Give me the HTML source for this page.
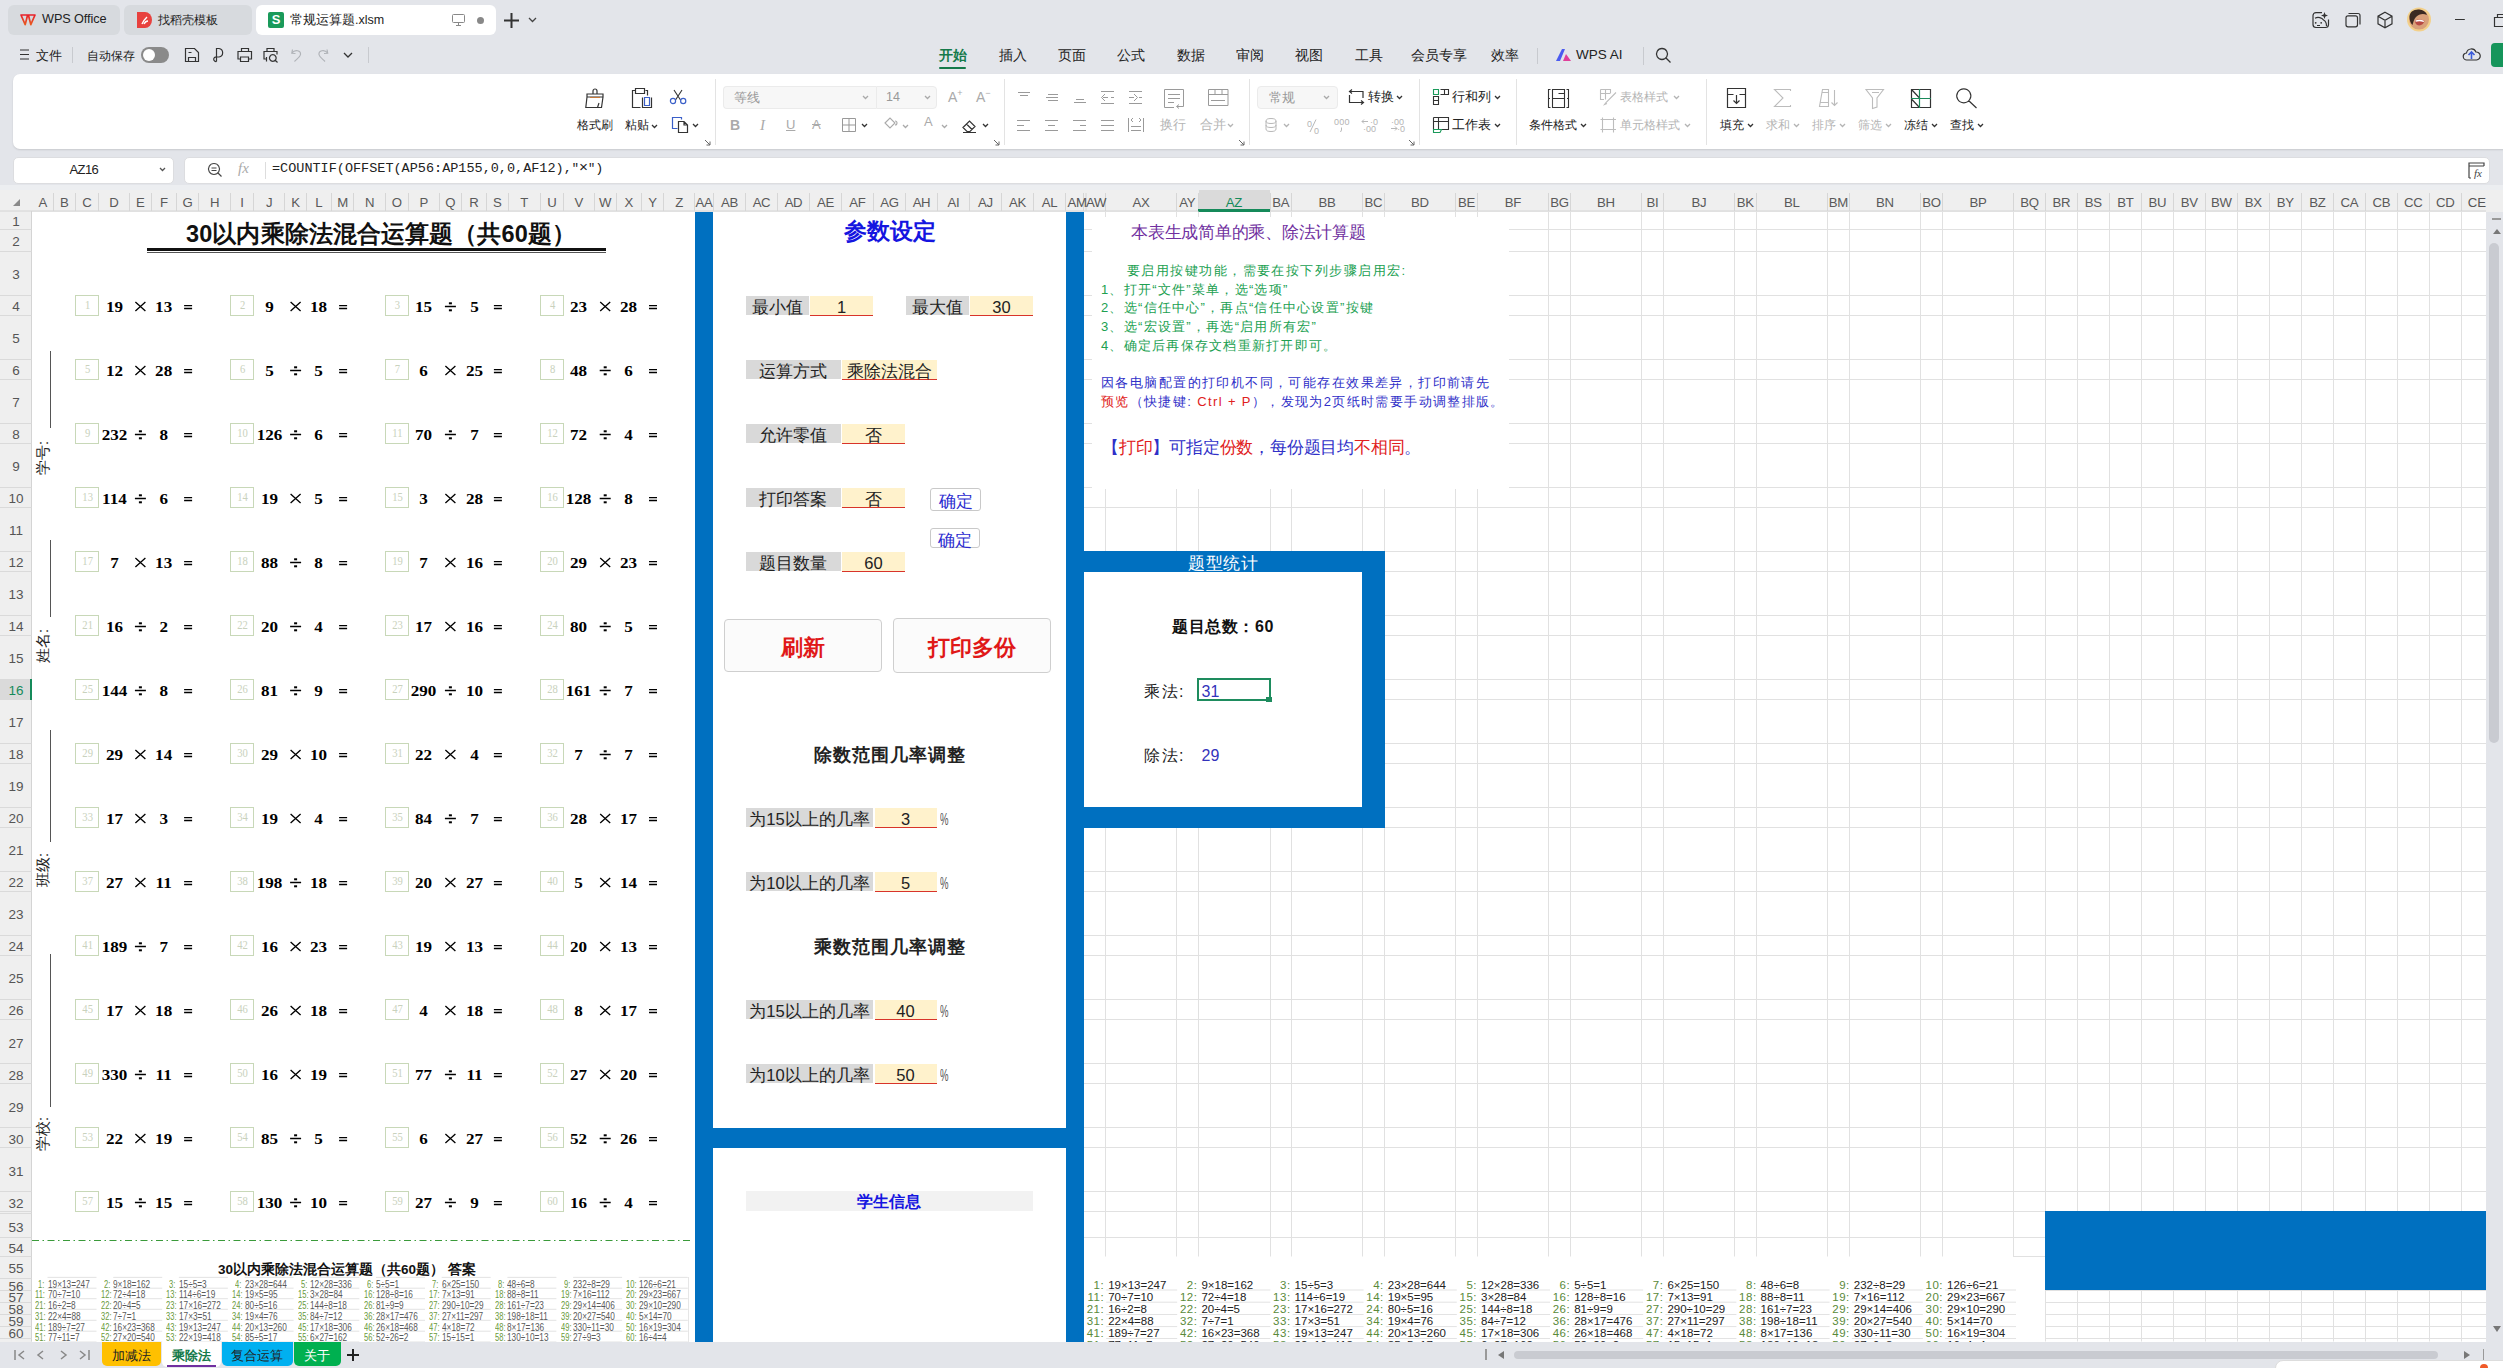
<!DOCTYPE html><html><head><meta charset="utf-8"><title>WPS</title><style>
*{box-sizing:border-box;margin:0;padding:0}
html,body{width:2503px;height:1368px;overflow:hidden;background:#e3e5ea;font-family:"Liberation Sans",sans-serif;color:#222}
.a{position:absolute;white-space:nowrap}
.c{position:absolute;white-space:nowrap;text-align:center}
svg{position:absolute;overflow:visible}
</style></head><body>

<div class="a" style="left:8px;top:5px;width:112px;height:30px;background:#d7dade;border-radius:6px"></div>
<div class="a" style="left:124px;top:5px;width:128px;height:30px;background:#d7dade;border-radius:6px"></div>
<div class="a" style="left:256px;top:5px;width:240px;height:30px;background:#fff;border-radius:6px"></div>
<svg style="left:20px;top:14px" width="16" height="12" viewBox="0 0 16 12"><defs><linearGradient id="wg" x1="0" y1="0" x2="0" y2="1"><stop offset="0" stop-color="#e8202a"/><stop offset="1" stop-color="#e85a20"/></linearGradient></defs><path d="M1 1 H7.6 L5.2 10.6 Z M8.4 1 H15 L10.8 10.6 Z" fill="none" stroke="url(#wg)" stroke-width="1.7" stroke-linejoin="round"/></svg>
<div class="a" style="left:42px;top:12px;font-size:12.7px;color:#222;letter-spacing:-0.1px">WPS Office</div>
<svg style="left:137px;top:12px" width="15" height="16" viewBox="0 0 15 16"><path d="M0 0 H8 A7 8 0 0 1 8 16 H0 Z" fill="#e8413e"/><path d="M5 12 C6 9 8 7 10 5 M7 12 C8 10 9 9 11 9" stroke="#fff" stroke-width="1.4" fill="none"/></svg>
<div class="a" style="left:158px;top:12px;font-size:12px;color:#222">找稻壳模板</div>
<div class="a" style="left:268px;top:12px;width:16px;height:16px;background:#1a9a5a;border-radius:2px;color:#fff;font-size:13px;font-weight:bold;text-align:center;line-height:16px">S</div>
<div class="a" style="left:290px;top:12px;font-size:12.5px;color:#222">常规运算题.xlsm</div>
<svg style="left:452px;top:14px" width="13" height="12" viewBox="0 0 13 12"><rect x="0.5" y="0.5" width="12" height="8" rx="1" fill="none" stroke="#888" stroke-width="1"/><path d="M4 11.5 H9 M6.5 9 V11.5" stroke="#888"/></svg>
<div class="a" style="left:477px;top:17px;width:7px;height:7px;border-radius:50%;background:#888"></div>
<svg style="left:504px;top:13px" width="15" height="15" viewBox="0 0 15 15"><path d="M7.5 0 V15 M0 7.5 H15" stroke="#333" stroke-width="2"/></svg>
<svg style="left:528px;top:17px" width="9" height="6" viewBox="0 0 9 6"><path d="M1 1 L4.5 4.5 L8 1" stroke="#444" stroke-width="1.3" fill="none"/></svg>
<svg style="left:2305px;top:5px" width="198" height="30" viewBox="0 0 198 30"><path d="M17 7.6 H11 A3 3 0 0 0 8 10.6 V19.5 A3 3 0 0 0 11 22.5 H20.5 A3 3 0 0 0 23.5 19.5 V14.5 M10 13.2 C13 11.5 17 12.8 18.5 15 C20.5 16 21.5 18 21.5 21 M12 20.5 H15 M43.5 8.5 H53 A2 2 0 0 1 55 10.5 V19.5 M43 10.8 H50.5 A2 2 0 0 1 52.5 12.8 V19.8 A2 2 0 0 1 50.5 21.8 H43 A2 2 0 0 1 41 19.8 V12.8 A2 2 0 0 1 43 10.8 Z M80 7.3 L87 11.2 V18.8 L80 22.7 L73 18.8 V11.2 Z M73 11.2 L80 15.2 L87 11.2 M80 15.2 V22.7 M150 14.5 H159.8 M192.5 12 V9.5 H203 M189.5 12.5 H201 V21.5 H189.5 Z" fill="none" stroke="#333" stroke-width="1.2"/><path d="M19.5 7 L20.4 9.6 L23 10.5 L20.4 11.4 L19.5 14 L18.6 11.4 L16 10.5 L18.6 9.6 Z" fill="#333"/><circle cx="10.7" cy="17.8" r="0.9" fill="#333"/><circle cx="16.2" cy="17.8" r="0.9" fill="#333"/><circle cx="114" cy="14.6" r="12" fill="#f3d08a"/><circle cx="114" cy="14.6" r="10" fill="#d9a07a"/><path d="M104.5 13 C104 7 109 4.2 114 4.6 C118 5 121 7 122 10 C118 8 114 9 111 12 C109 14 108 18 107.5 20 C105.5 18 104.7 15.5 104.5 13 Z" fill="#3b2a22"/><path d="M110 15.5 C113 14 117.5 14.5 119.5 16 C118.5 20 114.5 21.5 111.5 19.5 C110.5 18.5 110 17 110 15.5 Z" fill="#b84a44"/><path d="M110.3 15.5 C113 14.2 117 14.5 119.2 16 L118.5 17 C116 16 113 16 110.8 16.8 Z" fill="#fff"/></svg>
<svg style="left:20px;top:49px" width="9" height="11" viewBox="0 0 9 11"><path d="M0 1 H9 M0 5.5 H9 M0 10 H9" stroke="#333" stroke-width="1.2"/></svg>
<div class="a" style="left:36px;top:48px;font-size:12.5px;color:#222">文件</div>
<div class="a" style="left:72px;top:47px;width:1px;height:16px;background:#c8cacf"></div>
<div class="a" style="left:87px;top:48px;font-size:12px;color:#222">自动保存</div>
<div class="a" style="left:141px;top:47px;width:28px;height:16px;border-radius:8px;background:#8a8a8a"></div>
<div class="a" style="left:143px;top:49px;width:12px;height:12px;border-radius:50%;background:#fff"></div>
<svg style="left:175px;top:42px" width="200" height="26" viewBox="0 0 200 26"><path d="M10.5 6.5 H19.5 L23.5 10.5 V19.5 H10.5 Z M13.5 19.5 V15.5 H20.5 V19.5 M13.5 10.5 H16.5 M41.5 19.5 V6.5 H44 A4.3 4.3 0 0 1 44 15 H41.5 M41.5 15 A2.3 2.3 0 1 0 41.5 19.5 M66.5 9.5 V6.5 H73.5 V9.5 M66 17 H63 V9.5 H76.5 V17 H73.5 M65.5 15 H73.5 V19.5 H65.5 Z M92 9.5 V6.5 H99 V9.5 M91.5 17 H89 V9.5 H102 V12.5 M91.5 15 V19.5 M97.8 12.7 A3.3 3.3 0 1 0 97.81 12.7 M100.2 18.2 L102.5 20.5" fill="none" stroke="#333" stroke-width="1.2"/><path d="M117.5 7.5 L116.8 11.3 L120.5 11.5 M117 11 C120 7 126 8.5 125.5 12.5 C125 15 122 17 119.5 19.5 M152 7.5 L152.7 11.3 L149 11.5 M152.5 11 C149.5 7 143.5 8.5 144 12.5 C144.5 15 147.5 17 150 19.5" fill="none" stroke="#b0b3b8" stroke-width="1.2"/></svg>
<svg style="left:343px;top:52px" width="10" height="7" viewBox="0 0 10 7"><path d="M1 1 L5 5 L9 1" fill="none" stroke="#333" stroke-width="1.3" /></svg>
<div class="a" style="left:368px;top:47px;width:1px;height:16px;background:#c8cacf"></div>
<div class="a" style="left:939px;top:47px;font-size:13.5px;color:#157a4a;font-weight:bold">开始</div>
<div class="a" style="left:999px;top:47px;font-size:13.5px;color:#222;font-weight:normal">插入</div>
<div class="a" style="left:1058px;top:47px;font-size:13.5px;color:#222;font-weight:normal">页面</div>
<div class="a" style="left:1117px;top:47px;font-size:13.5px;color:#222;font-weight:normal">公式</div>
<div class="a" style="left:1177px;top:47px;font-size:13.5px;color:#222;font-weight:normal">数据</div>
<div class="a" style="left:1236px;top:47px;font-size:13.5px;color:#222;font-weight:normal">审阅</div>
<div class="a" style="left:1295px;top:47px;font-size:13.5px;color:#222;font-weight:normal">视图</div>
<div class="a" style="left:1355px;top:47px;font-size:13.5px;color:#222;font-weight:normal">工具</div>
<div class="a" style="left:1411px;top:47px;font-size:13.5px;color:#222;font-weight:normal">会员专享</div>
<div class="a" style="left:1491px;top:47px;font-size:13.5px;color:#222;font-weight:normal">效率</div>
<div class="a" style="left:939px;top:67px;width:27px;height:2px;background:#157a4a;border-radius:1px"></div>
<div class="a" style="left:1537px;top:48px;width:1px;height:16px;background:#c8cacf"></div>
<svg style="left:1556px;top:49px" width="16" height="12" viewBox="0 0 16 12"><path d="M0 12 L6 0 H9 L4 12Z" fill="#4b5bf0"/><path d="M7 12 L10 5 L15 12Z" fill="#e0409a"/></svg>
<div class="a" style="left:1576px;top:47px;font-size:13.5px;color:#222">WPS AI</div>
<div class="a" style="left:1643px;top:47px;width:1px;height:18px;background:#c8cacf"></div>
<svg style="left:1655px;top:47px" width="17" height="17" viewBox="0 0 17 17"><path d="M7 1.5 A5.5 5.5 0 1 1 6.99 1.5 M11 11 L15.5 15.5" fill="none" stroke="#333" stroke-width="1.3" /></svg>
<svg style="left:2463px;top:47px" width="17" height="14" viewBox="0 0 17 14"><path d="M4 13 A3.5 3.5 0 0 1 3.5 6 A5 5 0 0 1 13 5 A4 4 0 0 1 13.5 13 Z" fill="none" stroke="#333" stroke-width="1.2" /></svg>
<svg style="left:2467px;top:50px" width="9" height="10" viewBox="0 0 9 10"><path d="M4.5 9 V2 M1.5 5 L4.5 2 L7.5 5" stroke="#3a5bd9" stroke-width="1.6" fill="none"/></svg>
<div class="a" style="left:2491px;top:43px;width:20px;height:24px;border-radius:4px;background:#16955b"></div>
<div class="a" style="left:13px;top:74px;width:2500px;height:75px;background:#fff;border-radius:7px;box-shadow:0 1px 2px rgba(0,0,0,0.12)"></div>
<svg style="left:584px;top:86px" width="22" height="24" viewBox="0 0 22 24"><path d="M9 8 V5 A2 2 0 1 1 13 5 V8 M3 8 H19 V11 H3 Z M3 11 L1.8 21.5 H17.5 L19 11 M13.5 21.5 L15 17" fill="none" stroke="#333" stroke-width="1.2" /></svg>
<div class="a" style="left:590px;top:97px;width:10px;height:1.3px;background:#c87a3a"></div>
<div class="a" style="left:577px;top:117px;font-size:12px;color:#222">格式刷</div>
<svg style="left:630px;top:85px" width="24" height="24" viewBox="0 0 24 24"><path d="M5 5.5 H2.5 V22.5 H10.5 M15.5 5.5 H17.5 V10.5 M5.5 3.5 H14.5 V8.5 H5.5 Z M12.5 12.5 V22.5 H21.5 V12.5" fill="none" stroke="#333" stroke-width="1.2" /></svg>
<svg style="left:630px;top:85px" width="24" height="24" viewBox="0 0 24 24"><path d="M14.5 12.5 H19.5 V20.5 H14.5 Z" fill="none" stroke="#3a5fc8" stroke-width="1.2" /></svg>
<div class="a" style="left:625px;top:117px;font-size:12px;color:#222">粘贴</div>
<svg style="left:651px;top:124px" width="7" height="5" viewBox="0 0 7 5"><path d="M1 1 L3.5 3.5 L6 1" stroke="#333" stroke-width="1.3" fill="none"/></svg>
<svg style="left:668px;top:88px" width="20" height="18" viewBox="0 0 20 18"><path d="M6 2 L12.5 12 M14 2 L7.5 12" stroke="#333" stroke-width="1.1"/><circle cx="5" cy="13" r="2.6" fill="none" stroke="#3a5fc8" stroke-width="1.2"/><circle cx="15.2" cy="13" r="2.6" fill="none" stroke="#3a5fc8" stroke-width="1.2"/></svg>
<svg style="left:670px;top:115px" width="20" height="20" viewBox="0 0 20 20"><path d="M7.5 13.5 H2.5 V2.5 H11.5 V4.5" fill="none" stroke="#3a5fc8" stroke-width="1.2" /></svg>
<svg style="left:670px;top:115px" width="20" height="20" viewBox="0 0 20 20"><path d="M8.5 6.5 H14 L17.5 10 V17.5 H8.5 Z M14 6.5 V10 H17.5" fill="none" stroke="#333" stroke-width="1.2" /></svg>
<svg style="left:692px;top:123px" width="7" height="5" viewBox="0 0 7 5"><path d="M1 1 L3.5 3.5 L6 1" stroke="#333" stroke-width="1.3" fill="none"/></svg>
<svg style="left:704px;top:139px" width="7" height="7" viewBox="0 0 7 7"><path d="M1 1 L6 6 M2.5 6 H6 V2.5" fill="none" stroke="#666" stroke-width="1" /></svg>
<div class="a" style="left:715px;top:79px;width:1px;height:66px;background:#e3e3e3"></div>
<div class="a" style="left:723px;top:85.5px;width:153px;height:23px;background:#f7f7f7;border:1px solid #ebebeb;border-right:none;border-radius:4px 0 0 4px"></div>
<div class="a" style="left:876px;top:85.5px;width:61px;height:23px;background:#f7f7f7;border:1px solid #ebebeb;border-radius:0 4px 4px 0"></div>
<div class="a" style="left:734px;top:90px;font-size:12.5px;color:#999">等线</div>
<svg style="left:862px;top:95px" width="7" height="5" viewBox="0 0 7 5"><path d="M1 1 L3.5 3.5 L6 1" stroke="#aaa" stroke-width="1.3" fill="none"/></svg>
<div class="a" style="left:886px;top:90px;font-size:12.5px;color:#999">14</div>
<svg style="left:924px;top:95px" width="7" height="5" viewBox="0 0 7 5"><path d="M1 1 L3.5 3.5 L6 1" stroke="#aaa" stroke-width="1.3" fill="none"/></svg>
<div class="a" style="left:948px;top:88px;font-size:14px;color:#aaa">A<sup style="font-size:9px">+</sup></div>
<div class="a" style="left:976px;top:88px;font-size:14px;color:#aaa">A<sup style="font-size:9px">−</sup></div>
<div class="a" style="left:730px;top:117px;font-size:14px;color:#aaa"><b>B</b></div>
<div class="a" style="left:760px;top:116px;font-size:15px;color:#aaa"><i style="font-family:Liberation Serif">I</i></div>
<div class="a" style="left:786px;top:117px;font-size:13px;color:#aaa"><u>U</u></div>
<div class="a" style="left:812px;top:117px;font-size:13px;color:#aaa"><s>A</s></div>
<svg style="left:842px;top:118px" width="14" height="14" viewBox="0 0 14 14"><path d="M0.5 0.5 H13.5 V13.5 H0.5 Z M7 0.5 V13.5 M0.5 7 H13.5" fill="none" stroke="#999" stroke-width="1" /></svg>
<svg style="left:861px;top:123px" width="7" height="5" viewBox="0 0 7 5"><path d="M1 1 L3.5 3.5 L6 1" stroke="#333" stroke-width="1.3" fill="none"/></svg>
<svg style="left:883px;top:116px" width="14" height="14" viewBox="0 0 14 14"><path d="M2 7 L7 2 L12 7 L7 12 Z M12 5 A1.5 1.5 0 0 1 12 9" fill="none" stroke="#aaa" stroke-width="1.1" /></svg>
<svg style="left:902px;top:124px" width="7" height="5" viewBox="0 0 7 5"><path d="M1 1 L3.5 3.5 L6 1" stroke="#aaa" stroke-width="1.3" fill="none"/></svg>
<div class="a" style="left:924px;top:114px;font-size:13px;color:#aaa">A</div>
<svg style="left:941px;top:124px" width="7" height="5" viewBox="0 0 7 5"><path d="M1 1 L3.5 3.5 L6 1" stroke="#aaa" stroke-width="1.3" fill="none"/></svg>
<svg style="left:961px;top:117px" width="18" height="17" viewBox="0 0 18 17"><path d="M2 10.5 L8.5 4 L14 9.5 L9 14.5 H6 Z M5.5 7 L11 12.5" fill="none" stroke="#333" stroke-width="1.2" /></svg>
<div class="a" style="left:963px;top:131.8px;width:13px;height:1px;background:#333"></div>
<svg style="left:982px;top:123px" width="7" height="5" viewBox="0 0 7 5"><path d="M1 1 L3.5 3.5 L6 1" stroke="#333" stroke-width="1.3" fill="none"/></svg>
<svg style="left:993px;top:139px" width="7" height="7" viewBox="0 0 7 7"><path d="M1 1 L6 6 M2.5 6 H6 V2.5" fill="none" stroke="#666" stroke-width="1" /></svg>
<div class="a" style="left:1003.5px;top:79px;width:1px;height:66px;background:#e3e3e3"></div>
<svg style="left:1000px;top:80px" width="240" height="60" viewBox="0 0 240 60"><path d="M18 12.5 H30 M20 15.5 H28 M48 14.5 H58 M46 17.5 H58 M48 20.5 H58 M76 19.5 H84 M74 22.5 H86 M101 11.5 H114 M103 17.5 H108 M111 17.5 H114 M101 23.5 H114 M105 14 L101.5 17.5 L105 21 M129 11.5 H142 M129 17.5 H134 M139 17.5 H142 M129 23.5 H142 M134 14 L137.5 17.5 L134 21 M168 14.5 H180 M168 18.5 H180 M168 22.5 H174 M174 27.5 H164.5 V9.5 H183.5 V26.5 H177 M179 24.5 L176.5 26.5 L179 28.5 M208.5 9.5 H228 V25.5 H208.5 Z M208.5 14.5 H228 M215 9.5 V14.5 M222 9.5 V14.5 M211 20.5 H225 M17 40.5 H30 M17 45.5 H24 M17 50.5 H30 M45 40.5 H58 M48 45.5 H55 M45 50.5 H58 M73 40.5 H86 M80 45.5 H86 M73 50.5 H86 M101 40.5 H114 M101 45.5 H114 M101 50.5 H114 M128.5 38 V52 M143.5 38 V52 M131 46.5 H141 M131 50.5 H141 M133 38 L131 40 L133 42 M139 38 L141 40 L139 42" fill="none" stroke="#9a9a9a" stroke-width="1"/></svg>
<div class="a" style="left:1160px;top:117px;font-size:12.5px;color:#b4b4b4">换行</div>
<div class="a" style="left:1200px;top:117px;font-size:12.5px;color:#b4b4b4">合并</div>
<svg style="left:1227px;top:123px" width="7" height="5" viewBox="0 0 7 5"><path d="M1 1 L3.5 3.5 L6 1" stroke="#b4b4b4" stroke-width="1.3" fill="none"/></svg>
<svg style="left:1238px;top:139px" width="7" height="7" viewBox="0 0 7 7"><path d="M1 1 L6 6 M2.5 6 H6 V2.5" fill="none" stroke="#666" stroke-width="1" /></svg>
<div class="a" style="left:1248.5px;top:79px;width:1px;height:66px;background:#e3e3e3"></div>
<div class="a" style="left:1257px;top:85.5px;width:81px;height:23px;background:#f7f7f7;border:1px solid #ebebeb;border-radius:4px"></div>
<div class="a" style="left:1269px;top:90px;font-size:12.5px;color:#999">常规</div>
<svg style="left:1323px;top:95px" width="7" height="5" viewBox="0 0 7 5"><path d="M1 1 L3.5 3.5 L6 1" stroke="#aaa" stroke-width="1.3" fill="none"/></svg>
<div class="a" style="left:1368px;top:89px;font-size:12.5px;color:#222">转换</div>
<svg style="left:1396px;top:95px" width="7" height="5" viewBox="0 0 7 5"><path d="M1 1 L3.5 3.5 L6 1" stroke="#333" stroke-width="1.3" fill="none"/></svg>
<svg style="left:1250px;top:80px" width="270" height="60" viewBox="0 0 270 60"><path d="M99.5 15 V22.5 H113 M111 20.5 L113.5 22.5 L111 24.5 M113 18 V11.5 H100 M102 9.5 L99.5 11.5 L102 13.5" fill="none" stroke="#333" stroke-width="1.2"/><path d="M16 41 A5 2.5 0 0 1 26 41 A5 2.5 0 0 1 16 41 V49 A5 2.5 0 0 0 26 49 V41 M16 45 A5 2.5 0 0 0 26 45 M60 52 L66 39.5 M91.5 47.5 V50 L90.5 52 M112 41.5 H118 M114 39.5 L112 41.5 L114 43.5 M141 48.5 H147 M145 46.5 L147 48.5 L145 50.5" fill="none" stroke="#b8b8b8" stroke-width="1"/><path d="M183.5 9.5 H188.5 V14.5 H183.5 Z" fill="none" stroke="#1a9a5a" stroke-width="1.1"/><path d="M190.5 9.5 H198.5 V14.5 H190.5 M194.5 9.5 V14.5 M183.5 16.5 H188.5 V24.5 H183.5 Z M183.5 20.5 H188.5 M183.5 37.5 H198.5 V49.5 H191.5 M183.5 37.5 V49.5 M183.5 41.5 H198.5 M188.5 37.5 V49.5" fill="none" stroke="#333" stroke-width="1.1"/><path d="M183.5 49.5 V52.5 H190 L191.5 49.5 Z" fill="none" stroke="#1a9a5a" stroke-width="1.1"/></svg>
<svg style="left:1283px;top:123px" width="7" height="5" viewBox="0 0 7 5"><path d="M1 1 L3.5 3.5 L6 1" stroke="#b4b4b4" stroke-width="1.3" fill="none"/></svg>
<div class="a" style="left:1307px;top:116px;font-size:12.5px;color:#b4b4b4"><span style="font-size:9px">0</span></div>
<div class="a" style="left:1314px;top:123px;font-size:12.5px;color:#b4b4b4"><span style="font-size:9px">0</span></div>
<div class="a" style="left:1334px;top:114px;font-size:12.5px;color:#b4b4b4"><span style="font-size:9px;letter-spacing:0.3px">000</span></div>
<div class="a" style="left:1370px;top:114px;font-size:12.5px;color:#b4b4b4"><span style="font-size:9px">·0</span></div>
<div class="a" style="left:1363px;top:121px;font-size:12.5px;color:#b4b4b4"><span style="font-size:9px">·00</span></div>
<div class="a" style="left:1391px;top:114px;font-size:12.5px;color:#b4b4b4"><span style="font-size:9px">·00</span></div>
<div class="a" style="left:1397px;top:121px;font-size:12.5px;color:#b4b4b4"><span style="font-size:9px">·0</span></div>
<svg style="left:1408px;top:139px" width="7" height="7" viewBox="0 0 7 7"><path d="M1 1 L6 6 M2.5 6 H6 V2.5" fill="none" stroke="#666" stroke-width="1" /></svg>
<div class="a" style="left:1418.5px;top:79px;width:1px;height:66px;background:#e3e3e3"></div>
<div class="a" style="left:1452px;top:89px;font-size:12.5px;color:#222">行和列</div>
<svg style="left:1494px;top:95px" width="7" height="5" viewBox="0 0 7 5"><path d="M1 1 L3.5 3.5 L6 1" stroke="#333" stroke-width="1.3" fill="none"/></svg>
<div class="a" style="left:1452px;top:117px;font-size:12.5px;color:#222">工作表</div>
<svg style="left:1494px;top:123px" width="7" height="5" viewBox="0 0 7 5"><path d="M1 1 L3.5 3.5 L6 1" stroke="#333" stroke-width="1.3" fill="none"/></svg>
<div class="a" style="left:1515.5px;top:79px;width:1px;height:66px;background:#e3e3e3"></div>
<svg style="left:1520px;top:80px" width="240" height="60" viewBox="0 0 240 60"><path d="M30.5 9.5 H28.5 V27.5 H30.5 M28.5 18.5 H30 M46.5 9.5 H48.5 V27.5 H46.5 M47 18.5 H48.5 M32.5 9.5 H44.5 V27.5 H32.5 Z M32.5 18.5 H44.5 M38.5 13.5 H44.5 V18.5" fill="none" stroke="#333" stroke-width="1.1"/><path d="M80.5 9.5 H90.5 V13 M80.5 9.5 V19.5 H84 M80.5 13.5 H90.5 M85.5 9.5 V19.5 M96 12.5 L86 22.5 L84.5 24.5 L87 23.5 M82.5 37.5 V52.5 M93.5 37.5 V52.5 M80.5 39.5 H96 M80.5 49.5 H96" fill="none" stroke="#bdbdbd" stroke-width="1.1"/><path d="M207.5 8.5 H225.5 V27.5 H207.5 Z M207.5 14.5 H213.5 M219.5 14.5 H225.5 M216.5 15 V23.5 M213.5 20.5 L216.5 23.5 L219.5 20.5" fill="none" stroke="#333" stroke-width="1.2"/></svg>
<div class="a" style="left:1529px;top:117px;font-size:12px;color:#222">条件格式</div>
<svg style="left:1580px;top:123px" width="7" height="5" viewBox="0 0 7 5"><path d="M1 1 L3.5 3.5 L6 1" stroke="#333" stroke-width="1.3" fill="none"/></svg>
<div class="a" style="left:1620px;top:89px;font-size:12px;color:#b4b4b4">表格样式</div>
<svg style="left:1673px;top:95px" width="7" height="5" viewBox="0 0 7 5"><path d="M1 1 L3.5 3.5 L6 1" stroke="#b4b4b4" stroke-width="1.3" fill="none"/></svg>
<div class="a" style="left:1620px;top:117px;font-size:12px;color:#b4b4b4">单元格样式</div>
<svg style="left:1684px;top:123px" width="7" height="5" viewBox="0 0 7 5"><path d="M1 1 L3.5 3.5 L6 1" stroke="#b4b4b4" stroke-width="1.3" fill="none"/></svg>
<div class="a" style="left:1706px;top:79px;width:1px;height:66px;background:#e3e3e3"></div>
<div class="a" style="left:1720px;top:117px;font-size:12px;color:#222">填充</div>
<svg style="left:1747px;top:123px" width="7" height="5" viewBox="0 0 7 5"><path d="M1 1 L3.5 3.5 L6 1" stroke="#333" stroke-width="1.3" fill="none"/></svg>
<svg style="left:1750px;top:80px" width="240" height="40" viewBox="0 0 240 40"><path d="M40.5 11 V9.5 H24.5 L33 18 L24.5 26.5 H40.5 V25 M72.5 9.5 H78.5 V26.5 H69.5 Z M70.5 22.5 H78.5 M71.5 12.5 H78.5 M84.5 10 V25.5 M81.5 22.5 L84.5 25.5 L87.5 22.5 M116 9.5 H133.5 L127 18 V27 L122.5 28.5 V18 Z M122 12.5 H129" fill="none" stroke="#bcbcbc" stroke-width="1.1"/><path d="M161.5 9.5 H180.5 V27.5 H161.5 Z M162 10 L169 17.5 M162 19.5 L169 27 M213.8 8.8 A7 7 0 1 1 213.79 8.8 M218.8 20.8 L226.5 28" fill="none" stroke="#333" stroke-width="1.2"/><path d="M169.5 9 V28 M161 18.5 H181" fill="none" stroke="#1a8a5a" stroke-width="1.2"/></svg>
<div class="a" style="left:1766px;top:117px;font-size:12px;color:#b4b4b4">求和</div>
<svg style="left:1793px;top:123px" width="7" height="5" viewBox="0 0 7 5"><path d="M1 1 L3.5 3.5 L6 1" stroke="#b4b4b4" stroke-width="1.3" fill="none"/></svg>
<div class="a" style="left:1812px;top:117px;font-size:12px;color:#b4b4b4">排序</div>
<svg style="left:1839px;top:123px" width="7" height="5" viewBox="0 0 7 5"><path d="M1 1 L3.5 3.5 L6 1" stroke="#b4b4b4" stroke-width="1.3" fill="none"/></svg>
<div class="a" style="left:1858px;top:117px;font-size:12px;color:#b4b4b4">筛选</div>
<svg style="left:1885px;top:123px" width="7" height="5" viewBox="0 0 7 5"><path d="M1 1 L3.5 3.5 L6 1" stroke="#b4b4b4" stroke-width="1.3" fill="none"/></svg>
<div class="a" style="left:1904px;top:117px;font-size:12px;color:#222">冻结</div>
<svg style="left:1931px;top:123px" width="7" height="5" viewBox="0 0 7 5"><path d="M1 1 L3.5 3.5 L6 1" stroke="#333" stroke-width="1.3" fill="none"/></svg>
<div class="a" style="left:1950px;top:117px;font-size:12px;color:#222">查找</div>
<svg style="left:1977px;top:123px" width="7" height="5" viewBox="0 0 7 5"><path d="M1 1 L3.5 3.5 L6 1" stroke="#333" stroke-width="1.3" fill="none"/></svg>
<div class="a" style="left:13px;top:157px;width:161px;height:27px;background:#fff;border:1px solid #dcdde0;border-radius:5px"></div>
<div class="a" style="left:69.5px;top:162px;font-size:13px;color:#222;letter-spacing:-0.6px">AZ16</div>
<svg style="left:159px;top:167px" width="7" height="5" viewBox="0 0 7 5"><path d="M1 1 L3.5 3.5 L6 1" stroke="#555" stroke-width="1.3" fill="none"/></svg>
<div class="a" style="left:184px;top:157px;width:2306px;height:27px;background:#fff;border:1px solid #dcdde0;border-radius:5px"></div>
<svg style="left:207px;top:162px" width="16" height="16" viewBox="0 0 16 16"><path d="M7 1.5 A5.5 5.5 0 1 1 6.99 1.5 M4.5 6 H9.5 M4.5 8.5 H9.5 M11 11 L14.5 14.5" fill="none" stroke="#444" stroke-width="1.2" /></svg>
<div class="a" style="left:238px;top:160px;font-size:15px;color:#aaa;font-family:'Liberation Serif',serif;font-style:italic">fx</div>
<div class="a" style="left:265px;top:162px;width:1px;height:17px;background:#ddd"></div>
<div class="a" style="left:272px;top:161px;font-size:13.5px;color:#222;font-family:'Liberation Mono',monospace;letter-spacing:0px">=COUNTIF(OFFSET(AP56:AP155,0,0,AF12),<span style="font-size:12px">″</span><span style="font-size:15px;line-height:10px">×</span><span style="font-size:12px">″</span>)</div>
<svg style="left:2468px;top:162px" width="17" height="17" viewBox="0 0 17 17"><path d="M1 16 V1 H16 V4 M1 4 H16 M3 16 H1" fill="none" stroke="#444" stroke-width="1.2" /></svg>
<div class="a" style="left:2474px;top:167px;font-size:11px;color:#444;font-style:italic;font-family:'Liberation Serif',serif">fx</div>
<div class="a" style="left:0px;top:185px;width:2503px;height:5px;background:#eceef1"></div>
<div class="a" style="left:0px;top:190px;width:2503px;height:21.5px;background:#efefef"></div>
<div class="a" style="left:0px;top:211.5px;width:32px;height:1130px;background:#efefef"></div>
<svg style="left:0px;top:0px" width="2503" height="1368"><path d="M0 211 H2486" stroke="#d4d4d4" stroke-width="1"/><path d="M31.5 211 V1341.5" stroke="#d4d4d4" stroke-width="1"/><path d="M53.5 193 V211" stroke="#d6d6d6" stroke-width="1"/><path d="M75.5 193 V211" stroke="#d6d6d6" stroke-width="1"/><path d="M98.5 193 V211" stroke="#d6d6d6" stroke-width="1"/><path d="M129.5 193 V211" stroke="#d6d6d6" stroke-width="1"/><path d="M151.5 193 V211" stroke="#d6d6d6" stroke-width="1"/><path d="M176.5 193 V211" stroke="#d6d6d6" stroke-width="1"/><path d="M198.5 193 V211" stroke="#d6d6d6" stroke-width="1"/><path d="M230.5 193 V211" stroke="#d6d6d6" stroke-width="1"/><path d="M253.5 193 V211" stroke="#d6d6d6" stroke-width="1"/><path d="M284.5 193 V211" stroke="#d6d6d6" stroke-width="1"/><path d="M306.5 193 V211" stroke="#d6d6d6" stroke-width="1"/><path d="M331.5 193 V211" stroke="#d6d6d6" stroke-width="1"/><path d="M353.5 193 V211" stroke="#d6d6d6" stroke-width="1"/><path d="M385.5 193 V211" stroke="#d6d6d6" stroke-width="1"/><path d="M408.5 193 V211" stroke="#d6d6d6" stroke-width="1"/><path d="M439.5 193 V211" stroke="#d6d6d6" stroke-width="1"/><path d="M461.5 193 V211" stroke="#d6d6d6" stroke-width="1"/><path d="M486.5 193 V211" stroke="#d6d6d6" stroke-width="1"/><path d="M508.5 193 V211" stroke="#d6d6d6" stroke-width="1"/><path d="M540.5 193 V211" stroke="#d6d6d6" stroke-width="1"/><path d="M563.5 193 V211" stroke="#d6d6d6" stroke-width="1"/><path d="M594.5 193 V211" stroke="#d6d6d6" stroke-width="1"/><path d="M616.5 193 V211" stroke="#d6d6d6" stroke-width="1"/><path d="M641.5 193 V211" stroke="#d6d6d6" stroke-width="1"/><path d="M663.5 193 V211" stroke="#d6d6d6" stroke-width="1"/><path d="M694.5 193 V211" stroke="#d6d6d6" stroke-width="1"/><path d="M713.5 193 V211" stroke="#d6d6d6" stroke-width="1"/><path d="M745.5 193 V211" stroke="#d6d6d6" stroke-width="1"/><path d="M777.5 193 V211" stroke="#d6d6d6" stroke-width="1"/><path d="M809.5 193 V211" stroke="#d6d6d6" stroke-width="1"/><path d="M841.5 193 V211" stroke="#d6d6d6" stroke-width="1"/><path d="M873.5 193 V211" stroke="#d6d6d6" stroke-width="1"/><path d="M905.5 193 V211" stroke="#d6d6d6" stroke-width="1"/><path d="M937.5 193 V211" stroke="#d6d6d6" stroke-width="1"/><path d="M969.5 193 V211" stroke="#d6d6d6" stroke-width="1"/><path d="M1001.5 193 V211" stroke="#d6d6d6" stroke-width="1"/><path d="M1033.5 193 V211" stroke="#d6d6d6" stroke-width="1"/><path d="M1065.5 193 V211" stroke="#d6d6d6" stroke-width="1"/><path d="M1083.5 193 V211" stroke="#d6d6d6" stroke-width="1"/><path d="M1105.5 193 V211" stroke="#d6d6d6" stroke-width="1"/><path d="M1176.5 193 V211" stroke="#d6d6d6" stroke-width="1"/><path d="M1198.5 193 V211" stroke="#d6d6d6" stroke-width="1"/><path d="M1270.5 193 V211" stroke="#d6d6d6" stroke-width="1"/><path d="M1291.5 193 V211" stroke="#d6d6d6" stroke-width="1"/><path d="M1362.5 193 V211" stroke="#d6d6d6" stroke-width="1"/><path d="M1384.5 193 V211" stroke="#d6d6d6" stroke-width="1"/><path d="M1455.5 193 V211" stroke="#d6d6d6" stroke-width="1"/><path d="M1477.5 193 V211" stroke="#d6d6d6" stroke-width="1"/><path d="M1548.5 193 V211" stroke="#d6d6d6" stroke-width="1"/><path d="M1570.5 193 V211" stroke="#d6d6d6" stroke-width="1"/><path d="M1641.5 193 V211" stroke="#d6d6d6" stroke-width="1"/><path d="M1663.5 193 V211" stroke="#d6d6d6" stroke-width="1"/><path d="M1734.5 193 V211" stroke="#d6d6d6" stroke-width="1"/><path d="M1756.5 193 V211" stroke="#d6d6d6" stroke-width="1"/><path d="M1827.5 193 V211" stroke="#d6d6d6" stroke-width="1"/><path d="M1849.5 193 V211" stroke="#d6d6d6" stroke-width="1"/><path d="M1920.5 193 V211" stroke="#d6d6d6" stroke-width="1"/><path d="M1942.5 193 V211" stroke="#d6d6d6" stroke-width="1"/><path d="M2013.5 193 V211" stroke="#d6d6d6" stroke-width="1"/><path d="M2045.5 193 V211" stroke="#d6d6d6" stroke-width="1"/><path d="M2077.5 193 V211" stroke="#d6d6d6" stroke-width="1"/><path d="M2109.5 193 V211" stroke="#d6d6d6" stroke-width="1"/><path d="M2141.5 193 V211" stroke="#d6d6d6" stroke-width="1"/><path d="M2173.5 193 V211" stroke="#d6d6d6" stroke-width="1"/><path d="M2205.5 193 V211" stroke="#d6d6d6" stroke-width="1"/><path d="M2237.5 193 V211" stroke="#d6d6d6" stroke-width="1"/><path d="M2269.5 193 V211" stroke="#d6d6d6" stroke-width="1"/><path d="M2301.5 193 V211" stroke="#d6d6d6" stroke-width="1"/><path d="M2333.5 193 V211" stroke="#d6d6d6" stroke-width="1"/><path d="M2365.5 193 V211" stroke="#d6d6d6" stroke-width="1"/><path d="M2397.5 193 V211" stroke="#d6d6d6" stroke-width="1"/><path d="M2429.5 193 V211" stroke="#d6d6d6" stroke-width="1"/><path d="M2461.5 193 V211" stroke="#d6d6d6" stroke-width="1"/><path d="M1083.5 193 V211 M1086 193 V211" stroke="#d6d6d6" stroke-width="1"/><path d="M0 229.5 H31.5" stroke="#dadada" stroke-width="1"/><path d="M0 251.5 H31.5" stroke="#dadada" stroke-width="1"/><path d="M0 295.5 H31.5" stroke="#dadada" stroke-width="1"/><path d="M0 315.5 H31.5" stroke="#dadada" stroke-width="1"/><path d="M0 359.5 H31.5" stroke="#dadada" stroke-width="1"/><path d="M0 379.5 H31.5" stroke="#dadada" stroke-width="1"/><path d="M0 423.5 H31.5" stroke="#dadada" stroke-width="1"/><path d="M0 443.5 H31.5" stroke="#dadada" stroke-width="1"/><path d="M0 487.5 H31.5" stroke="#dadada" stroke-width="1"/><path d="M0 507.5 H31.5" stroke="#dadada" stroke-width="1"/><path d="M0 551.5 H31.5" stroke="#dadada" stroke-width="1"/><path d="M0 571.5 H31.5" stroke="#dadada" stroke-width="1"/><path d="M0 615.5 H31.5" stroke="#dadada" stroke-width="1"/><path d="M0 635.5 H31.5" stroke="#dadada" stroke-width="1"/><path d="M0 679.5 H31.5" stroke="#dadada" stroke-width="1"/><path d="M0 699.5 H31.5" stroke="#dadada" stroke-width="1"/><path d="M0 743.5 H31.5" stroke="#dadada" stroke-width="1"/><path d="M0 763.5 H31.5" stroke="#dadada" stroke-width="1"/><path d="M0 807.5 H31.5" stroke="#dadada" stroke-width="1"/><path d="M0 827.5 H31.5" stroke="#dadada" stroke-width="1"/><path d="M0 871.5 H31.5" stroke="#dadada" stroke-width="1"/><path d="M0 891.5 H31.5" stroke="#dadada" stroke-width="1"/><path d="M0 935.5 H31.5" stroke="#dadada" stroke-width="1"/><path d="M0 955.5 H31.5" stroke="#dadada" stroke-width="1"/><path d="M0 999.5 H31.5" stroke="#dadada" stroke-width="1"/><path d="M0 1019.5 H31.5" stroke="#dadada" stroke-width="1"/><path d="M0 1063.5 H31.5" stroke="#dadada" stroke-width="1"/><path d="M0 1083.5 H31.5" stroke="#dadada" stroke-width="1"/><path d="M0 1127.5 H31.5" stroke="#dadada" stroke-width="1"/><path d="M0 1147.5 H31.5" stroke="#dadada" stroke-width="1"/><path d="M0 1191.5 H31.5" stroke="#dadada" stroke-width="1"/><path d="M0 1211.5 H31.5" stroke="#dadada" stroke-width="1"/><path d="M0 1237.5 H31.5" stroke="#dadada" stroke-width="1"/><path d="M0 1256.5 H31.5" stroke="#dadada" stroke-width="1"/><path d="M0 1278.5 H31.5" stroke="#dadada" stroke-width="1"/><path d="M0 1290.5 H31.5" stroke="#dadada" stroke-width="1"/><path d="M0 1302.5 H31.5" stroke="#dadada" stroke-width="1"/><path d="M0 1314.5 H31.5" stroke="#dadada" stroke-width="1"/><path d="M0 1326.5 H31.5" stroke="#dadada" stroke-width="1"/><path d="M0 1338.5 H31.5" stroke="#dadada" stroke-width="1"/><path d="M0 1213.5 H31.5" stroke="#dadada" stroke-width="1"/></svg>
<div class="a" style="left:1198.5px;top:190px;width:71.5px;height:21px;background:#dadada"></div>
<div class="a" style="left:1198.0px;top:209px;width:72.0px;height:2.5px;background:#158a5a"></div>
<div class="a" style="left:0px;top:679.2px;width:31px;height:20.4px;background:#dadada"></div>
<div class="a" style="left:29.8px;top:679.2px;width:2.2px;height:20.4px;background:#158a5a"></div>
<svg style="left:13px;top:198.5px" width="7" height="7" viewBox="0 0 7 7"><path d="M7 0 V7 H0 Z" fill="#8a8a8a"/></svg>
<div class="c" style="left:28.0px;top:194.5px;width:29.5px;font-size:13.2px;color:#5a5a5a;letter-spacing:-0.3px">A</div>
<div class="c" style="left:49.5px;top:194.5px;width:29.7px;font-size:13.2px;color:#5a5a5a;letter-spacing:-0.3px">B</div>
<div class="c" style="left:71.2px;top:194.5px;width:31.3px;font-size:13.2px;color:#5a5a5a;letter-spacing:-0.3px">C</div>
<div class="c" style="left:94.5px;top:194.5px;width:38.9px;font-size:13.2px;color:#5a5a5a;letter-spacing:-0.3px">D</div>
<div class="c" style="left:125.4px;top:194.5px;width:29.9px;font-size:13.2px;color:#5a5a5a;letter-spacing:-0.3px">E</div>
<div class="c" style="left:147.3px;top:194.5px;width:33.3px;font-size:13.2px;color:#5a5a5a;letter-spacing:-0.3px">F</div>
<div class="c" style="left:172.6px;top:194.5px;width:29.9px;font-size:13.2px;color:#5a5a5a;letter-spacing:-0.3px">G</div>
<div class="c" style="left:194.5px;top:194.5px;width:40.0px;font-size:13.2px;color:#5a5a5a;letter-spacing:-0.3px">H</div>
<div class="c" style="left:226.5px;top:194.5px;width:31.1px;font-size:13.2px;color:#5a5a5a;letter-spacing:-0.3px">I</div>
<div class="c" style="left:249.6px;top:194.5px;width:39.2px;font-size:13.2px;color:#5a5a5a;letter-spacing:-0.3px">J</div>
<div class="c" style="left:280.8px;top:194.5px;width:29.5px;font-size:13.2px;color:#5a5a5a;letter-spacing:-0.3px">K</div>
<div class="c" style="left:302.3px;top:194.5px;width:33.2px;font-size:13.2px;color:#5a5a5a;letter-spacing:-0.3px">L</div>
<div class="c" style="left:327.5px;top:194.5px;width:30.3px;font-size:13.2px;color:#5a5a5a;letter-spacing:-0.3px">M</div>
<div class="c" style="left:349.8px;top:194.5px;width:39.5px;font-size:13.2px;color:#5a5a5a;letter-spacing:-0.3px">N</div>
<div class="c" style="left:381.3px;top:194.5px;width:31.0px;font-size:13.2px;color:#5a5a5a;letter-spacing:-0.3px">O</div>
<div class="c" style="left:404.3px;top:194.5px;width:38.9px;font-size:13.2px;color:#5a5a5a;letter-spacing:-0.3px">P</div>
<div class="c" style="left:435.2px;top:194.5px;width:30.3px;font-size:13.2px;color:#5a5a5a;letter-spacing:-0.3px">Q</div>
<div class="c" style="left:457.5px;top:194.5px;width:32.9px;font-size:13.2px;color:#5a5a5a;letter-spacing:-0.3px">R</div>
<div class="c" style="left:482.4px;top:194.5px;width:29.9px;font-size:13.2px;color:#5a5a5a;letter-spacing:-0.3px">S</div>
<div class="c" style="left:504.3px;top:194.5px;width:39.9px;font-size:13.2px;color:#5a5a5a;letter-spacing:-0.3px">T</div>
<div class="c" style="left:536.2px;top:194.5px;width:31.2px;font-size:13.2px;color:#5a5a5a;letter-spacing:-0.3px">U</div>
<div class="c" style="left:559.4px;top:194.5px;width:38.9px;font-size:13.2px;color:#5a5a5a;letter-spacing:-0.3px">V</div>
<div class="c" style="left:590.3px;top:194.5px;width:29.8px;font-size:13.2px;color:#5a5a5a;letter-spacing:-0.3px">W</div>
<div class="c" style="left:612.1px;top:194.5px;width:33.2px;font-size:13.2px;color:#5a5a5a;letter-spacing:-0.3px">X</div>
<div class="c" style="left:637.3px;top:194.5px;width:30.3px;font-size:13.2px;color:#5a5a5a;letter-spacing:-0.3px">Y</div>
<div class="c" style="left:659.6px;top:194.5px;width:38.9px;font-size:13.2px;color:#5a5a5a;letter-spacing:-0.3px">Z</div>
<div class="c" style="left:690.5px;top:194.5px;width:27.0px;font-size:13.2px;color:#5a5a5a;letter-spacing:-0.3px">AA</div>
<div class="c" style="left:709.5px;top:194.5px;width:40.0px;font-size:13.2px;color:#5a5a5a;letter-spacing:-0.3px">AB</div>
<div class="c" style="left:741.5px;top:194.5px;width:40.0px;font-size:13.2px;color:#5a5a5a;letter-spacing:-0.3px">AC</div>
<div class="c" style="left:773.5px;top:194.5px;width:40.0px;font-size:13.2px;color:#5a5a5a;letter-spacing:-0.3px">AD</div>
<div class="c" style="left:805.5px;top:194.5px;width:40.0px;font-size:13.2px;color:#5a5a5a;letter-spacing:-0.3px">AE</div>
<div class="c" style="left:837.5px;top:194.5px;width:40.0px;font-size:13.2px;color:#5a5a5a;letter-spacing:-0.3px">AF</div>
<div class="c" style="left:869.5px;top:194.5px;width:40.0px;font-size:13.2px;color:#5a5a5a;letter-spacing:-0.3px">AG</div>
<div class="c" style="left:901.5px;top:194.5px;width:40.0px;font-size:13.2px;color:#5a5a5a;letter-spacing:-0.3px">AH</div>
<div class="c" style="left:933.5px;top:194.5px;width:40.0px;font-size:13.2px;color:#5a5a5a;letter-spacing:-0.3px">AI</div>
<div class="c" style="left:965.5px;top:194.5px;width:40.0px;font-size:13.2px;color:#5a5a5a;letter-spacing:-0.3px">AJ</div>
<div class="c" style="left:997.5px;top:194.5px;width:40.0px;font-size:13.2px;color:#5a5a5a;letter-spacing:-0.3px">AK</div>
<div class="c" style="left:1029.5px;top:194.5px;width:40.0px;font-size:13.2px;color:#5a5a5a;letter-spacing:-0.3px">AL</div>
<div class="c" style="left:1064px;top:194.5px;width:26px;font-size:13.2px;color:#555;letter-spacing:-0.5px">AM</div>
<div class="c" style="left:1084px;top:194.5px;width:24px;font-size:13.2px;color:#555;letter-spacing:-0.5px">AW</div>
<div class="c" style="left:1101.6px;top:194.5px;width:78.9px;font-size:13.2px;color:#5a5a5a;letter-spacing:-0.3px">AX</div>
<div class="c" style="left:1172.5px;top:194.5px;width:29.5px;font-size:13.2px;color:#5a5a5a;letter-spacing:-0.3px">AY</div>
<div class="c" style="left:1194.0px;top:194.5px;width:80.0px;font-size:13.2px;color:#158a5a;letter-spacing:-0.3px">AZ</div>
<div class="c" style="left:1266.0px;top:194.5px;width:29.5px;font-size:13.2px;color:#5a5a5a;letter-spacing:-0.3px">BA</div>
<div class="c" style="left:1287.5px;top:194.5px;width:78.8px;font-size:13.2px;color:#5a5a5a;letter-spacing:-0.3px">BB</div>
<div class="c" style="left:1358.3px;top:194.5px;width:30.2px;font-size:13.2px;color:#5a5a5a;letter-spacing:-0.3px">BC</div>
<div class="c" style="left:1380.5px;top:194.5px;width:78.9px;font-size:13.2px;color:#5a5a5a;letter-spacing:-0.3px">BD</div>
<div class="c" style="left:1451.4px;top:194.5px;width:30.1px;font-size:13.2px;color:#5a5a5a;letter-spacing:-0.3px">BE</div>
<div class="c" style="left:1473.5px;top:194.5px;width:78.9px;font-size:13.2px;color:#5a5a5a;letter-spacing:-0.3px">BF</div>
<div class="c" style="left:1544.4px;top:194.5px;width:30.0px;font-size:13.2px;color:#5a5a5a;letter-spacing:-0.3px">BG</div>
<div class="c" style="left:1566.4px;top:194.5px;width:79.1px;font-size:13.2px;color:#5a5a5a;letter-spacing:-0.3px">BH</div>
<div class="c" style="left:1637.5px;top:194.5px;width:30.0px;font-size:13.2px;color:#5a5a5a;letter-spacing:-0.3px">BI</div>
<div class="c" style="left:1659.5px;top:194.5px;width:78.7px;font-size:13.2px;color:#5a5a5a;letter-spacing:-0.3px">BJ</div>
<div class="c" style="left:1730.2px;top:194.5px;width:30.2px;font-size:13.2px;color:#5a5a5a;letter-spacing:-0.3px">BK</div>
<div class="c" style="left:1752.4px;top:194.5px;width:78.9px;font-size:13.2px;color:#5a5a5a;letter-spacing:-0.3px">BL</div>
<div class="c" style="left:1823.3px;top:194.5px;width:30.3px;font-size:13.2px;color:#5a5a5a;letter-spacing:-0.3px">BM</div>
<div class="c" style="left:1845.6px;top:194.5px;width:78.7px;font-size:13.2px;color:#5a5a5a;letter-spacing:-0.3px">BN</div>
<div class="c" style="left:1916.3px;top:194.5px;width:30.3px;font-size:13.2px;color:#5a5a5a;letter-spacing:-0.3px">BO</div>
<div class="c" style="left:1938.6px;top:194.5px;width:78.9px;font-size:13.2px;color:#5a5a5a;letter-spacing:-0.3px">BP</div>
<div class="c" style="left:2009.5px;top:194.5px;width:39.8px;font-size:13.2px;color:#5a5a5a;letter-spacing:-0.3px">BQ</div>
<div class="c" style="left:2041.3px;top:194.5px;width:40.0px;font-size:13.2px;color:#5a5a5a;letter-spacing:-0.3px">BR</div>
<div class="c" style="left:2073.3px;top:194.5px;width:40.0px;font-size:13.2px;color:#5a5a5a;letter-spacing:-0.3px">BS</div>
<div class="c" style="left:2105.3px;top:194.5px;width:40.0px;font-size:13.2px;color:#5a5a5a;letter-spacing:-0.3px">BT</div>
<div class="c" style="left:2137.3px;top:194.5px;width:40.0px;font-size:13.2px;color:#5a5a5a;letter-spacing:-0.3px">BU</div>
<div class="c" style="left:2169.3px;top:194.5px;width:40.0px;font-size:13.2px;color:#5a5a5a;letter-spacing:-0.3px">BV</div>
<div class="c" style="left:2201.3px;top:194.5px;width:40.0px;font-size:13.2px;color:#5a5a5a;letter-spacing:-0.3px">BW</div>
<div class="c" style="left:2233.3px;top:194.5px;width:40.0px;font-size:13.2px;color:#5a5a5a;letter-spacing:-0.3px">BX</div>
<div class="c" style="left:2265.3px;top:194.5px;width:40.0px;font-size:13.2px;color:#5a5a5a;letter-spacing:-0.3px">BY</div>
<div class="c" style="left:2297.3px;top:194.5px;width:40.0px;font-size:13.2px;color:#5a5a5a;letter-spacing:-0.3px">BZ</div>
<div class="c" style="left:2329.3px;top:194.5px;width:40.0px;font-size:13.2px;color:#5a5a5a;letter-spacing:-0.3px">CA</div>
<div class="c" style="left:2361.3px;top:194.5px;width:40.0px;font-size:13.2px;color:#5a5a5a;letter-spacing:-0.3px">CB</div>
<div class="c" style="left:2393.3px;top:194.5px;width:40.0px;font-size:13.2px;color:#5a5a5a;letter-spacing:-0.3px">CC</div>
<div class="c" style="left:2425.3px;top:194.5px;width:40.0px;font-size:13.2px;color:#5a5a5a;letter-spacing:-0.3px">CD</div>
<div class="c" style="left:2457px;top:194.5px;width:40px;font-size:13.2px;color:#555">CE</div>
<div class="c" style="left:0px;top:215.3px;width:32px;font-size:13.5px;line-height:14px;color:#555">1</div>
<div class="c" style="left:0px;top:235.2px;width:32px;font-size:13.5px;line-height:14px;color:#555">2</div>
<div class="c" style="left:0px;top:267.9px;width:32px;font-size:13.5px;line-height:14px;color:#555">3</div>
<div class="c" style="left:0px;top:300.0px;width:32px;font-size:13.5px;line-height:14px;color:#555">4</div>
<div class="c" style="left:0px;top:332.0px;width:32px;font-size:13.5px;line-height:14px;color:#555">5</div>
<div class="c" style="left:0px;top:364.0px;width:32px;font-size:13.5px;line-height:14px;color:#555">6</div>
<div class="c" style="left:0px;top:396.1px;width:32px;font-size:13.5px;line-height:14px;color:#555">7</div>
<div class="c" style="left:0px;top:428.1px;width:32px;font-size:13.5px;line-height:14px;color:#555">8</div>
<div class="c" style="left:0px;top:460.1px;width:32px;font-size:13.5px;line-height:14px;color:#555">9</div>
<div class="c" style="left:0px;top:492.1px;width:32px;font-size:13.5px;line-height:14px;color:#555">10</div>
<div class="c" style="left:0px;top:524.1px;width:32px;font-size:13.5px;line-height:14px;color:#555">11</div>
<div class="c" style="left:0px;top:556.2px;width:32px;font-size:13.5px;line-height:14px;color:#555">12</div>
<div class="c" style="left:0px;top:588.2px;width:32px;font-size:13.5px;line-height:14px;color:#555">13</div>
<div class="c" style="left:0px;top:620.2px;width:32px;font-size:13.5px;line-height:14px;color:#555">14</div>
<div class="c" style="left:0px;top:652.2px;width:32px;font-size:13.5px;line-height:14px;color:#555">15</div>
<div class="c" style="left:0px;top:684.2px;width:32px;font-size:13.5px;line-height:14px;color:#158a5a">16</div>
<div class="c" style="left:0px;top:716.3px;width:32px;font-size:13.5px;line-height:14px;color:#555">17</div>
<div class="c" style="left:0px;top:748.3px;width:32px;font-size:13.5px;line-height:14px;color:#555">18</div>
<div class="c" style="left:0px;top:780.3px;width:32px;font-size:13.5px;line-height:14px;color:#555">19</div>
<div class="c" style="left:0px;top:812.3px;width:32px;font-size:13.5px;line-height:14px;color:#555">20</div>
<div class="c" style="left:0px;top:844.3px;width:32px;font-size:13.5px;line-height:14px;color:#555">21</div>
<div class="c" style="left:0px;top:876.4px;width:32px;font-size:13.5px;line-height:14px;color:#555">22</div>
<div class="c" style="left:0px;top:908.4px;width:32px;font-size:13.5px;line-height:14px;color:#555">23</div>
<div class="c" style="left:0px;top:940.4px;width:32px;font-size:13.5px;line-height:14px;color:#555">24</div>
<div class="c" style="left:0px;top:972.4px;width:32px;font-size:13.5px;line-height:14px;color:#555">25</div>
<div class="c" style="left:0px;top:1004.4px;width:32px;font-size:13.5px;line-height:14px;color:#555">26</div>
<div class="c" style="left:0px;top:1036.5px;width:32px;font-size:13.5px;line-height:14px;color:#555">27</div>
<div class="c" style="left:0px;top:1068.5px;width:32px;font-size:13.5px;line-height:14px;color:#555">28</div>
<div class="c" style="left:0px;top:1100.5px;width:32px;font-size:13.5px;line-height:14px;color:#555">29</div>
<div class="c" style="left:0px;top:1132.5px;width:32px;font-size:13.5px;line-height:14px;color:#555">30</div>
<div class="c" style="left:0px;top:1164.5px;width:32px;font-size:13.5px;line-height:14px;color:#555">31</div>
<div class="c" style="left:0px;top:1196.6px;width:32px;font-size:13.5px;line-height:14px;color:#555">32</div>
<div class="c" style="left:0px;top:1220.7px;width:32px;font-size:13.5px;line-height:14px;color:#555">53</div>
<div class="c" style="left:0px;top:1241.8px;width:32px;font-size:13.5px;line-height:14px;color:#555">54</div>
<div class="c" style="left:0px;top:1262.2px;width:32px;font-size:13.5px;line-height:14px;color:#555">55</div>
<div class="c" style="left:0px;top:1279.5px;width:32px;font-size:13.5px;line-height:13px;color:#555">56</div>
<div class="c" style="left:0px;top:1291.4px;width:32px;font-size:13.5px;line-height:13px;color:#555">57</div>
<div class="c" style="left:0px;top:1303.2px;width:32px;font-size:13.5px;line-height:13px;color:#555">58</div>
<div class="c" style="left:0px;top:1315.3px;width:32px;font-size:13.5px;line-height:13px;color:#555">59</div>
<div class="c" style="left:0px;top:1327.3px;width:32px;font-size:13.5px;line-height:13px;color:#555">60</div>
<div class="a" style="left:32px;top:211.5px;width:2454px;height:1130px;background:#fff"></div>
<svg style="left:0px;top:0px" width="2503" height="1368"><path d="M1176.5 211.5 V1256.5" stroke="#e1e1e1" stroke-width="1"/><path d="M1198.5 211.5 V1256.5" stroke="#e1e1e1" stroke-width="1"/><path d="M1270.5 211.5 V1256.5" stroke="#e1e1e1" stroke-width="1"/><path d="M1291.5 211.5 V1256.5" stroke="#e1e1e1" stroke-width="1"/><path d="M1362.5 211.5 V1256.5" stroke="#e1e1e1" stroke-width="1"/><path d="M1384.5 211.5 V1256.5" stroke="#e1e1e1" stroke-width="1"/><path d="M1455.5 211.5 V1256.5" stroke="#e1e1e1" stroke-width="1"/><path d="M1477.5 211.5 V1256.5" stroke="#e1e1e1" stroke-width="1"/><path d="M1548.5 211.5 V1256.5" stroke="#e1e1e1" stroke-width="1"/><path d="M1570.5 211.5 V1256.5" stroke="#e1e1e1" stroke-width="1"/><path d="M1641.5 211.5 V1256.5" stroke="#e1e1e1" stroke-width="1"/><path d="M1663.5 211.5 V1256.5" stroke="#e1e1e1" stroke-width="1"/><path d="M1734.5 211.5 V1256.5" stroke="#e1e1e1" stroke-width="1"/><path d="M1756.5 211.5 V1256.5" stroke="#e1e1e1" stroke-width="1"/><path d="M1827.5 211.5 V1256.5" stroke="#e1e1e1" stroke-width="1"/><path d="M1849.5 211.5 V1256.5" stroke="#e1e1e1" stroke-width="1"/><path d="M1920.5 211.5 V1256.5" stroke="#e1e1e1" stroke-width="1"/><path d="M1942.5 211.5 V1256.5" stroke="#e1e1e1" stroke-width="1"/><path d="M2013.5 211.5 V1256.5" stroke="#e1e1e1" stroke-width="1"/><path d="M2045.5 211.5 V1256.5" stroke="#e1e1e1" stroke-width="1"/><path d="M2077.5 211.5 V1256.5" stroke="#e1e1e1" stroke-width="1"/><path d="M2109.5 211.5 V1256.5" stroke="#e1e1e1" stroke-width="1"/><path d="M2141.5 211.5 V1256.5" stroke="#e1e1e1" stroke-width="1"/><path d="M2173.5 211.5 V1256.5" stroke="#e1e1e1" stroke-width="1"/><path d="M2205.5 211.5 V1256.5" stroke="#e1e1e1" stroke-width="1"/><path d="M2237.5 211.5 V1256.5" stroke="#e1e1e1" stroke-width="1"/><path d="M2269.5 211.5 V1256.5" stroke="#e1e1e1" stroke-width="1"/><path d="M2301.5 211.5 V1256.5" stroke="#e1e1e1" stroke-width="1"/><path d="M2333.5 211.5 V1256.5" stroke="#e1e1e1" stroke-width="1"/><path d="M2365.5 211.5 V1256.5" stroke="#e1e1e1" stroke-width="1"/><path d="M2397.5 211.5 V1256.5" stroke="#e1e1e1" stroke-width="1"/><path d="M2429.5 211.5 V1256.5" stroke="#e1e1e1" stroke-width="1"/><path d="M2461.5 211.5 V1256.5" stroke="#e1e1e1" stroke-width="1"/><path d="M1105.5 211.5 V1256.5" stroke="#e1e1e1" stroke-width="1"/><path d="M1084 229.5 H2486" stroke="#e1e1e1" stroke-width="1"/><path d="M1084 251.5 H2486" stroke="#e1e1e1" stroke-width="1"/><path d="M1084 295.5 H2486" stroke="#e1e1e1" stroke-width="1"/><path d="M1084 315.5 H2486" stroke="#e1e1e1" stroke-width="1"/><path d="M1084 359.5 H2486" stroke="#e1e1e1" stroke-width="1"/><path d="M1084 379.5 H2486" stroke="#e1e1e1" stroke-width="1"/><path d="M1084 423.5 H2486" stroke="#e1e1e1" stroke-width="1"/><path d="M1084 443.5 H2486" stroke="#e1e1e1" stroke-width="1"/><path d="M1084 487.5 H2486" stroke="#e1e1e1" stroke-width="1"/><path d="M1084 507.5 H2486" stroke="#e1e1e1" stroke-width="1"/><path d="M1084 551.5 H2486" stroke="#e1e1e1" stroke-width="1"/><path d="M1084 571.5 H2486" stroke="#e1e1e1" stroke-width="1"/><path d="M1084 615.5 H2486" stroke="#e1e1e1" stroke-width="1"/><path d="M1084 635.5 H2486" stroke="#e1e1e1" stroke-width="1"/><path d="M1084 679.5 H2486" stroke="#e1e1e1" stroke-width="1"/><path d="M1084 699.5 H2486" stroke="#e1e1e1" stroke-width="1"/><path d="M1084 743.5 H2486" stroke="#e1e1e1" stroke-width="1"/><path d="M1084 763.5 H2486" stroke="#e1e1e1" stroke-width="1"/><path d="M1084 807.5 H2486" stroke="#e1e1e1" stroke-width="1"/><path d="M1084 827.5 H2486" stroke="#e1e1e1" stroke-width="1"/><path d="M1084 871.5 H2486" stroke="#e1e1e1" stroke-width="1"/><path d="M1084 891.5 H2486" stroke="#e1e1e1" stroke-width="1"/><path d="M1084 935.5 H2486" stroke="#e1e1e1" stroke-width="1"/><path d="M1084 955.5 H2486" stroke="#e1e1e1" stroke-width="1"/><path d="M1084 999.5 H2486" stroke="#e1e1e1" stroke-width="1"/><path d="M1084 1019.5 H2486" stroke="#e1e1e1" stroke-width="1"/><path d="M1084 1063.5 H2486" stroke="#e1e1e1" stroke-width="1"/><path d="M1084 1083.5 H2486" stroke="#e1e1e1" stroke-width="1"/><path d="M1084 1127.5 H2486" stroke="#e1e1e1" stroke-width="1"/><path d="M1084 1147.5 H2486" stroke="#e1e1e1" stroke-width="1"/><path d="M1084 1191.5 H2486" stroke="#e1e1e1" stroke-width="1"/><path d="M1084 1211.5 H2486" stroke="#e1e1e1" stroke-width="1"/><path d="M1084 1237.5 H2486" stroke="#e1e1e1" stroke-width="1"/><path d="M2013 1256.5 H2486" stroke="#e1e1e1" stroke-width="1"/><path d="M2077.5 1256.5 V1341.5" stroke="#e1e1e1" stroke-width="1"/><path d="M2109.5 1256.5 V1341.5" stroke="#e1e1e1" stroke-width="1"/><path d="M2141.5 1256.5 V1341.5" stroke="#e1e1e1" stroke-width="1"/><path d="M2173.5 1256.5 V1341.5" stroke="#e1e1e1" stroke-width="1"/><path d="M2205.5 1256.5 V1341.5" stroke="#e1e1e1" stroke-width="1"/><path d="M2237.5 1256.5 V1341.5" stroke="#e1e1e1" stroke-width="1"/><path d="M2269.5 1256.5 V1341.5" stroke="#e1e1e1" stroke-width="1"/><path d="M2301.5 1256.5 V1341.5" stroke="#e1e1e1" stroke-width="1"/><path d="M2333.5 1256.5 V1341.5" stroke="#e1e1e1" stroke-width="1"/><path d="M2365.5 1256.5 V1341.5" stroke="#e1e1e1" stroke-width="1"/><path d="M2397.5 1256.5 V1341.5" stroke="#e1e1e1" stroke-width="1"/><path d="M2429.5 1256.5 V1341.5" stroke="#e1e1e1" stroke-width="1"/><path d="M2461.5 1256.5 V1341.5" stroke="#e1e1e1" stroke-width="1"/><path d="M2045.5 1290 V1341.5" stroke="#e1e1e1" stroke-width="1"/><path d="M2045 1278.5 H2486" stroke="#e1e1e1" stroke-width="1"/><path d="M2045 1290.5 H2486" stroke="#e1e1e1" stroke-width="1"/><path d="M2045 1302.5 H2486" stroke="#e1e1e1" stroke-width="1"/><path d="M2045 1314.5 H2486" stroke="#e1e1e1" stroke-width="1"/><path d="M2045 1326.5 H2486" stroke="#e1e1e1" stroke-width="1"/><path d="M2045 1338.5 H2486" stroke="#e1e1e1" stroke-width="1"/></svg>
<div class="a" style="left:1092px;top:217px;width:417px;height:272px;background:#fff"></div>
<div class="a" style="left:1084px;top:1256.5px;width:961px;height:85px;background:#fff"></div>
<div class="a" style="left:695.0px;top:211.5px;width:18.0px;height:1130.0px;background:#0070c0"></div>
<div class="a" style="left:1066.0px;top:211.5px;width:18.0px;height:1130.0px;background:#0070c0"></div>
<div class="a" style="left:695.0px;top:1128.0px;width:389.0px;height:20.0px;background:#0070c0"></div>
<div class="a" style="left:1084.0px;top:551.2px;width:301.0px;height:20.6px;background:#0070c0"></div>
<div class="a" style="left:1362.3px;top:551.2px;width:22.7px;height:276.8px;background:#0070c0"></div>
<div class="a" style="left:1084.0px;top:807.0px;width:301.0px;height:21.0px;background:#0070c0"></div>
<div class="a" style="left:2045.2px;top:1211.1px;width:440.8px;height:79.4px;background:#0070c0"></div>
<div class="a" style="left:2486px;top:211.5px;width:17px;height:1130px;background:#e3e5ea"></div>
<div class="a" style="left:2492px;top:218px;width:9px;height:1.5px;background:#999"></div>
<svg style="left:2492px;top:228px" width="10" height="7"><path d="M5 1 L9 6 H1Z" fill="#777"/></svg>
<div class="a" style="left:2489px;top:243px;width:10px;height:500px;background:#c9cbd1;border-radius:5px"></div>
<svg style="left:2492px;top:1325px" width="10" height="8"><path d="M5 7 L9 1 H1Z" fill="#777"/></svg>
<div class="a" style="left:0px;top:1341.5px;width:2503px;height:26.5px;background:#e3e5ea"></div>
<div class="a" style="left:1084px;top:571.8px;width:278.3px;height:235.2px;background:#fff"></div>
<div class="a" style="left:186px;top:218px;font-size:23.5px;font-weight:bold;color:#111;letter-spacing:0.1px">30以内乘除法混合运算题（共60题）</div>
<div class="a" style="left:147.3px;top:247.8px;width:458.7px;height:3.0px;background:#111"></div>
<div class="a" style="left:147.3px;top:251.6px;width:458.7px;height:1.0px;background:#555"></div>
<div class="c" style="left:75.7px;top:298.4px;width:23.3px;font-size:12.5px;line-height:14px;color:#c9d2bd;font-family:'Liberation Serif',serif;transform:scaleX(0.85)">1</div>
<div class="c" style="left:92.5px;top:299.4px;width:42.9px;font-size:15.5px;line-height:16px;font-weight:bold;color:#000;font-family:'Liberation Serif',serif;transform:scaleX(1.1)">19</div>
<div class="c" style="left:145.3px;top:299.4px;width:37.3px;font-size:15.5px;line-height:16px;font-weight:bold;color:#000;font-family:'Liberation Serif',serif;transform:scaleX(1.1)">13</div>
<div class="c" style="left:231.0px;top:298.4px;width:23.1px;font-size:12.5px;line-height:14px;color:#c9d2bd;font-family:'Liberation Serif',serif;transform:scaleX(0.85)">2</div>
<div class="c" style="left:247.6px;top:299.4px;width:43.2px;font-size:15.5px;line-height:16px;font-weight:bold;color:#000;font-family:'Liberation Serif',serif;transform:scaleX(1.1)">9</div>
<div class="c" style="left:300.3px;top:299.4px;width:37.2px;font-size:15.5px;line-height:16px;font-weight:bold;color:#000;font-family:'Liberation Serif',serif;transform:scaleX(1.1)">18</div>
<div class="c" style="left:385.8px;top:298.4px;width:23.0px;font-size:12.5px;line-height:14px;color:#c9d2bd;font-family:'Liberation Serif',serif;transform:scaleX(0.85)">3</div>
<div class="c" style="left:402.3px;top:299.4px;width:42.9px;font-size:15.5px;line-height:16px;font-weight:bold;color:#000;font-family:'Liberation Serif',serif;transform:scaleX(1.1)">15</div>
<div class="c" style="left:455.5px;top:299.4px;width:36.9px;font-size:15.5px;line-height:16px;font-weight:bold;color:#000;font-family:'Liberation Serif',serif;transform:scaleX(1.1)">5</div>
<div class="c" style="left:540.7px;top:298.4px;width:23.2px;font-size:12.5px;line-height:14px;color:#c9d2bd;font-family:'Liberation Serif',serif;transform:scaleX(0.85)">4</div>
<div class="c" style="left:557.4px;top:299.4px;width:42.9px;font-size:15.5px;line-height:16px;font-weight:bold;color:#000;font-family:'Liberation Serif',serif;transform:scaleX(1.1)">23</div>
<div class="c" style="left:610.1px;top:299.4px;width:37.2px;font-size:15.5px;line-height:16px;font-weight:bold;color:#000;font-family:'Liberation Serif',serif;transform:scaleX(1.1)">28</div>
<div class="c" style="left:75.7px;top:362.4px;width:23.3px;font-size:12.5px;line-height:14px;color:#c9d2bd;font-family:'Liberation Serif',serif;transform:scaleX(0.85)">5</div>
<div class="c" style="left:92.5px;top:363.4px;width:42.9px;font-size:15.5px;line-height:16px;font-weight:bold;color:#000;font-family:'Liberation Serif',serif;transform:scaleX(1.1)">12</div>
<div class="c" style="left:145.3px;top:363.4px;width:37.3px;font-size:15.5px;line-height:16px;font-weight:bold;color:#000;font-family:'Liberation Serif',serif;transform:scaleX(1.1)">28</div>
<div class="c" style="left:231.0px;top:362.4px;width:23.1px;font-size:12.5px;line-height:14px;color:#c9d2bd;font-family:'Liberation Serif',serif;transform:scaleX(0.85)">6</div>
<div class="c" style="left:247.6px;top:363.4px;width:43.2px;font-size:15.5px;line-height:16px;font-weight:bold;color:#000;font-family:'Liberation Serif',serif;transform:scaleX(1.1)">5</div>
<div class="c" style="left:300.3px;top:363.4px;width:37.2px;font-size:15.5px;line-height:16px;font-weight:bold;color:#000;font-family:'Liberation Serif',serif;transform:scaleX(1.1)">5</div>
<div class="c" style="left:385.8px;top:362.4px;width:23.0px;font-size:12.5px;line-height:14px;color:#c9d2bd;font-family:'Liberation Serif',serif;transform:scaleX(0.85)">7</div>
<div class="c" style="left:402.3px;top:363.4px;width:42.9px;font-size:15.5px;line-height:16px;font-weight:bold;color:#000;font-family:'Liberation Serif',serif;transform:scaleX(1.1)">6</div>
<div class="c" style="left:455.5px;top:363.4px;width:36.9px;font-size:15.5px;line-height:16px;font-weight:bold;color:#000;font-family:'Liberation Serif',serif;transform:scaleX(1.1)">25</div>
<div class="c" style="left:540.7px;top:362.4px;width:23.2px;font-size:12.5px;line-height:14px;color:#c9d2bd;font-family:'Liberation Serif',serif;transform:scaleX(0.85)">8</div>
<div class="c" style="left:557.4px;top:363.4px;width:42.9px;font-size:15.5px;line-height:16px;font-weight:bold;color:#000;font-family:'Liberation Serif',serif;transform:scaleX(1.1)">48</div>
<div class="c" style="left:610.1px;top:363.4px;width:37.2px;font-size:15.5px;line-height:16px;font-weight:bold;color:#000;font-family:'Liberation Serif',serif;transform:scaleX(1.1)">6</div>
<div class="c" style="left:75.7px;top:426.4px;width:23.3px;font-size:12.5px;line-height:14px;color:#c9d2bd;font-family:'Liberation Serif',serif;transform:scaleX(0.85)">9</div>
<div class="c" style="left:92.5px;top:427.4px;width:42.9px;font-size:15.5px;line-height:16px;font-weight:bold;color:#000;font-family:'Liberation Serif',serif;transform:scaleX(1.1)">232</div>
<div class="c" style="left:145.3px;top:427.4px;width:37.3px;font-size:15.5px;line-height:16px;font-weight:bold;color:#000;font-family:'Liberation Serif',serif;transform:scaleX(1.1)">8</div>
<div class="c" style="left:231.0px;top:426.4px;width:23.1px;font-size:12.5px;line-height:14px;color:#c9d2bd;font-family:'Liberation Serif',serif;transform:scaleX(0.85)">10</div>
<div class="c" style="left:247.6px;top:427.4px;width:43.2px;font-size:15.5px;line-height:16px;font-weight:bold;color:#000;font-family:'Liberation Serif',serif;transform:scaleX(1.1)">126</div>
<div class="c" style="left:300.3px;top:427.4px;width:37.2px;font-size:15.5px;line-height:16px;font-weight:bold;color:#000;font-family:'Liberation Serif',serif;transform:scaleX(1.1)">6</div>
<div class="c" style="left:385.8px;top:426.4px;width:23.0px;font-size:12.5px;line-height:14px;color:#c9d2bd;font-family:'Liberation Serif',serif;transform:scaleX(0.85)">11</div>
<div class="c" style="left:402.3px;top:427.4px;width:42.9px;font-size:15.5px;line-height:16px;font-weight:bold;color:#000;font-family:'Liberation Serif',serif;transform:scaleX(1.1)">70</div>
<div class="c" style="left:455.5px;top:427.4px;width:36.9px;font-size:15.5px;line-height:16px;font-weight:bold;color:#000;font-family:'Liberation Serif',serif;transform:scaleX(1.1)">7</div>
<div class="c" style="left:540.7px;top:426.4px;width:23.2px;font-size:12.5px;line-height:14px;color:#c9d2bd;font-family:'Liberation Serif',serif;transform:scaleX(0.85)">12</div>
<div class="c" style="left:557.4px;top:427.4px;width:42.9px;font-size:15.5px;line-height:16px;font-weight:bold;color:#000;font-family:'Liberation Serif',serif;transform:scaleX(1.1)">72</div>
<div class="c" style="left:610.1px;top:427.4px;width:37.2px;font-size:15.5px;line-height:16px;font-weight:bold;color:#000;font-family:'Liberation Serif',serif;transform:scaleX(1.1)">4</div>
<div class="c" style="left:75.7px;top:490.4px;width:23.3px;font-size:12.5px;line-height:14px;color:#c9d2bd;font-family:'Liberation Serif',serif;transform:scaleX(0.85)">13</div>
<div class="c" style="left:92.5px;top:491.4px;width:42.9px;font-size:15.5px;line-height:16px;font-weight:bold;color:#000;font-family:'Liberation Serif',serif;transform:scaleX(1.1)">114</div>
<div class="c" style="left:145.3px;top:491.4px;width:37.3px;font-size:15.5px;line-height:16px;font-weight:bold;color:#000;font-family:'Liberation Serif',serif;transform:scaleX(1.1)">6</div>
<div class="c" style="left:231.0px;top:490.4px;width:23.1px;font-size:12.5px;line-height:14px;color:#c9d2bd;font-family:'Liberation Serif',serif;transform:scaleX(0.85)">14</div>
<div class="c" style="left:247.6px;top:491.4px;width:43.2px;font-size:15.5px;line-height:16px;font-weight:bold;color:#000;font-family:'Liberation Serif',serif;transform:scaleX(1.1)">19</div>
<div class="c" style="left:300.3px;top:491.4px;width:37.2px;font-size:15.5px;line-height:16px;font-weight:bold;color:#000;font-family:'Liberation Serif',serif;transform:scaleX(1.1)">5</div>
<div class="c" style="left:385.8px;top:490.4px;width:23.0px;font-size:12.5px;line-height:14px;color:#c9d2bd;font-family:'Liberation Serif',serif;transform:scaleX(0.85)">15</div>
<div class="c" style="left:402.3px;top:491.4px;width:42.9px;font-size:15.5px;line-height:16px;font-weight:bold;color:#000;font-family:'Liberation Serif',serif;transform:scaleX(1.1)">3</div>
<div class="c" style="left:455.5px;top:491.4px;width:36.9px;font-size:15.5px;line-height:16px;font-weight:bold;color:#000;font-family:'Liberation Serif',serif;transform:scaleX(1.1)">28</div>
<div class="c" style="left:540.7px;top:490.4px;width:23.2px;font-size:12.5px;line-height:14px;color:#c9d2bd;font-family:'Liberation Serif',serif;transform:scaleX(0.85)">16</div>
<div class="c" style="left:557.4px;top:491.4px;width:42.9px;font-size:15.5px;line-height:16px;font-weight:bold;color:#000;font-family:'Liberation Serif',serif;transform:scaleX(1.1)">128</div>
<div class="c" style="left:610.1px;top:491.4px;width:37.2px;font-size:15.5px;line-height:16px;font-weight:bold;color:#000;font-family:'Liberation Serif',serif;transform:scaleX(1.1)">8</div>
<div class="c" style="left:75.7px;top:554.4px;width:23.3px;font-size:12.5px;line-height:14px;color:#c9d2bd;font-family:'Liberation Serif',serif;transform:scaleX(0.85)">17</div>
<div class="c" style="left:92.5px;top:555.4px;width:42.9px;font-size:15.5px;line-height:16px;font-weight:bold;color:#000;font-family:'Liberation Serif',serif;transform:scaleX(1.1)">7</div>
<div class="c" style="left:145.3px;top:555.4px;width:37.3px;font-size:15.5px;line-height:16px;font-weight:bold;color:#000;font-family:'Liberation Serif',serif;transform:scaleX(1.1)">13</div>
<div class="c" style="left:231.0px;top:554.4px;width:23.1px;font-size:12.5px;line-height:14px;color:#c9d2bd;font-family:'Liberation Serif',serif;transform:scaleX(0.85)">18</div>
<div class="c" style="left:247.6px;top:555.4px;width:43.2px;font-size:15.5px;line-height:16px;font-weight:bold;color:#000;font-family:'Liberation Serif',serif;transform:scaleX(1.1)">88</div>
<div class="c" style="left:300.3px;top:555.4px;width:37.2px;font-size:15.5px;line-height:16px;font-weight:bold;color:#000;font-family:'Liberation Serif',serif;transform:scaleX(1.1)">8</div>
<div class="c" style="left:385.8px;top:554.4px;width:23.0px;font-size:12.5px;line-height:14px;color:#c9d2bd;font-family:'Liberation Serif',serif;transform:scaleX(0.85)">19</div>
<div class="c" style="left:402.3px;top:555.4px;width:42.9px;font-size:15.5px;line-height:16px;font-weight:bold;color:#000;font-family:'Liberation Serif',serif;transform:scaleX(1.1)">7</div>
<div class="c" style="left:455.5px;top:555.4px;width:36.9px;font-size:15.5px;line-height:16px;font-weight:bold;color:#000;font-family:'Liberation Serif',serif;transform:scaleX(1.1)">16</div>
<div class="c" style="left:540.7px;top:554.4px;width:23.2px;font-size:12.5px;line-height:14px;color:#c9d2bd;font-family:'Liberation Serif',serif;transform:scaleX(0.85)">20</div>
<div class="c" style="left:557.4px;top:555.4px;width:42.9px;font-size:15.5px;line-height:16px;font-weight:bold;color:#000;font-family:'Liberation Serif',serif;transform:scaleX(1.1)">29</div>
<div class="c" style="left:610.1px;top:555.4px;width:37.2px;font-size:15.5px;line-height:16px;font-weight:bold;color:#000;font-family:'Liberation Serif',serif;transform:scaleX(1.1)">23</div>
<div class="c" style="left:75.7px;top:618.4px;width:23.3px;font-size:12.5px;line-height:14px;color:#c9d2bd;font-family:'Liberation Serif',serif;transform:scaleX(0.85)">21</div>
<div class="c" style="left:92.5px;top:619.4px;width:42.9px;font-size:15.5px;line-height:16px;font-weight:bold;color:#000;font-family:'Liberation Serif',serif;transform:scaleX(1.1)">16</div>
<div class="c" style="left:145.3px;top:619.4px;width:37.3px;font-size:15.5px;line-height:16px;font-weight:bold;color:#000;font-family:'Liberation Serif',serif;transform:scaleX(1.1)">2</div>
<div class="c" style="left:231.0px;top:618.4px;width:23.1px;font-size:12.5px;line-height:14px;color:#c9d2bd;font-family:'Liberation Serif',serif;transform:scaleX(0.85)">22</div>
<div class="c" style="left:247.6px;top:619.4px;width:43.2px;font-size:15.5px;line-height:16px;font-weight:bold;color:#000;font-family:'Liberation Serif',serif;transform:scaleX(1.1)">20</div>
<div class="c" style="left:300.3px;top:619.4px;width:37.2px;font-size:15.5px;line-height:16px;font-weight:bold;color:#000;font-family:'Liberation Serif',serif;transform:scaleX(1.1)">4</div>
<div class="c" style="left:385.8px;top:618.4px;width:23.0px;font-size:12.5px;line-height:14px;color:#c9d2bd;font-family:'Liberation Serif',serif;transform:scaleX(0.85)">23</div>
<div class="c" style="left:402.3px;top:619.4px;width:42.9px;font-size:15.5px;line-height:16px;font-weight:bold;color:#000;font-family:'Liberation Serif',serif;transform:scaleX(1.1)">17</div>
<div class="c" style="left:455.5px;top:619.4px;width:36.9px;font-size:15.5px;line-height:16px;font-weight:bold;color:#000;font-family:'Liberation Serif',serif;transform:scaleX(1.1)">16</div>
<div class="c" style="left:540.7px;top:618.4px;width:23.2px;font-size:12.5px;line-height:14px;color:#c9d2bd;font-family:'Liberation Serif',serif;transform:scaleX(0.85)">24</div>
<div class="c" style="left:557.4px;top:619.4px;width:42.9px;font-size:15.5px;line-height:16px;font-weight:bold;color:#000;font-family:'Liberation Serif',serif;transform:scaleX(1.1)">80</div>
<div class="c" style="left:610.1px;top:619.4px;width:37.2px;font-size:15.5px;line-height:16px;font-weight:bold;color:#000;font-family:'Liberation Serif',serif;transform:scaleX(1.1)">5</div>
<div class="c" style="left:75.7px;top:682.4px;width:23.3px;font-size:12.5px;line-height:14px;color:#c9d2bd;font-family:'Liberation Serif',serif;transform:scaleX(0.85)">25</div>
<div class="c" style="left:92.5px;top:683.4px;width:42.9px;font-size:15.5px;line-height:16px;font-weight:bold;color:#000;font-family:'Liberation Serif',serif;transform:scaleX(1.1)">144</div>
<div class="c" style="left:145.3px;top:683.4px;width:37.3px;font-size:15.5px;line-height:16px;font-weight:bold;color:#000;font-family:'Liberation Serif',serif;transform:scaleX(1.1)">8</div>
<div class="c" style="left:231.0px;top:682.4px;width:23.1px;font-size:12.5px;line-height:14px;color:#c9d2bd;font-family:'Liberation Serif',serif;transform:scaleX(0.85)">26</div>
<div class="c" style="left:247.6px;top:683.4px;width:43.2px;font-size:15.5px;line-height:16px;font-weight:bold;color:#000;font-family:'Liberation Serif',serif;transform:scaleX(1.1)">81</div>
<div class="c" style="left:300.3px;top:683.4px;width:37.2px;font-size:15.5px;line-height:16px;font-weight:bold;color:#000;font-family:'Liberation Serif',serif;transform:scaleX(1.1)">9</div>
<div class="c" style="left:385.8px;top:682.4px;width:23.0px;font-size:12.5px;line-height:14px;color:#c9d2bd;font-family:'Liberation Serif',serif;transform:scaleX(0.85)">27</div>
<div class="c" style="left:402.3px;top:683.4px;width:42.9px;font-size:15.5px;line-height:16px;font-weight:bold;color:#000;font-family:'Liberation Serif',serif;transform:scaleX(1.1)">290</div>
<div class="c" style="left:455.5px;top:683.4px;width:36.9px;font-size:15.5px;line-height:16px;font-weight:bold;color:#000;font-family:'Liberation Serif',serif;transform:scaleX(1.1)">10</div>
<div class="c" style="left:540.7px;top:682.4px;width:23.2px;font-size:12.5px;line-height:14px;color:#c9d2bd;font-family:'Liberation Serif',serif;transform:scaleX(0.85)">28</div>
<div class="c" style="left:557.4px;top:683.4px;width:42.9px;font-size:15.5px;line-height:16px;font-weight:bold;color:#000;font-family:'Liberation Serif',serif;transform:scaleX(1.1)">161</div>
<div class="c" style="left:610.1px;top:683.4px;width:37.2px;font-size:15.5px;line-height:16px;font-weight:bold;color:#000;font-family:'Liberation Serif',serif;transform:scaleX(1.1)">7</div>
<div class="c" style="left:75.7px;top:746.4px;width:23.3px;font-size:12.5px;line-height:14px;color:#c9d2bd;font-family:'Liberation Serif',serif;transform:scaleX(0.85)">29</div>
<div class="c" style="left:92.5px;top:747.4px;width:42.9px;font-size:15.5px;line-height:16px;font-weight:bold;color:#000;font-family:'Liberation Serif',serif;transform:scaleX(1.1)">29</div>
<div class="c" style="left:145.3px;top:747.4px;width:37.3px;font-size:15.5px;line-height:16px;font-weight:bold;color:#000;font-family:'Liberation Serif',serif;transform:scaleX(1.1)">14</div>
<div class="c" style="left:231.0px;top:746.4px;width:23.1px;font-size:12.5px;line-height:14px;color:#c9d2bd;font-family:'Liberation Serif',serif;transform:scaleX(0.85)">30</div>
<div class="c" style="left:247.6px;top:747.4px;width:43.2px;font-size:15.5px;line-height:16px;font-weight:bold;color:#000;font-family:'Liberation Serif',serif;transform:scaleX(1.1)">29</div>
<div class="c" style="left:300.3px;top:747.4px;width:37.2px;font-size:15.5px;line-height:16px;font-weight:bold;color:#000;font-family:'Liberation Serif',serif;transform:scaleX(1.1)">10</div>
<div class="c" style="left:385.8px;top:746.4px;width:23.0px;font-size:12.5px;line-height:14px;color:#c9d2bd;font-family:'Liberation Serif',serif;transform:scaleX(0.85)">31</div>
<div class="c" style="left:402.3px;top:747.4px;width:42.9px;font-size:15.5px;line-height:16px;font-weight:bold;color:#000;font-family:'Liberation Serif',serif;transform:scaleX(1.1)">22</div>
<div class="c" style="left:455.5px;top:747.4px;width:36.9px;font-size:15.5px;line-height:16px;font-weight:bold;color:#000;font-family:'Liberation Serif',serif;transform:scaleX(1.1)">4</div>
<div class="c" style="left:540.7px;top:746.4px;width:23.2px;font-size:12.5px;line-height:14px;color:#c9d2bd;font-family:'Liberation Serif',serif;transform:scaleX(0.85)">32</div>
<div class="c" style="left:557.4px;top:747.4px;width:42.9px;font-size:15.5px;line-height:16px;font-weight:bold;color:#000;font-family:'Liberation Serif',serif;transform:scaleX(1.1)">7</div>
<div class="c" style="left:610.1px;top:747.4px;width:37.2px;font-size:15.5px;line-height:16px;font-weight:bold;color:#000;font-family:'Liberation Serif',serif;transform:scaleX(1.1)">7</div>
<div class="c" style="left:75.7px;top:810.4px;width:23.3px;font-size:12.5px;line-height:14px;color:#c9d2bd;font-family:'Liberation Serif',serif;transform:scaleX(0.85)">33</div>
<div class="c" style="left:92.5px;top:811.4px;width:42.9px;font-size:15.5px;line-height:16px;font-weight:bold;color:#000;font-family:'Liberation Serif',serif;transform:scaleX(1.1)">17</div>
<div class="c" style="left:145.3px;top:811.4px;width:37.3px;font-size:15.5px;line-height:16px;font-weight:bold;color:#000;font-family:'Liberation Serif',serif;transform:scaleX(1.1)">3</div>
<div class="c" style="left:231.0px;top:810.4px;width:23.1px;font-size:12.5px;line-height:14px;color:#c9d2bd;font-family:'Liberation Serif',serif;transform:scaleX(0.85)">34</div>
<div class="c" style="left:247.6px;top:811.4px;width:43.2px;font-size:15.5px;line-height:16px;font-weight:bold;color:#000;font-family:'Liberation Serif',serif;transform:scaleX(1.1)">19</div>
<div class="c" style="left:300.3px;top:811.4px;width:37.2px;font-size:15.5px;line-height:16px;font-weight:bold;color:#000;font-family:'Liberation Serif',serif;transform:scaleX(1.1)">4</div>
<div class="c" style="left:385.8px;top:810.4px;width:23.0px;font-size:12.5px;line-height:14px;color:#c9d2bd;font-family:'Liberation Serif',serif;transform:scaleX(0.85)">35</div>
<div class="c" style="left:402.3px;top:811.4px;width:42.9px;font-size:15.5px;line-height:16px;font-weight:bold;color:#000;font-family:'Liberation Serif',serif;transform:scaleX(1.1)">84</div>
<div class="c" style="left:455.5px;top:811.4px;width:36.9px;font-size:15.5px;line-height:16px;font-weight:bold;color:#000;font-family:'Liberation Serif',serif;transform:scaleX(1.1)">7</div>
<div class="c" style="left:540.7px;top:810.4px;width:23.2px;font-size:12.5px;line-height:14px;color:#c9d2bd;font-family:'Liberation Serif',serif;transform:scaleX(0.85)">36</div>
<div class="c" style="left:557.4px;top:811.4px;width:42.9px;font-size:15.5px;line-height:16px;font-weight:bold;color:#000;font-family:'Liberation Serif',serif;transform:scaleX(1.1)">28</div>
<div class="c" style="left:610.1px;top:811.4px;width:37.2px;font-size:15.5px;line-height:16px;font-weight:bold;color:#000;font-family:'Liberation Serif',serif;transform:scaleX(1.1)">17</div>
<div class="c" style="left:75.7px;top:874.4px;width:23.3px;font-size:12.5px;line-height:14px;color:#c9d2bd;font-family:'Liberation Serif',serif;transform:scaleX(0.85)">37</div>
<div class="c" style="left:92.5px;top:875.4px;width:42.9px;font-size:15.5px;line-height:16px;font-weight:bold;color:#000;font-family:'Liberation Serif',serif;transform:scaleX(1.1)">27</div>
<div class="c" style="left:145.3px;top:875.4px;width:37.3px;font-size:15.5px;line-height:16px;font-weight:bold;color:#000;font-family:'Liberation Serif',serif;transform:scaleX(1.1)">11</div>
<div class="c" style="left:231.0px;top:874.4px;width:23.1px;font-size:12.5px;line-height:14px;color:#c9d2bd;font-family:'Liberation Serif',serif;transform:scaleX(0.85)">38</div>
<div class="c" style="left:247.6px;top:875.4px;width:43.2px;font-size:15.5px;line-height:16px;font-weight:bold;color:#000;font-family:'Liberation Serif',serif;transform:scaleX(1.1)">198</div>
<div class="c" style="left:300.3px;top:875.4px;width:37.2px;font-size:15.5px;line-height:16px;font-weight:bold;color:#000;font-family:'Liberation Serif',serif;transform:scaleX(1.1)">18</div>
<div class="c" style="left:385.8px;top:874.4px;width:23.0px;font-size:12.5px;line-height:14px;color:#c9d2bd;font-family:'Liberation Serif',serif;transform:scaleX(0.85)">39</div>
<div class="c" style="left:402.3px;top:875.4px;width:42.9px;font-size:15.5px;line-height:16px;font-weight:bold;color:#000;font-family:'Liberation Serif',serif;transform:scaleX(1.1)">20</div>
<div class="c" style="left:455.5px;top:875.4px;width:36.9px;font-size:15.5px;line-height:16px;font-weight:bold;color:#000;font-family:'Liberation Serif',serif;transform:scaleX(1.1)">27</div>
<div class="c" style="left:540.7px;top:874.4px;width:23.2px;font-size:12.5px;line-height:14px;color:#c9d2bd;font-family:'Liberation Serif',serif;transform:scaleX(0.85)">40</div>
<div class="c" style="left:557.4px;top:875.4px;width:42.9px;font-size:15.5px;line-height:16px;font-weight:bold;color:#000;font-family:'Liberation Serif',serif;transform:scaleX(1.1)">5</div>
<div class="c" style="left:610.1px;top:875.4px;width:37.2px;font-size:15.5px;line-height:16px;font-weight:bold;color:#000;font-family:'Liberation Serif',serif;transform:scaleX(1.1)">14</div>
<div class="c" style="left:75.7px;top:938.4px;width:23.3px;font-size:12.5px;line-height:14px;color:#c9d2bd;font-family:'Liberation Serif',serif;transform:scaleX(0.85)">41</div>
<div class="c" style="left:92.5px;top:939.4px;width:42.9px;font-size:15.5px;line-height:16px;font-weight:bold;color:#000;font-family:'Liberation Serif',serif;transform:scaleX(1.1)">189</div>
<div class="c" style="left:145.3px;top:939.4px;width:37.3px;font-size:15.5px;line-height:16px;font-weight:bold;color:#000;font-family:'Liberation Serif',serif;transform:scaleX(1.1)">7</div>
<div class="c" style="left:231.0px;top:938.4px;width:23.1px;font-size:12.5px;line-height:14px;color:#c9d2bd;font-family:'Liberation Serif',serif;transform:scaleX(0.85)">42</div>
<div class="c" style="left:247.6px;top:939.4px;width:43.2px;font-size:15.5px;line-height:16px;font-weight:bold;color:#000;font-family:'Liberation Serif',serif;transform:scaleX(1.1)">16</div>
<div class="c" style="left:300.3px;top:939.4px;width:37.2px;font-size:15.5px;line-height:16px;font-weight:bold;color:#000;font-family:'Liberation Serif',serif;transform:scaleX(1.1)">23</div>
<div class="c" style="left:385.8px;top:938.4px;width:23.0px;font-size:12.5px;line-height:14px;color:#c9d2bd;font-family:'Liberation Serif',serif;transform:scaleX(0.85)">43</div>
<div class="c" style="left:402.3px;top:939.4px;width:42.9px;font-size:15.5px;line-height:16px;font-weight:bold;color:#000;font-family:'Liberation Serif',serif;transform:scaleX(1.1)">19</div>
<div class="c" style="left:455.5px;top:939.4px;width:36.9px;font-size:15.5px;line-height:16px;font-weight:bold;color:#000;font-family:'Liberation Serif',serif;transform:scaleX(1.1)">13</div>
<div class="c" style="left:540.7px;top:938.4px;width:23.2px;font-size:12.5px;line-height:14px;color:#c9d2bd;font-family:'Liberation Serif',serif;transform:scaleX(0.85)">44</div>
<div class="c" style="left:557.4px;top:939.4px;width:42.9px;font-size:15.5px;line-height:16px;font-weight:bold;color:#000;font-family:'Liberation Serif',serif;transform:scaleX(1.1)">20</div>
<div class="c" style="left:610.1px;top:939.4px;width:37.2px;font-size:15.5px;line-height:16px;font-weight:bold;color:#000;font-family:'Liberation Serif',serif;transform:scaleX(1.1)">13</div>
<div class="c" style="left:75.7px;top:1002.4px;width:23.3px;font-size:12.5px;line-height:14px;color:#c9d2bd;font-family:'Liberation Serif',serif;transform:scaleX(0.85)">45</div>
<div class="c" style="left:92.5px;top:1003.4px;width:42.9px;font-size:15.5px;line-height:16px;font-weight:bold;color:#000;font-family:'Liberation Serif',serif;transform:scaleX(1.1)">17</div>
<div class="c" style="left:145.3px;top:1003.4px;width:37.3px;font-size:15.5px;line-height:16px;font-weight:bold;color:#000;font-family:'Liberation Serif',serif;transform:scaleX(1.1)">18</div>
<div class="c" style="left:231.0px;top:1002.4px;width:23.1px;font-size:12.5px;line-height:14px;color:#c9d2bd;font-family:'Liberation Serif',serif;transform:scaleX(0.85)">46</div>
<div class="c" style="left:247.6px;top:1003.4px;width:43.2px;font-size:15.5px;line-height:16px;font-weight:bold;color:#000;font-family:'Liberation Serif',serif;transform:scaleX(1.1)">26</div>
<div class="c" style="left:300.3px;top:1003.4px;width:37.2px;font-size:15.5px;line-height:16px;font-weight:bold;color:#000;font-family:'Liberation Serif',serif;transform:scaleX(1.1)">18</div>
<div class="c" style="left:385.8px;top:1002.4px;width:23.0px;font-size:12.5px;line-height:14px;color:#c9d2bd;font-family:'Liberation Serif',serif;transform:scaleX(0.85)">47</div>
<div class="c" style="left:402.3px;top:1003.4px;width:42.9px;font-size:15.5px;line-height:16px;font-weight:bold;color:#000;font-family:'Liberation Serif',serif;transform:scaleX(1.1)">4</div>
<div class="c" style="left:455.5px;top:1003.4px;width:36.9px;font-size:15.5px;line-height:16px;font-weight:bold;color:#000;font-family:'Liberation Serif',serif;transform:scaleX(1.1)">18</div>
<div class="c" style="left:540.7px;top:1002.4px;width:23.2px;font-size:12.5px;line-height:14px;color:#c9d2bd;font-family:'Liberation Serif',serif;transform:scaleX(0.85)">48</div>
<div class="c" style="left:557.4px;top:1003.4px;width:42.9px;font-size:15.5px;line-height:16px;font-weight:bold;color:#000;font-family:'Liberation Serif',serif;transform:scaleX(1.1)">8</div>
<div class="c" style="left:610.1px;top:1003.4px;width:37.2px;font-size:15.5px;line-height:16px;font-weight:bold;color:#000;font-family:'Liberation Serif',serif;transform:scaleX(1.1)">17</div>
<div class="c" style="left:75.7px;top:1066.4px;width:23.3px;font-size:12.5px;line-height:14px;color:#c9d2bd;font-family:'Liberation Serif',serif;transform:scaleX(0.85)">49</div>
<div class="c" style="left:92.5px;top:1067.4px;width:42.9px;font-size:15.5px;line-height:16px;font-weight:bold;color:#000;font-family:'Liberation Serif',serif;transform:scaleX(1.1)">330</div>
<div class="c" style="left:145.3px;top:1067.4px;width:37.3px;font-size:15.5px;line-height:16px;font-weight:bold;color:#000;font-family:'Liberation Serif',serif;transform:scaleX(1.1)">11</div>
<div class="c" style="left:231.0px;top:1066.4px;width:23.1px;font-size:12.5px;line-height:14px;color:#c9d2bd;font-family:'Liberation Serif',serif;transform:scaleX(0.85)">50</div>
<div class="c" style="left:247.6px;top:1067.4px;width:43.2px;font-size:15.5px;line-height:16px;font-weight:bold;color:#000;font-family:'Liberation Serif',serif;transform:scaleX(1.1)">16</div>
<div class="c" style="left:300.3px;top:1067.4px;width:37.2px;font-size:15.5px;line-height:16px;font-weight:bold;color:#000;font-family:'Liberation Serif',serif;transform:scaleX(1.1)">19</div>
<div class="c" style="left:385.8px;top:1066.4px;width:23.0px;font-size:12.5px;line-height:14px;color:#c9d2bd;font-family:'Liberation Serif',serif;transform:scaleX(0.85)">51</div>
<div class="c" style="left:402.3px;top:1067.4px;width:42.9px;font-size:15.5px;line-height:16px;font-weight:bold;color:#000;font-family:'Liberation Serif',serif;transform:scaleX(1.1)">77</div>
<div class="c" style="left:455.5px;top:1067.4px;width:36.9px;font-size:15.5px;line-height:16px;font-weight:bold;color:#000;font-family:'Liberation Serif',serif;transform:scaleX(1.1)">11</div>
<div class="c" style="left:540.7px;top:1066.4px;width:23.2px;font-size:12.5px;line-height:14px;color:#c9d2bd;font-family:'Liberation Serif',serif;transform:scaleX(0.85)">52</div>
<div class="c" style="left:557.4px;top:1067.4px;width:42.9px;font-size:15.5px;line-height:16px;font-weight:bold;color:#000;font-family:'Liberation Serif',serif;transform:scaleX(1.1)">27</div>
<div class="c" style="left:610.1px;top:1067.4px;width:37.2px;font-size:15.5px;line-height:16px;font-weight:bold;color:#000;font-family:'Liberation Serif',serif;transform:scaleX(1.1)">20</div>
<div class="c" style="left:75.7px;top:1130.4px;width:23.3px;font-size:12.5px;line-height:14px;color:#c9d2bd;font-family:'Liberation Serif',serif;transform:scaleX(0.85)">53</div>
<div class="c" style="left:92.5px;top:1131.4px;width:42.9px;font-size:15.5px;line-height:16px;font-weight:bold;color:#000;font-family:'Liberation Serif',serif;transform:scaleX(1.1)">22</div>
<div class="c" style="left:145.3px;top:1131.4px;width:37.3px;font-size:15.5px;line-height:16px;font-weight:bold;color:#000;font-family:'Liberation Serif',serif;transform:scaleX(1.1)">19</div>
<div class="c" style="left:231.0px;top:1130.4px;width:23.1px;font-size:12.5px;line-height:14px;color:#c9d2bd;font-family:'Liberation Serif',serif;transform:scaleX(0.85)">54</div>
<div class="c" style="left:247.6px;top:1131.4px;width:43.2px;font-size:15.5px;line-height:16px;font-weight:bold;color:#000;font-family:'Liberation Serif',serif;transform:scaleX(1.1)">85</div>
<div class="c" style="left:300.3px;top:1131.4px;width:37.2px;font-size:15.5px;line-height:16px;font-weight:bold;color:#000;font-family:'Liberation Serif',serif;transform:scaleX(1.1)">5</div>
<div class="c" style="left:385.8px;top:1130.4px;width:23.0px;font-size:12.5px;line-height:14px;color:#c9d2bd;font-family:'Liberation Serif',serif;transform:scaleX(0.85)">55</div>
<div class="c" style="left:402.3px;top:1131.4px;width:42.9px;font-size:15.5px;line-height:16px;font-weight:bold;color:#000;font-family:'Liberation Serif',serif;transform:scaleX(1.1)">6</div>
<div class="c" style="left:455.5px;top:1131.4px;width:36.9px;font-size:15.5px;line-height:16px;font-weight:bold;color:#000;font-family:'Liberation Serif',serif;transform:scaleX(1.1)">27</div>
<div class="c" style="left:540.7px;top:1130.4px;width:23.2px;font-size:12.5px;line-height:14px;color:#c9d2bd;font-family:'Liberation Serif',serif;transform:scaleX(0.85)">56</div>
<div class="c" style="left:557.4px;top:1131.4px;width:42.9px;font-size:15.5px;line-height:16px;font-weight:bold;color:#000;font-family:'Liberation Serif',serif;transform:scaleX(1.1)">52</div>
<div class="c" style="left:610.1px;top:1131.4px;width:37.2px;font-size:15.5px;line-height:16px;font-weight:bold;color:#000;font-family:'Liberation Serif',serif;transform:scaleX(1.1)">26</div>
<div class="c" style="left:75.7px;top:1194.4px;width:23.3px;font-size:12.5px;line-height:14px;color:#c9d2bd;font-family:'Liberation Serif',serif;transform:scaleX(0.85)">57</div>
<div class="c" style="left:92.5px;top:1195.4px;width:42.9px;font-size:15.5px;line-height:16px;font-weight:bold;color:#000;font-family:'Liberation Serif',serif;transform:scaleX(1.1)">15</div>
<div class="c" style="left:145.3px;top:1195.4px;width:37.3px;font-size:15.5px;line-height:16px;font-weight:bold;color:#000;font-family:'Liberation Serif',serif;transform:scaleX(1.1)">15</div>
<div class="c" style="left:231.0px;top:1194.4px;width:23.1px;font-size:12.5px;line-height:14px;color:#c9d2bd;font-family:'Liberation Serif',serif;transform:scaleX(0.85)">58</div>
<div class="c" style="left:247.6px;top:1195.4px;width:43.2px;font-size:15.5px;line-height:16px;font-weight:bold;color:#000;font-family:'Liberation Serif',serif;transform:scaleX(1.1)">130</div>
<div class="c" style="left:300.3px;top:1195.4px;width:37.2px;font-size:15.5px;line-height:16px;font-weight:bold;color:#000;font-family:'Liberation Serif',serif;transform:scaleX(1.1)">10</div>
<div class="c" style="left:385.8px;top:1194.4px;width:23.0px;font-size:12.5px;line-height:14px;color:#c9d2bd;font-family:'Liberation Serif',serif;transform:scaleX(0.85)">59</div>
<div class="c" style="left:402.3px;top:1195.4px;width:42.9px;font-size:15.5px;line-height:16px;font-weight:bold;color:#000;font-family:'Liberation Serif',serif;transform:scaleX(1.1)">27</div>
<div class="c" style="left:455.5px;top:1195.4px;width:36.9px;font-size:15.5px;line-height:16px;font-weight:bold;color:#000;font-family:'Liberation Serif',serif;transform:scaleX(1.1)">9</div>
<div class="c" style="left:540.7px;top:1194.4px;width:23.2px;font-size:12.5px;line-height:14px;color:#c9d2bd;font-family:'Liberation Serif',serif;transform:scaleX(0.85)">60</div>
<div class="c" style="left:557.4px;top:1195.4px;width:42.9px;font-size:15.5px;line-height:16px;font-weight:bold;color:#000;font-family:'Liberation Serif',serif;transform:scaleX(1.1)">16</div>
<div class="c" style="left:610.1px;top:1195.4px;width:37.2px;font-size:15.5px;line-height:16px;font-weight:bold;color:#000;font-family:'Liberation Serif',serif;transform:scaleX(1.1)">4</div>
<svg style="left:0px;top:0px" width="2503" height="1368"><rect x="75.5" y="295.5" width="23.0" height="20.0" fill="none" stroke="#c8d8b8" stroke-width="1"/><path d="M135.4 301.9 L145.4 311.1 M145.4 301.9 L135.4 311.1" stroke="#000" stroke-width="1.3"/><path d="M184.1 305.6 H192.1 M184.1 308.5 H192.1" stroke="#000" stroke-width="1.3"/><rect x="230.5" y="295.5" width="23.0" height="20.0" fill="none" stroke="#c8d8b8" stroke-width="1"/><path d="M290.6 301.9 L300.6 311.1 M300.6 301.9 L290.6 311.1" stroke="#000" stroke-width="1.3"/><path d="M339.1 305.6 H347.1 M339.1 308.5 H347.1" stroke="#000" stroke-width="1.3"/><rect x="385.5" y="295.5" width="23.0" height="20.0" fill="none" stroke="#c8d8b8" stroke-width="1"/><path d="M444.9 306.5 H455.9" stroke="#000" stroke-width="1.5"/><rect x="448.9" y="302.3" width="3" height="2" fill="#000"/><rect x="448.9" y="309.3" width="3" height="2" fill="#000"/><path d="M493.9 305.6 H501.9 M493.9 308.5 H501.9" stroke="#000" stroke-width="1.3"/><rect x="540.5" y="295.5" width="23.0" height="20.0" fill="none" stroke="#c8d8b8" stroke-width="1"/><path d="M600.2 301.9 L610.2 311.1 M610.2 301.9 L600.2 311.1" stroke="#000" stroke-width="1.3"/><path d="M649.0 305.6 H657.0 M649.0 308.5 H657.0" stroke="#000" stroke-width="1.3"/><rect x="75.5" y="359.5" width="23.0" height="20.0" fill="none" stroke="#c8d8b8" stroke-width="1"/><path d="M135.4 365.9 L145.4 375.1 M145.4 365.9 L135.4 375.1" stroke="#000" stroke-width="1.3"/><path d="M184.1 369.6 H192.1 M184.1 372.5 H192.1" stroke="#000" stroke-width="1.3"/><rect x="230.5" y="359.5" width="23.0" height="20.0" fill="none" stroke="#c8d8b8" stroke-width="1"/><path d="M290.1 370.5 H301.1" stroke="#000" stroke-width="1.5"/><rect x="294.1" y="366.3" width="3" height="2" fill="#000"/><rect x="294.1" y="373.3" width="3" height="2" fill="#000"/><path d="M339.1 369.6 H347.1 M339.1 372.5 H347.1" stroke="#000" stroke-width="1.3"/><rect x="385.5" y="359.5" width="23.0" height="20.0" fill="none" stroke="#c8d8b8" stroke-width="1"/><path d="M445.4 365.9 L455.4 375.1 M455.4 365.9 L445.4 375.1" stroke="#000" stroke-width="1.3"/><path d="M493.9 369.6 H501.9 M493.9 372.5 H501.9" stroke="#000" stroke-width="1.3"/><rect x="540.5" y="359.5" width="23.0" height="20.0" fill="none" stroke="#c8d8b8" stroke-width="1"/><path d="M599.7 370.5 H610.7" stroke="#000" stroke-width="1.5"/><rect x="603.7" y="366.3" width="3" height="2" fill="#000"/><rect x="603.7" y="373.3" width="3" height="2" fill="#000"/><path d="M649.0 369.6 H657.0 M649.0 372.5 H657.0" stroke="#000" stroke-width="1.3"/><rect x="75.5" y="423.5" width="23.0" height="20.0" fill="none" stroke="#c8d8b8" stroke-width="1"/><path d="M134.9 434.5 H145.9" stroke="#000" stroke-width="1.5"/><rect x="138.9" y="430.3" width="3" height="2" fill="#000"/><rect x="138.9" y="437.3" width="3" height="2" fill="#000"/><path d="M184.1 433.6 H192.1 M184.1 436.5 H192.1" stroke="#000" stroke-width="1.3"/><rect x="230.5" y="423.5" width="23.0" height="20.0" fill="none" stroke="#c8d8b8" stroke-width="1"/><path d="M290.1 434.5 H301.1" stroke="#000" stroke-width="1.5"/><rect x="294.1" y="430.3" width="3" height="2" fill="#000"/><rect x="294.1" y="437.3" width="3" height="2" fill="#000"/><path d="M339.1 433.6 H347.1 M339.1 436.5 H347.1" stroke="#000" stroke-width="1.3"/><rect x="385.5" y="423.5" width="23.0" height="20.0" fill="none" stroke="#c8d8b8" stroke-width="1"/><path d="M444.9 434.5 H455.9" stroke="#000" stroke-width="1.5"/><rect x="448.9" y="430.3" width="3" height="2" fill="#000"/><rect x="448.9" y="437.3" width="3" height="2" fill="#000"/><path d="M493.9 433.6 H501.9 M493.9 436.5 H501.9" stroke="#000" stroke-width="1.3"/><rect x="540.5" y="423.5" width="23.0" height="20.0" fill="none" stroke="#c8d8b8" stroke-width="1"/><path d="M599.7 434.5 H610.7" stroke="#000" stroke-width="1.5"/><rect x="603.7" y="430.3" width="3" height="2" fill="#000"/><rect x="603.7" y="437.3" width="3" height="2" fill="#000"/><path d="M649.0 433.6 H657.0 M649.0 436.5 H657.0" stroke="#000" stroke-width="1.3"/><rect x="75.5" y="487.5" width="23.0" height="20.0" fill="none" stroke="#c8d8b8" stroke-width="1"/><path d="M134.9 498.5 H145.9" stroke="#000" stroke-width="1.5"/><rect x="138.9" y="494.3" width="3" height="2" fill="#000"/><rect x="138.9" y="501.3" width="3" height="2" fill="#000"/><path d="M184.1 497.6 H192.1 M184.1 500.5 H192.1" stroke="#000" stroke-width="1.3"/><rect x="230.5" y="487.5" width="23.0" height="20.0" fill="none" stroke="#c8d8b8" stroke-width="1"/><path d="M290.6 493.9 L300.6 503.1 M300.6 493.9 L290.6 503.1" stroke="#000" stroke-width="1.3"/><path d="M339.1 497.6 H347.1 M339.1 500.5 H347.1" stroke="#000" stroke-width="1.3"/><rect x="385.5" y="487.5" width="23.0" height="20.0" fill="none" stroke="#c8d8b8" stroke-width="1"/><path d="M445.4 493.9 L455.4 503.1 M455.4 493.9 L445.4 503.1" stroke="#000" stroke-width="1.3"/><path d="M493.9 497.6 H501.9 M493.9 500.5 H501.9" stroke="#000" stroke-width="1.3"/><rect x="540.5" y="487.5" width="23.0" height="20.0" fill="none" stroke="#c8d8b8" stroke-width="1"/><path d="M599.7 498.5 H610.7" stroke="#000" stroke-width="1.5"/><rect x="603.7" y="494.3" width="3" height="2" fill="#000"/><rect x="603.7" y="501.3" width="3" height="2" fill="#000"/><path d="M649.0 497.6 H657.0 M649.0 500.5 H657.0" stroke="#000" stroke-width="1.3"/><rect x="75.5" y="551.5" width="23.0" height="20.0" fill="none" stroke="#c8d8b8" stroke-width="1"/><path d="M135.4 557.9 L145.4 567.1 M145.4 557.9 L135.4 567.1" stroke="#000" stroke-width="1.3"/><path d="M184.1 561.6 H192.1 M184.1 564.5 H192.1" stroke="#000" stroke-width="1.3"/><rect x="230.5" y="551.5" width="23.0" height="20.0" fill="none" stroke="#c8d8b8" stroke-width="1"/><path d="M290.1 562.5 H301.1" stroke="#000" stroke-width="1.5"/><rect x="294.1" y="558.3" width="3" height="2" fill="#000"/><rect x="294.1" y="565.3" width="3" height="2" fill="#000"/><path d="M339.1 561.6 H347.1 M339.1 564.5 H347.1" stroke="#000" stroke-width="1.3"/><rect x="385.5" y="551.5" width="23.0" height="20.0" fill="none" stroke="#c8d8b8" stroke-width="1"/><path d="M445.4 557.9 L455.4 567.1 M455.4 557.9 L445.4 567.1" stroke="#000" stroke-width="1.3"/><path d="M493.9 561.6 H501.9 M493.9 564.5 H501.9" stroke="#000" stroke-width="1.3"/><rect x="540.5" y="551.5" width="23.0" height="20.0" fill="none" stroke="#c8d8b8" stroke-width="1"/><path d="M600.2 557.9 L610.2 567.1 M610.2 557.9 L600.2 567.1" stroke="#000" stroke-width="1.3"/><path d="M649.0 561.6 H657.0 M649.0 564.5 H657.0" stroke="#000" stroke-width="1.3"/><rect x="75.5" y="615.5" width="23.0" height="20.0" fill="none" stroke="#c8d8b8" stroke-width="1"/><path d="M134.9 626.5 H145.9" stroke="#000" stroke-width="1.5"/><rect x="138.9" y="622.3" width="3" height="2" fill="#000"/><rect x="138.9" y="629.3" width="3" height="2" fill="#000"/><path d="M184.1 625.6 H192.1 M184.1 628.5 H192.1" stroke="#000" stroke-width="1.3"/><rect x="230.5" y="615.5" width="23.0" height="20.0" fill="none" stroke="#c8d8b8" stroke-width="1"/><path d="M290.1 626.5 H301.1" stroke="#000" stroke-width="1.5"/><rect x="294.1" y="622.3" width="3" height="2" fill="#000"/><rect x="294.1" y="629.3" width="3" height="2" fill="#000"/><path d="M339.1 625.6 H347.1 M339.1 628.5 H347.1" stroke="#000" stroke-width="1.3"/><rect x="385.5" y="615.5" width="23.0" height="20.0" fill="none" stroke="#c8d8b8" stroke-width="1"/><path d="M445.4 621.9 L455.4 631.1 M455.4 621.9 L445.4 631.1" stroke="#000" stroke-width="1.3"/><path d="M493.9 625.6 H501.9 M493.9 628.5 H501.9" stroke="#000" stroke-width="1.3"/><rect x="540.5" y="615.5" width="23.0" height="20.0" fill="none" stroke="#c8d8b8" stroke-width="1"/><path d="M599.7 626.5 H610.7" stroke="#000" stroke-width="1.5"/><rect x="603.7" y="622.3" width="3" height="2" fill="#000"/><rect x="603.7" y="629.3" width="3" height="2" fill="#000"/><path d="M649.0 625.6 H657.0 M649.0 628.5 H657.0" stroke="#000" stroke-width="1.3"/><rect x="75.5" y="679.5" width="23.0" height="20.0" fill="none" stroke="#c8d8b8" stroke-width="1"/><path d="M134.9 690.5 H145.9" stroke="#000" stroke-width="1.5"/><rect x="138.9" y="686.3" width="3" height="2" fill="#000"/><rect x="138.9" y="693.3" width="3" height="2" fill="#000"/><path d="M184.1 689.6 H192.1 M184.1 692.5 H192.1" stroke="#000" stroke-width="1.3"/><rect x="230.5" y="679.5" width="23.0" height="20.0" fill="none" stroke="#c8d8b8" stroke-width="1"/><path d="M290.1 690.5 H301.1" stroke="#000" stroke-width="1.5"/><rect x="294.1" y="686.3" width="3" height="2" fill="#000"/><rect x="294.1" y="693.3" width="3" height="2" fill="#000"/><path d="M339.1 689.6 H347.1 M339.1 692.5 H347.1" stroke="#000" stroke-width="1.3"/><rect x="385.5" y="679.5" width="23.0" height="20.0" fill="none" stroke="#c8d8b8" stroke-width="1"/><path d="M444.9 690.5 H455.9" stroke="#000" stroke-width="1.5"/><rect x="448.9" y="686.3" width="3" height="2" fill="#000"/><rect x="448.9" y="693.3" width="3" height="2" fill="#000"/><path d="M493.9 689.6 H501.9 M493.9 692.5 H501.9" stroke="#000" stroke-width="1.3"/><rect x="540.5" y="679.5" width="23.0" height="20.0" fill="none" stroke="#c8d8b8" stroke-width="1"/><path d="M599.7 690.5 H610.7" stroke="#000" stroke-width="1.5"/><rect x="603.7" y="686.3" width="3" height="2" fill="#000"/><rect x="603.7" y="693.3" width="3" height="2" fill="#000"/><path d="M649.0 689.6 H657.0 M649.0 692.5 H657.0" stroke="#000" stroke-width="1.3"/><rect x="75.5" y="743.5" width="23.0" height="20.0" fill="none" stroke="#c8d8b8" stroke-width="1"/><path d="M135.4 749.9 L145.4 759.1 M145.4 749.9 L135.4 759.1" stroke="#000" stroke-width="1.3"/><path d="M184.1 753.6 H192.1 M184.1 756.5 H192.1" stroke="#000" stroke-width="1.3"/><rect x="230.5" y="743.5" width="23.0" height="20.0" fill="none" stroke="#c8d8b8" stroke-width="1"/><path d="M290.6 749.9 L300.6 759.1 M300.6 749.9 L290.6 759.1" stroke="#000" stroke-width="1.3"/><path d="M339.1 753.6 H347.1 M339.1 756.5 H347.1" stroke="#000" stroke-width="1.3"/><rect x="385.5" y="743.5" width="23.0" height="20.0" fill="none" stroke="#c8d8b8" stroke-width="1"/><path d="M445.4 749.9 L455.4 759.1 M455.4 749.9 L445.4 759.1" stroke="#000" stroke-width="1.3"/><path d="M493.9 753.6 H501.9 M493.9 756.5 H501.9" stroke="#000" stroke-width="1.3"/><rect x="540.5" y="743.5" width="23.0" height="20.0" fill="none" stroke="#c8d8b8" stroke-width="1"/><path d="M599.7 754.5 H610.7" stroke="#000" stroke-width="1.5"/><rect x="603.7" y="750.3" width="3" height="2" fill="#000"/><rect x="603.7" y="757.3" width="3" height="2" fill="#000"/><path d="M649.0 753.6 H657.0 M649.0 756.5 H657.0" stroke="#000" stroke-width="1.3"/><rect x="75.5" y="807.5" width="23.0" height="20.0" fill="none" stroke="#c8d8b8" stroke-width="1"/><path d="M135.4 813.9 L145.4 823.1 M145.4 813.9 L135.4 823.1" stroke="#000" stroke-width="1.3"/><path d="M184.1 817.6 H192.1 M184.1 820.5 H192.1" stroke="#000" stroke-width="1.3"/><rect x="230.5" y="807.5" width="23.0" height="20.0" fill="none" stroke="#c8d8b8" stroke-width="1"/><path d="M290.6 813.9 L300.6 823.1 M300.6 813.9 L290.6 823.1" stroke="#000" stroke-width="1.3"/><path d="M339.1 817.6 H347.1 M339.1 820.5 H347.1" stroke="#000" stroke-width="1.3"/><rect x="385.5" y="807.5" width="23.0" height="20.0" fill="none" stroke="#c8d8b8" stroke-width="1"/><path d="M444.9 818.5 H455.9" stroke="#000" stroke-width="1.5"/><rect x="448.9" y="814.3" width="3" height="2" fill="#000"/><rect x="448.9" y="821.3" width="3" height="2" fill="#000"/><path d="M493.9 817.6 H501.9 M493.9 820.5 H501.9" stroke="#000" stroke-width="1.3"/><rect x="540.5" y="807.5" width="23.0" height="20.0" fill="none" stroke="#c8d8b8" stroke-width="1"/><path d="M600.2 813.9 L610.2 823.1 M610.2 813.9 L600.2 823.1" stroke="#000" stroke-width="1.3"/><path d="M649.0 817.6 H657.0 M649.0 820.5 H657.0" stroke="#000" stroke-width="1.3"/><rect x="75.5" y="871.5" width="23.0" height="20.0" fill="none" stroke="#c8d8b8" stroke-width="1"/><path d="M135.4 877.9 L145.4 887.1 M145.4 877.9 L135.4 887.1" stroke="#000" stroke-width="1.3"/><path d="M184.1 881.6 H192.1 M184.1 884.5 H192.1" stroke="#000" stroke-width="1.3"/><rect x="230.5" y="871.5" width="23.0" height="20.0" fill="none" stroke="#c8d8b8" stroke-width="1"/><path d="M290.1 882.5 H301.1" stroke="#000" stroke-width="1.5"/><rect x="294.1" y="878.3" width="3" height="2" fill="#000"/><rect x="294.1" y="885.3" width="3" height="2" fill="#000"/><path d="M339.1 881.6 H347.1 M339.1 884.5 H347.1" stroke="#000" stroke-width="1.3"/><rect x="385.5" y="871.5" width="23.0" height="20.0" fill="none" stroke="#c8d8b8" stroke-width="1"/><path d="M445.4 877.9 L455.4 887.1 M455.4 877.9 L445.4 887.1" stroke="#000" stroke-width="1.3"/><path d="M493.9 881.6 H501.9 M493.9 884.5 H501.9" stroke="#000" stroke-width="1.3"/><rect x="540.5" y="871.5" width="23.0" height="20.0" fill="none" stroke="#c8d8b8" stroke-width="1"/><path d="M600.2 877.9 L610.2 887.1 M610.2 877.9 L600.2 887.1" stroke="#000" stroke-width="1.3"/><path d="M649.0 881.6 H657.0 M649.0 884.5 H657.0" stroke="#000" stroke-width="1.3"/><rect x="75.5" y="935.5" width="23.0" height="20.0" fill="none" stroke="#c8d8b8" stroke-width="1"/><path d="M134.9 946.5 H145.9" stroke="#000" stroke-width="1.5"/><rect x="138.9" y="942.3" width="3" height="2" fill="#000"/><rect x="138.9" y="949.3" width="3" height="2" fill="#000"/><path d="M184.1 945.6 H192.1 M184.1 948.5 H192.1" stroke="#000" stroke-width="1.3"/><rect x="230.5" y="935.5" width="23.0" height="20.0" fill="none" stroke="#c8d8b8" stroke-width="1"/><path d="M290.6 941.9 L300.6 951.1 M300.6 941.9 L290.6 951.1" stroke="#000" stroke-width="1.3"/><path d="M339.1 945.6 H347.1 M339.1 948.5 H347.1" stroke="#000" stroke-width="1.3"/><rect x="385.5" y="935.5" width="23.0" height="20.0" fill="none" stroke="#c8d8b8" stroke-width="1"/><path d="M445.4 941.9 L455.4 951.1 M455.4 941.9 L445.4 951.1" stroke="#000" stroke-width="1.3"/><path d="M493.9 945.6 H501.9 M493.9 948.5 H501.9" stroke="#000" stroke-width="1.3"/><rect x="540.5" y="935.5" width="23.0" height="20.0" fill="none" stroke="#c8d8b8" stroke-width="1"/><path d="M600.2 941.9 L610.2 951.1 M610.2 941.9 L600.2 951.1" stroke="#000" stroke-width="1.3"/><path d="M649.0 945.6 H657.0 M649.0 948.5 H657.0" stroke="#000" stroke-width="1.3"/><rect x="75.5" y="999.5" width="23.0" height="20.0" fill="none" stroke="#c8d8b8" stroke-width="1"/><path d="M135.4 1005.9 L145.4 1015.1 M145.4 1005.9 L135.4 1015.1" stroke="#000" stroke-width="1.3"/><path d="M184.1 1009.6 H192.1 M184.1 1012.5 H192.1" stroke="#000" stroke-width="1.3"/><rect x="230.5" y="999.5" width="23.0" height="20.0" fill="none" stroke="#c8d8b8" stroke-width="1"/><path d="M290.6 1005.9 L300.6 1015.1 M300.6 1005.9 L290.6 1015.1" stroke="#000" stroke-width="1.3"/><path d="M339.1 1009.6 H347.1 M339.1 1012.5 H347.1" stroke="#000" stroke-width="1.3"/><rect x="385.5" y="999.5" width="23.0" height="20.0" fill="none" stroke="#c8d8b8" stroke-width="1"/><path d="M445.4 1005.9 L455.4 1015.1 M455.4 1005.9 L445.4 1015.1" stroke="#000" stroke-width="1.3"/><path d="M493.9 1009.6 H501.9 M493.9 1012.5 H501.9" stroke="#000" stroke-width="1.3"/><rect x="540.5" y="999.5" width="23.0" height="20.0" fill="none" stroke="#c8d8b8" stroke-width="1"/><path d="M600.2 1005.9 L610.2 1015.1 M610.2 1005.9 L600.2 1015.1" stroke="#000" stroke-width="1.3"/><path d="M649.0 1009.6 H657.0 M649.0 1012.5 H657.0" stroke="#000" stroke-width="1.3"/><rect x="75.5" y="1063.5" width="23.0" height="20.0" fill="none" stroke="#c8d8b8" stroke-width="1"/><path d="M134.9 1074.5 H145.9" stroke="#000" stroke-width="1.5"/><rect x="138.9" y="1070.3" width="3" height="2" fill="#000"/><rect x="138.9" y="1077.3" width="3" height="2" fill="#000"/><path d="M184.1 1073.6 H192.1 M184.1 1076.5 H192.1" stroke="#000" stroke-width="1.3"/><rect x="230.5" y="1063.5" width="23.0" height="20.0" fill="none" stroke="#c8d8b8" stroke-width="1"/><path d="M290.6 1069.9 L300.6 1079.1 M300.6 1069.9 L290.6 1079.1" stroke="#000" stroke-width="1.3"/><path d="M339.1 1073.6 H347.1 M339.1 1076.5 H347.1" stroke="#000" stroke-width="1.3"/><rect x="385.5" y="1063.5" width="23.0" height="20.0" fill="none" stroke="#c8d8b8" stroke-width="1"/><path d="M444.9 1074.5 H455.9" stroke="#000" stroke-width="1.5"/><rect x="448.9" y="1070.3" width="3" height="2" fill="#000"/><rect x="448.9" y="1077.3" width="3" height="2" fill="#000"/><path d="M493.9 1073.6 H501.9 M493.9 1076.5 H501.9" stroke="#000" stroke-width="1.3"/><rect x="540.5" y="1063.5" width="23.0" height="20.0" fill="none" stroke="#c8d8b8" stroke-width="1"/><path d="M600.2 1069.9 L610.2 1079.1 M610.2 1069.9 L600.2 1079.1" stroke="#000" stroke-width="1.3"/><path d="M649.0 1073.6 H657.0 M649.0 1076.5 H657.0" stroke="#000" stroke-width="1.3"/><rect x="75.5" y="1127.5" width="23.0" height="20.0" fill="none" stroke="#c8d8b8" stroke-width="1"/><path d="M135.4 1133.9 L145.4 1143.1 M145.4 1133.9 L135.4 1143.1" stroke="#000" stroke-width="1.3"/><path d="M184.1 1137.6 H192.1 M184.1 1140.5 H192.1" stroke="#000" stroke-width="1.3"/><rect x="230.5" y="1127.5" width="23.0" height="20.0" fill="none" stroke="#c8d8b8" stroke-width="1"/><path d="M290.1 1138.5 H301.1" stroke="#000" stroke-width="1.5"/><rect x="294.1" y="1134.3" width="3" height="2" fill="#000"/><rect x="294.1" y="1141.3" width="3" height="2" fill="#000"/><path d="M339.1 1137.6 H347.1 M339.1 1140.5 H347.1" stroke="#000" stroke-width="1.3"/><rect x="385.5" y="1127.5" width="23.0" height="20.0" fill="none" stroke="#c8d8b8" stroke-width="1"/><path d="M445.4 1133.9 L455.4 1143.1 M455.4 1133.9 L445.4 1143.1" stroke="#000" stroke-width="1.3"/><path d="M493.9 1137.6 H501.9 M493.9 1140.5 H501.9" stroke="#000" stroke-width="1.3"/><rect x="540.5" y="1127.5" width="23.0" height="20.0" fill="none" stroke="#c8d8b8" stroke-width="1"/><path d="M599.7 1138.5 H610.7" stroke="#000" stroke-width="1.5"/><rect x="603.7" y="1134.3" width="3" height="2" fill="#000"/><rect x="603.7" y="1141.3" width="3" height="2" fill="#000"/><path d="M649.0 1137.6 H657.0 M649.0 1140.5 H657.0" stroke="#000" stroke-width="1.3"/><rect x="75.5" y="1191.5" width="23.0" height="20.0" fill="none" stroke="#c8d8b8" stroke-width="1"/><path d="M134.9 1202.5 H145.9" stroke="#000" stroke-width="1.5"/><rect x="138.9" y="1198.3" width="3" height="2" fill="#000"/><rect x="138.9" y="1205.3" width="3" height="2" fill="#000"/><path d="M184.1 1201.6 H192.1 M184.1 1204.5 H192.1" stroke="#000" stroke-width="1.3"/><rect x="230.5" y="1191.5" width="23.0" height="20.0" fill="none" stroke="#c8d8b8" stroke-width="1"/><path d="M290.1 1202.5 H301.1" stroke="#000" stroke-width="1.5"/><rect x="294.1" y="1198.3" width="3" height="2" fill="#000"/><rect x="294.1" y="1205.3" width="3" height="2" fill="#000"/><path d="M339.1 1201.6 H347.1 M339.1 1204.5 H347.1" stroke="#000" stroke-width="1.3"/><rect x="385.5" y="1191.5" width="23.0" height="20.0" fill="none" stroke="#c8d8b8" stroke-width="1"/><path d="M444.9 1202.5 H455.9" stroke="#000" stroke-width="1.5"/><rect x="448.9" y="1198.3" width="3" height="2" fill="#000"/><rect x="448.9" y="1205.3" width="3" height="2" fill="#000"/><path d="M493.9 1201.6 H501.9 M493.9 1204.5 H501.9" stroke="#000" stroke-width="1.3"/><rect x="540.5" y="1191.5" width="23.0" height="20.0" fill="none" stroke="#c8d8b8" stroke-width="1"/><path d="M599.7 1202.5 H610.7" stroke="#000" stroke-width="1.5"/><rect x="603.7" y="1198.3" width="3" height="2" fill="#000"/><rect x="603.7" y="1205.3" width="3" height="2" fill="#000"/><path d="M649.0 1201.6 H657.0 M649.0 1204.5 H657.0" stroke="#000" stroke-width="1.3"/><path d="M50.5 351 V428" stroke="#555" stroke-width="1"/><path d="M50.5 540 V617" stroke="#555" stroke-width="1"/><path d="M50.5 730 V842" stroke="#555" stroke-width="1"/><path d="M50.5 954 V1107" stroke="#555" stroke-width="1"/></svg>
<div class="a" style="left:18.0px;top:449.5px;width:50px;height:16px;font-size:14.5px;line-height:16px;color:#222;transform:rotate(-90deg);text-align:center">学号:</div>
<div class="a" style="left:18.0px;top:638.0px;width:50px;height:16px;font-size:14.5px;line-height:16px;color:#222;transform:rotate(-90deg);text-align:center">姓名:</div>
<div class="a" style="left:18.0px;top:862.0px;width:50px;height:16px;font-size:14.5px;line-height:16px;color:#222;transform:rotate(-90deg);text-align:center">班级:</div>
<div class="a" style="left:18.0px;top:1125.5px;width:50px;height:16px;font-size:14.5px;line-height:16px;color:#222;transform:rotate(-90deg);text-align:center">学校:</div>
<div class="c" style="left:790px;top:220px;width:200px;font-size:22.5px;line-height:24px;font-weight:bold;color:#1515e0">参数设定</div>
<div class="a" style="left:746.0px;top:296.0px;width:63.0px;height:19.2px;background:#d9d9d9"></div>
<div class="c" style="left:746.0px;top:297.5px;width:63.0px;font-size:16.5px;line-height:19.2px;color:#222">最小值</div>
<div class="a" style="left:810.3px;top:296.0px;width:62.4px;height:19.2px;background:#fff2cc"></div>
<div class="a" style="left:810.3px;top:314.8px;width:62.4px;height:1.4px;background:#d8342a"></div>
<div class="c" style="left:810.3px;top:298.0px;width:62.4px;font-size:16.5px;line-height:19.2px;color:#222">1</div>
<div class="a" style="left:905.8px;top:296.0px;width:63.0px;height:19.2px;background:#d9d9d9"></div>
<div class="c" style="left:905.8px;top:297.5px;width:63.0px;font-size:16.5px;line-height:19.2px;color:#222">最大值</div>
<div class="a" style="left:970.0px;top:296.0px;width:63.0px;height:19.2px;background:#fff2cc"></div>
<div class="a" style="left:970.0px;top:314.8px;width:63.0px;height:1.4px;background:#d8342a"></div>
<div class="c" style="left:970.0px;top:298.0px;width:63.0px;font-size:16.5px;line-height:19.2px;color:#222">30</div>
<div class="a" style="left:746.0px;top:360.0px;width:94.8px;height:19.3px;background:#d9d9d9"></div>
<div class="c" style="left:746.0px;top:361.5px;width:94.8px;font-size:16.5px;line-height:19.3px;color:#222">运算方式</div>
<div class="a" style="left:842.0px;top:360.0px;width:94.6px;height:19.3px;background:#fff2cc"></div>
<div class="a" style="left:842.0px;top:378.9px;width:94.6px;height:1.4px;background:#d8342a"></div>
<div class="c" style="left:842.0px;top:362.0px;width:94.6px;font-size:16.5px;line-height:19.3px;color:#222">乘除法混合</div>
<div class="a" style="left:746.0px;top:424.2px;width:94.8px;height:19.2px;background:#d9d9d9"></div>
<div class="c" style="left:746.0px;top:425.7px;width:94.8px;font-size:16.5px;line-height:19.2px;color:#222">允许零值</div>
<div class="a" style="left:842.0px;top:424.2px;width:63.0px;height:19.2px;background:#fff2cc"></div>
<div class="a" style="left:842.0px;top:443.0px;width:63.0px;height:1.4px;background:#d8342a"></div>
<div class="c" style="left:842.0px;top:426.2px;width:63.0px;font-size:16.5px;line-height:19.2px;color:#222">否</div>
<div class="a" style="left:746.0px;top:488.2px;width:94.8px;height:19.2px;background:#d9d9d9"></div>
<div class="c" style="left:746.0px;top:489.7px;width:94.8px;font-size:16.5px;line-height:19.2px;color:#222">打印答案</div>
<div class="a" style="left:842.0px;top:488.2px;width:63.0px;height:19.2px;background:#fff2cc"></div>
<div class="a" style="left:842.0px;top:507.0px;width:63.0px;height:1.4px;background:#d8342a"></div>
<div class="c" style="left:842.0px;top:490.2px;width:63.0px;font-size:16.5px;line-height:19.2px;color:#222">否</div>
<div class="a" style="left:746.0px;top:552.2px;width:94.8px;height:19.2px;background:#d9d9d9"></div>
<div class="c" style="left:746.0px;top:553.7px;width:94.8px;font-size:16.5px;line-height:19.2px;color:#222">题目数量</div>
<div class="a" style="left:842.0px;top:552.2px;width:63.0px;height:19.2px;background:#fff2cc"></div>
<div class="a" style="left:842.0px;top:571.0px;width:63.0px;height:1.4px;background:#d8342a"></div>
<div class="c" style="left:842.0px;top:554.2px;width:63.0px;font-size:16.5px;line-height:19.2px;color:#222">60</div>
<div class="c" style="left:930.4px;top:488.3px;width:50.4px;height:22.3px;border:1px solid #c9c9c9;border-radius:3px;background:#fff;font-size:16.5px;line-height:25.3px;color:#2a2ad0;font-weight:normal">确定</div>
<div class="c" style="left:930.4px;top:528.3px;width:49.3px;height:19.4px;border:1px solid #c9c9c9;border-radius:3px;background:#fff;font-size:16.5px;line-height:22.4px;color:#2a2ad0;font-weight:normal">确定</div>
<div class="c" style="left:724.2px;top:619.0px;width:157.4px;height:52.8px;border:1px solid #cfcfcf;border-radius:4px;background:#fbfbfb;font-size:21.5px;line-height:57.8px;color:#e01818;font-weight:bold">刷新</div>
<div class="c" style="left:893.3px;top:618.0px;width:157.3px;height:54.7px;border:1px solid #cfcfcf;border-radius:4px;background:#fbfbfb;font-size:21.5px;line-height:59.7px;color:#e01818;font-weight:bold">打印多份</div>
<div class="c" style="left:790px;top:744px;width:200px;font-size:18px;line-height:22px;font-weight:bold;color:#222;letter-spacing:1.0px">除数范围几率调整</div>
<div class="c" style="left:790px;top:936px;width:200px;font-size:18px;line-height:22px;font-weight:bold;color:#222;letter-spacing:1.0px">乘数范围几率调整</div>
<div class="a" style="left:746.0px;top:807.8px;width:127.0px;height:19.2px;background:#d9d9d9"></div>
<div class="c" style="left:746px;top:809.8px;width:127px;font-size:16.6px;line-height:19.2px;color:#222">为15以上的几率</div>
<div class="a" style="left:874.5px;top:807.8px;width:62.1px;height:19.2px;background:#fff2cc"></div>
<div class="a" style="left:874.5px;top:826.7px;width:62.1px;height:1.5px;background:#d8342a"></div>
<div class="c" style="left:874.5px;top:809.8px;width:62px;font-size:16.5px;line-height:19.2px;color:#222">3</div>
<div class="a" style="left:940px;top:811.0px;font-size:16.5px;line-height:16px;color:#555;transform:scaleX(0.58);transform-origin:left">%</div>
<div class="a" style="left:746.0px;top:871.8px;width:127.0px;height:19.2px;background:#d9d9d9"></div>
<div class="c" style="left:746px;top:873.8px;width:127px;font-size:16.6px;line-height:19.2px;color:#222">为10以上的几率</div>
<div class="a" style="left:874.5px;top:871.8px;width:62.1px;height:19.2px;background:#fff2cc"></div>
<div class="a" style="left:874.5px;top:890.7px;width:62.1px;height:1.5px;background:#d8342a"></div>
<div class="c" style="left:874.5px;top:873.8px;width:62px;font-size:16.5px;line-height:19.2px;color:#222">5</div>
<div class="a" style="left:940px;top:875.0px;font-size:16.5px;line-height:16px;color:#555;transform:scaleX(0.58);transform-origin:left">%</div>
<div class="a" style="left:746.0px;top:999.8px;width:127.0px;height:19.2px;background:#d9d9d9"></div>
<div class="c" style="left:746px;top:1001.8px;width:127px;font-size:16.6px;line-height:19.2px;color:#222">为15以上的几率</div>
<div class="a" style="left:874.5px;top:999.8px;width:62.1px;height:19.2px;background:#fff2cc"></div>
<div class="a" style="left:874.5px;top:1018.7px;width:62.1px;height:1.5px;background:#d8342a"></div>
<div class="c" style="left:874.5px;top:1001.8px;width:62px;font-size:16.5px;line-height:19.2px;color:#222">40</div>
<div class="a" style="left:940px;top:1003.0px;font-size:16.5px;line-height:16px;color:#555;transform:scaleX(0.58);transform-origin:left">%</div>
<div class="a" style="left:746.0px;top:1063.8px;width:127.0px;height:19.2px;background:#d9d9d9"></div>
<div class="c" style="left:746px;top:1065.8px;width:127px;font-size:16.6px;line-height:19.2px;color:#222">为10以上的几率</div>
<div class="a" style="left:874.5px;top:1063.8px;width:62.1px;height:19.2px;background:#fff2cc"></div>
<div class="a" style="left:874.5px;top:1082.7px;width:62.1px;height:1.5px;background:#d8342a"></div>
<div class="c" style="left:874.5px;top:1065.8px;width:62px;font-size:16.5px;line-height:19.2px;color:#222">50</div>
<div class="a" style="left:940px;top:1067.0px;font-size:16.5px;line-height:16px;color:#555;transform:scaleX(0.58);transform-origin:left">%</div>
<div class="a" style="left:746.0px;top:1191.0px;width:286.6px;height:19.5px;background:#f2f2f2"></div>
<div class="c" style="left:746px;top:1192px;width:286.6px;font-size:16px;line-height:20px;font-weight:bold;color:#1515e0">学生信息</div>
<div class="a" style="left:1131px;top:223px;font-size:17px;line-height:20px;color:#7030a0;letter-spacing:-0.25px;font-weight:500">本表生成简单的乘、除法计算题</div>
<div class="a" style="left:1127px;top:263px;font-size:13px;line-height:16px;color:#20a050;letter-spacing:1.45px">要启用按键功能，需要在按下列步骤启用宏:</div>
<div class="a" style="left:1101px;top:281.5px;font-size:13px;line-height:16px;color:#20a050;letter-spacing:1.25px">1、打开“文件”菜单，选“选项”</div>
<div class="a" style="left:1101px;top:300.4px;font-size:13px;line-height:16px;color:#20a050;letter-spacing:1.25px">2、选“信任中心”，再点“信任中心设置”按键</div>
<div class="a" style="left:1101px;top:319.3px;font-size:13px;line-height:16px;color:#20a050;letter-spacing:1.25px">3、选“宏设置”，再选“启用所有宏”</div>
<div class="a" style="left:1101px;top:338.2px;font-size:13px;line-height:16px;color:#20a050;letter-spacing:1.25px">4、确定后再保存文档重新打开即可。</div>
<div class="a" style="left:1101px;top:374.5px;font-size:13px;line-height:16px;color:#3030c8;letter-spacing:1.42px">因各电脑配置的打印机不同，可能存在效果差异，打印前请先</div>
<div class="a" style="left:1101px;top:394px;font-size:13px;line-height:16px;color:#3030c8;letter-spacing:1.37px"><span style="color:#e02020">预览</span>（快捷键: <span style="color:#e02020">Ctrl + P</span>），发现为2页纸时需要手动调整排版。</div>
<div class="a" style="left:1102px;top:437.5px;font-size:17px;line-height:20px;color:#3030c8;letter-spacing:-0.2px">【<span style="color:#e02020">打印</span>】可指定<span style="color:#e02020">份数</span>，每份题目均<span style="color:#e02020">不相同</span>。</div>
<div class="c" style="left:1084px;top:553px;width:278px;font-size:16.5px;line-height:20px;color:#fff;letter-spacing:0.5px">题型统计</div>
<div class="a" style="left:1172px;top:617px;font-size:16px;line-height:20px;font-weight:bold;color:#111;letter-spacing:0.6px">题目总数：60</div>
<div class="a" style="left:1144px;top:681.5px;font-size:16px;line-height:20px;color:#222;letter-spacing:1.5px">乘法:</div>
<div class="a" style="left:1144px;top:745.5px;font-size:16px;line-height:20px;color:#222;letter-spacing:1.5px">除法:</div>
<div class="a" style="left:1201.5px;top:682px;font-size:16px;line-height:20px;color:#3333bb">31</div>
<div class="a" style="left:1201.5px;top:746px;font-size:16px;line-height:20px;color:#3333bb">29</div>
<div class="a" style="left:1197px;top:678.3px;width:73.8px;height:22.4px;border:2.2px solid #1e8c5e"></div>
<div class="a" style="left:1266.0px;top:696.5px;width:5.5px;height:5.5px;background:#1e8c5e"></div>
<svg style="left:32px;top:1238px" width="660" height="5"><path d="M0 2.5 H658" stroke="#3a9a3a" stroke-width="1.1" stroke-dasharray="7 3.5 1.5 3.5"/></svg>
<div class="a" style="left:218px;top:1262px;font-size:13.5px;line-height:16px;font-weight:bold;color:#111">30以内乘除法混合运算题（共60题） 答案</div>
<svg style="left:0px;top:0px" width="2503" height="1368"><path d="M47.5 1277.4 H96.5" stroke="#e0e0e0" stroke-width="0.9"/><path d="M113.2 1277.4 H162.2" stroke="#e0e0e0" stroke-width="0.9"/><path d="M178.9 1277.4 H227.9" stroke="#e0e0e0" stroke-width="0.9"/><path d="M244.6 1277.4 H293.6" stroke="#e0e0e0" stroke-width="0.9"/><path d="M310.3 1277.4 H359.3" stroke="#e0e0e0" stroke-width="0.9"/><path d="M376.0 1277.4 H425.0" stroke="#e0e0e0" stroke-width="0.9"/><path d="M441.7 1277.4 H490.7" stroke="#e0e0e0" stroke-width="0.9"/><path d="M507.4 1277.4 H556.4" stroke="#e0e0e0" stroke-width="0.9"/><path d="M573.1 1277.4 H622.1" stroke="#e0e0e0" stroke-width="0.9"/><path d="M638.8 1277.4 H687.8" stroke="#e0e0e0" stroke-width="0.9"/><path d="M47.5 1288.2 H96.5" stroke="#e0e0e0" stroke-width="0.9"/><path d="M113.2 1288.2 H162.2" stroke="#e0e0e0" stroke-width="0.9"/><path d="M178.9 1288.2 H227.9" stroke="#e0e0e0" stroke-width="0.9"/><path d="M244.6 1288.2 H293.6" stroke="#e0e0e0" stroke-width="0.9"/><path d="M310.3 1288.2 H359.3" stroke="#e0e0e0" stroke-width="0.9"/><path d="M376.0 1288.2 H425.0" stroke="#e0e0e0" stroke-width="0.9"/><path d="M441.7 1288.2 H490.7" stroke="#e0e0e0" stroke-width="0.9"/><path d="M507.4 1288.2 H556.4" stroke="#e0e0e0" stroke-width="0.9"/><path d="M573.1 1288.2 H622.1" stroke="#e0e0e0" stroke-width="0.9"/><path d="M638.8 1288.2 H687.8" stroke="#e0e0e0" stroke-width="0.9"/><path d="M47.5 1298.7 H96.5" stroke="#e0e0e0" stroke-width="0.9"/><path d="M113.2 1298.7 H162.2" stroke="#e0e0e0" stroke-width="0.9"/><path d="M178.9 1298.7 H227.9" stroke="#e0e0e0" stroke-width="0.9"/><path d="M244.6 1298.7 H293.6" stroke="#e0e0e0" stroke-width="0.9"/><path d="M310.3 1298.7 H359.3" stroke="#e0e0e0" stroke-width="0.9"/><path d="M376.0 1298.7 H425.0" stroke="#e0e0e0" stroke-width="0.9"/><path d="M441.7 1298.7 H490.7" stroke="#e0e0e0" stroke-width="0.9"/><path d="M507.4 1298.7 H556.4" stroke="#e0e0e0" stroke-width="0.9"/><path d="M573.1 1298.7 H622.1" stroke="#e0e0e0" stroke-width="0.9"/><path d="M638.8 1298.7 H687.8" stroke="#e0e0e0" stroke-width="0.9"/><path d="M47.5 1309.3 H96.5" stroke="#e0e0e0" stroke-width="0.9"/><path d="M113.2 1309.3 H162.2" stroke="#e0e0e0" stroke-width="0.9"/><path d="M178.9 1309.3 H227.9" stroke="#e0e0e0" stroke-width="0.9"/><path d="M244.6 1309.3 H293.6" stroke="#e0e0e0" stroke-width="0.9"/><path d="M310.3 1309.3 H359.3" stroke="#e0e0e0" stroke-width="0.9"/><path d="M376.0 1309.3 H425.0" stroke="#e0e0e0" stroke-width="0.9"/><path d="M441.7 1309.3 H490.7" stroke="#e0e0e0" stroke-width="0.9"/><path d="M507.4 1309.3 H556.4" stroke="#e0e0e0" stroke-width="0.9"/><path d="M573.1 1309.3 H622.1" stroke="#e0e0e0" stroke-width="0.9"/><path d="M638.8 1309.3 H687.8" stroke="#e0e0e0" stroke-width="0.9"/><path d="M47.5 1320.3 H96.5" stroke="#e0e0e0" stroke-width="0.9"/><path d="M113.2 1320.3 H162.2" stroke="#e0e0e0" stroke-width="0.9"/><path d="M178.9 1320.3 H227.9" stroke="#e0e0e0" stroke-width="0.9"/><path d="M244.6 1320.3 H293.6" stroke="#e0e0e0" stroke-width="0.9"/><path d="M310.3 1320.3 H359.3" stroke="#e0e0e0" stroke-width="0.9"/><path d="M376.0 1320.3 H425.0" stroke="#e0e0e0" stroke-width="0.9"/><path d="M441.7 1320.3 H490.7" stroke="#e0e0e0" stroke-width="0.9"/><path d="M507.4 1320.3 H556.4" stroke="#e0e0e0" stroke-width="0.9"/><path d="M573.1 1320.3 H622.1" stroke="#e0e0e0" stroke-width="0.9"/><path d="M638.8 1320.3 H687.8" stroke="#e0e0e0" stroke-width="0.9"/><path d="M47.5 1331.2 H96.5" stroke="#e0e0e0" stroke-width="0.9"/><path d="M113.2 1331.2 H162.2" stroke="#e0e0e0" stroke-width="0.9"/><path d="M178.9 1331.2 H227.9" stroke="#e0e0e0" stroke-width="0.9"/><path d="M244.6 1331.2 H293.6" stroke="#e0e0e0" stroke-width="0.9"/><path d="M310.3 1331.2 H359.3" stroke="#e0e0e0" stroke-width="0.9"/><path d="M376.0 1331.2 H425.0" stroke="#e0e0e0" stroke-width="0.9"/><path d="M441.7 1331.2 H490.7" stroke="#e0e0e0" stroke-width="0.9"/><path d="M507.4 1331.2 H556.4" stroke="#e0e0e0" stroke-width="0.9"/><path d="M573.1 1331.2 H622.1" stroke="#e0e0e0" stroke-width="0.9"/><path d="M638.8 1331.2 H687.8" stroke="#e0e0e0" stroke-width="0.9"/><path d="M47.5 1342.0 H96.5" stroke="#e0e0e0" stroke-width="0.9"/><path d="M113.2 1342.0 H162.2" stroke="#e0e0e0" stroke-width="0.9"/><path d="M178.9 1342.0 H227.9" stroke="#e0e0e0" stroke-width="0.9"/><path d="M244.6 1342.0 H293.6" stroke="#e0e0e0" stroke-width="0.9"/><path d="M310.3 1342.0 H359.3" stroke="#e0e0e0" stroke-width="0.9"/><path d="M376.0 1342.0 H425.0" stroke="#e0e0e0" stroke-width="0.9"/><path d="M441.7 1342.0 H490.7" stroke="#e0e0e0" stroke-width="0.9"/><path d="M507.4 1342.0 H556.4" stroke="#e0e0e0" stroke-width="0.9"/><path d="M573.1 1342.0 H622.1" stroke="#e0e0e0" stroke-width="0.9"/><path d="M638.8 1342.0 H687.8" stroke="#e0e0e0" stroke-width="0.9"/><path d="M688.5 1277 V1342" stroke="#e3e3e3" stroke-width="0.9"/></svg>
<div class="a" style="left:38.0px;top:1278.6px;font-size:10.5px;line-height:10px;color:#6a9a3a;transform:scaleX(0.72);transform-origin:left">1:</div>
<div class="a" style="left:47.5px;top:1278.6px;font-size:11px;line-height:10px;color:#5a5a5a;transform:scaleX(0.75);transform-origin:left">19×13=247</div>
<div class="a" style="left:103.7px;top:1278.6px;font-size:10.5px;line-height:10px;color:#6a9a3a;transform:scaleX(0.72);transform-origin:left">2:</div>
<div class="a" style="left:113.2px;top:1278.6px;font-size:11px;line-height:10px;color:#5a5a5a;transform:scaleX(0.75);transform-origin:left">9×18=162</div>
<div class="a" style="left:169.4px;top:1278.6px;font-size:10.5px;line-height:10px;color:#6a9a3a;transform:scaleX(0.72);transform-origin:left">3:</div>
<div class="a" style="left:178.9px;top:1278.6px;font-size:11px;line-height:10px;color:#5a5a5a;transform:scaleX(0.75);transform-origin:left">15÷5=3</div>
<div class="a" style="left:235.1px;top:1278.6px;font-size:10.5px;line-height:10px;color:#6a9a3a;transform:scaleX(0.72);transform-origin:left">4:</div>
<div class="a" style="left:244.6px;top:1278.6px;font-size:11px;line-height:10px;color:#5a5a5a;transform:scaleX(0.75);transform-origin:left">23×28=644</div>
<div class="a" style="left:300.8px;top:1278.6px;font-size:10.5px;line-height:10px;color:#6a9a3a;transform:scaleX(0.72);transform-origin:left">5:</div>
<div class="a" style="left:310.3px;top:1278.6px;font-size:11px;line-height:10px;color:#5a5a5a;transform:scaleX(0.75);transform-origin:left">12×28=336</div>
<div class="a" style="left:366.5px;top:1278.6px;font-size:10.5px;line-height:10px;color:#6a9a3a;transform:scaleX(0.72);transform-origin:left">6:</div>
<div class="a" style="left:376.0px;top:1278.6px;font-size:11px;line-height:10px;color:#5a5a5a;transform:scaleX(0.75);transform-origin:left">5÷5=1</div>
<div class="a" style="left:432.2px;top:1278.6px;font-size:10.5px;line-height:10px;color:#6a9a3a;transform:scaleX(0.72);transform-origin:left">7:</div>
<div class="a" style="left:441.7px;top:1278.6px;font-size:11px;line-height:10px;color:#5a5a5a;transform:scaleX(0.75);transform-origin:left">6×25=150</div>
<div class="a" style="left:497.9px;top:1278.6px;font-size:10.5px;line-height:10px;color:#6a9a3a;transform:scaleX(0.72);transform-origin:left">8:</div>
<div class="a" style="left:507.4px;top:1278.6px;font-size:11px;line-height:10px;color:#5a5a5a;transform:scaleX(0.75);transform-origin:left">48÷6=8</div>
<div class="a" style="left:563.6px;top:1278.6px;font-size:10.5px;line-height:10px;color:#6a9a3a;transform:scaleX(0.72);transform-origin:left">9:</div>
<div class="a" style="left:573.1px;top:1278.6px;font-size:11px;line-height:10px;color:#5a5a5a;transform:scaleX(0.75);transform-origin:left">232÷8=29</div>
<div class="a" style="left:626.3px;top:1278.6px;font-size:10.5px;line-height:10px;color:#6a9a3a;transform:scaleX(0.72);transform-origin:left">10:</div>
<div class="a" style="left:638.8px;top:1278.6px;font-size:11px;line-height:10px;color:#5a5a5a;transform:scaleX(0.75);transform-origin:left">126÷6=21</div>
<div class="a" style="left:35.0px;top:1289.4px;font-size:10.5px;line-height:10px;color:#6a9a3a;transform:scaleX(0.72);transform-origin:left">11:</div>
<div class="a" style="left:47.5px;top:1289.4px;font-size:11px;line-height:10px;color:#5a5a5a;transform:scaleX(0.75);transform-origin:left">70÷7=10</div>
<div class="a" style="left:100.7px;top:1289.4px;font-size:10.5px;line-height:10px;color:#6a9a3a;transform:scaleX(0.72);transform-origin:left">12:</div>
<div class="a" style="left:113.2px;top:1289.4px;font-size:11px;line-height:10px;color:#5a5a5a;transform:scaleX(0.75);transform-origin:left">72÷4=18</div>
<div class="a" style="left:166.4px;top:1289.4px;font-size:10.5px;line-height:10px;color:#6a9a3a;transform:scaleX(0.72);transform-origin:left">13:</div>
<div class="a" style="left:178.9px;top:1289.4px;font-size:11px;line-height:10px;color:#5a5a5a;transform:scaleX(0.75);transform-origin:left">114÷6=19</div>
<div class="a" style="left:232.1px;top:1289.4px;font-size:10.5px;line-height:10px;color:#6a9a3a;transform:scaleX(0.72);transform-origin:left">14:</div>
<div class="a" style="left:244.6px;top:1289.4px;font-size:11px;line-height:10px;color:#5a5a5a;transform:scaleX(0.75);transform-origin:left">19×5=95</div>
<div class="a" style="left:297.8px;top:1289.4px;font-size:10.5px;line-height:10px;color:#6a9a3a;transform:scaleX(0.72);transform-origin:left">15:</div>
<div class="a" style="left:310.3px;top:1289.4px;font-size:11px;line-height:10px;color:#5a5a5a;transform:scaleX(0.75);transform-origin:left">3×28=84</div>
<div class="a" style="left:363.5px;top:1289.4px;font-size:10.5px;line-height:10px;color:#6a9a3a;transform:scaleX(0.72);transform-origin:left">16:</div>
<div class="a" style="left:376.0px;top:1289.4px;font-size:11px;line-height:10px;color:#5a5a5a;transform:scaleX(0.75);transform-origin:left">128÷8=16</div>
<div class="a" style="left:429.2px;top:1289.4px;font-size:10.5px;line-height:10px;color:#6a9a3a;transform:scaleX(0.72);transform-origin:left">17:</div>
<div class="a" style="left:441.7px;top:1289.4px;font-size:11px;line-height:10px;color:#5a5a5a;transform:scaleX(0.75);transform-origin:left">7×13=91</div>
<div class="a" style="left:494.9px;top:1289.4px;font-size:10.5px;line-height:10px;color:#6a9a3a;transform:scaleX(0.72);transform-origin:left">18:</div>
<div class="a" style="left:507.4px;top:1289.4px;font-size:11px;line-height:10px;color:#5a5a5a;transform:scaleX(0.75);transform-origin:left">88÷8=11</div>
<div class="a" style="left:560.6px;top:1289.4px;font-size:10.5px;line-height:10px;color:#6a9a3a;transform:scaleX(0.72);transform-origin:left">19:</div>
<div class="a" style="left:573.1px;top:1289.4px;font-size:11px;line-height:10px;color:#5a5a5a;transform:scaleX(0.75);transform-origin:left">7×16=112</div>
<div class="a" style="left:626.3px;top:1289.4px;font-size:10.5px;line-height:10px;color:#6a9a3a;transform:scaleX(0.72);transform-origin:left">20:</div>
<div class="a" style="left:638.8px;top:1289.4px;font-size:11px;line-height:10px;color:#5a5a5a;transform:scaleX(0.75);transform-origin:left">29×23=667</div>
<div class="a" style="left:35.0px;top:1299.9px;font-size:10.5px;line-height:10px;color:#6a9a3a;transform:scaleX(0.72);transform-origin:left">21:</div>
<div class="a" style="left:47.5px;top:1299.9px;font-size:11px;line-height:10px;color:#5a5a5a;transform:scaleX(0.75);transform-origin:left">16÷2=8</div>
<div class="a" style="left:100.7px;top:1299.9px;font-size:10.5px;line-height:10px;color:#6a9a3a;transform:scaleX(0.72);transform-origin:left">22:</div>
<div class="a" style="left:113.2px;top:1299.9px;font-size:11px;line-height:10px;color:#5a5a5a;transform:scaleX(0.75);transform-origin:left">20÷4=5</div>
<div class="a" style="left:166.4px;top:1299.9px;font-size:10.5px;line-height:10px;color:#6a9a3a;transform:scaleX(0.72);transform-origin:left">23:</div>
<div class="a" style="left:178.9px;top:1299.9px;font-size:11px;line-height:10px;color:#5a5a5a;transform:scaleX(0.75);transform-origin:left">17×16=272</div>
<div class="a" style="left:232.1px;top:1299.9px;font-size:10.5px;line-height:10px;color:#6a9a3a;transform:scaleX(0.72);transform-origin:left">24:</div>
<div class="a" style="left:244.6px;top:1299.9px;font-size:11px;line-height:10px;color:#5a5a5a;transform:scaleX(0.75);transform-origin:left">80÷5=16</div>
<div class="a" style="left:297.8px;top:1299.9px;font-size:10.5px;line-height:10px;color:#6a9a3a;transform:scaleX(0.72);transform-origin:left">25:</div>
<div class="a" style="left:310.3px;top:1299.9px;font-size:11px;line-height:10px;color:#5a5a5a;transform:scaleX(0.75);transform-origin:left">144÷8=18</div>
<div class="a" style="left:363.5px;top:1299.9px;font-size:10.5px;line-height:10px;color:#6a9a3a;transform:scaleX(0.72);transform-origin:left">26:</div>
<div class="a" style="left:376.0px;top:1299.9px;font-size:11px;line-height:10px;color:#5a5a5a;transform:scaleX(0.75);transform-origin:left">81÷9=9</div>
<div class="a" style="left:429.2px;top:1299.9px;font-size:10.5px;line-height:10px;color:#6a9a3a;transform:scaleX(0.72);transform-origin:left">27:</div>
<div class="a" style="left:441.7px;top:1299.9px;font-size:11px;line-height:10px;color:#5a5a5a;transform:scaleX(0.75);transform-origin:left">290÷10=29</div>
<div class="a" style="left:494.9px;top:1299.9px;font-size:10.5px;line-height:10px;color:#6a9a3a;transform:scaleX(0.72);transform-origin:left">28:</div>
<div class="a" style="left:507.4px;top:1299.9px;font-size:11px;line-height:10px;color:#5a5a5a;transform:scaleX(0.75);transform-origin:left">161÷7=23</div>
<div class="a" style="left:560.6px;top:1299.9px;font-size:10.5px;line-height:10px;color:#6a9a3a;transform:scaleX(0.72);transform-origin:left">29:</div>
<div class="a" style="left:573.1px;top:1299.9px;font-size:11px;line-height:10px;color:#5a5a5a;transform:scaleX(0.75);transform-origin:left">29×14=406</div>
<div class="a" style="left:626.3px;top:1299.9px;font-size:10.5px;line-height:10px;color:#6a9a3a;transform:scaleX(0.72);transform-origin:left">30:</div>
<div class="a" style="left:638.8px;top:1299.9px;font-size:11px;line-height:10px;color:#5a5a5a;transform:scaleX(0.75);transform-origin:left">29×10=290</div>
<div class="a" style="left:35.0px;top:1310.5px;font-size:10.5px;line-height:10px;color:#6a9a3a;transform:scaleX(0.72);transform-origin:left">31:</div>
<div class="a" style="left:47.5px;top:1310.5px;font-size:11px;line-height:10px;color:#5a5a5a;transform:scaleX(0.75);transform-origin:left">22×4=88</div>
<div class="a" style="left:100.7px;top:1310.5px;font-size:10.5px;line-height:10px;color:#6a9a3a;transform:scaleX(0.72);transform-origin:left">32:</div>
<div class="a" style="left:113.2px;top:1310.5px;font-size:11px;line-height:10px;color:#5a5a5a;transform:scaleX(0.75);transform-origin:left">7÷7=1</div>
<div class="a" style="left:166.4px;top:1310.5px;font-size:10.5px;line-height:10px;color:#6a9a3a;transform:scaleX(0.72);transform-origin:left">33:</div>
<div class="a" style="left:178.9px;top:1310.5px;font-size:11px;line-height:10px;color:#5a5a5a;transform:scaleX(0.75);transform-origin:left">17×3=51</div>
<div class="a" style="left:232.1px;top:1310.5px;font-size:10.5px;line-height:10px;color:#6a9a3a;transform:scaleX(0.72);transform-origin:left">34:</div>
<div class="a" style="left:244.6px;top:1310.5px;font-size:11px;line-height:10px;color:#5a5a5a;transform:scaleX(0.75);transform-origin:left">19×4=76</div>
<div class="a" style="left:297.8px;top:1310.5px;font-size:10.5px;line-height:10px;color:#6a9a3a;transform:scaleX(0.72);transform-origin:left">35:</div>
<div class="a" style="left:310.3px;top:1310.5px;font-size:11px;line-height:10px;color:#5a5a5a;transform:scaleX(0.75);transform-origin:left">84÷7=12</div>
<div class="a" style="left:363.5px;top:1310.5px;font-size:10.5px;line-height:10px;color:#6a9a3a;transform:scaleX(0.72);transform-origin:left">36:</div>
<div class="a" style="left:376.0px;top:1310.5px;font-size:11px;line-height:10px;color:#5a5a5a;transform:scaleX(0.75);transform-origin:left">28×17=476</div>
<div class="a" style="left:429.2px;top:1310.5px;font-size:10.5px;line-height:10px;color:#6a9a3a;transform:scaleX(0.72);transform-origin:left">37:</div>
<div class="a" style="left:441.7px;top:1310.5px;font-size:11px;line-height:10px;color:#5a5a5a;transform:scaleX(0.75);transform-origin:left">27×11=297</div>
<div class="a" style="left:494.9px;top:1310.5px;font-size:10.5px;line-height:10px;color:#6a9a3a;transform:scaleX(0.72);transform-origin:left">38:</div>
<div class="a" style="left:507.4px;top:1310.5px;font-size:11px;line-height:10px;color:#5a5a5a;transform:scaleX(0.75);transform-origin:left">198÷18=11</div>
<div class="a" style="left:560.6px;top:1310.5px;font-size:10.5px;line-height:10px;color:#6a9a3a;transform:scaleX(0.72);transform-origin:left">39:</div>
<div class="a" style="left:573.1px;top:1310.5px;font-size:11px;line-height:10px;color:#5a5a5a;transform:scaleX(0.75);transform-origin:left">20×27=540</div>
<div class="a" style="left:626.3px;top:1310.5px;font-size:10.5px;line-height:10px;color:#6a9a3a;transform:scaleX(0.72);transform-origin:left">40:</div>
<div class="a" style="left:638.8px;top:1310.5px;font-size:11px;line-height:10px;color:#5a5a5a;transform:scaleX(0.75);transform-origin:left">5×14=70</div>
<div class="a" style="left:35.0px;top:1321.5px;font-size:10.5px;line-height:10px;color:#6a9a3a;transform:scaleX(0.72);transform-origin:left">41:</div>
<div class="a" style="left:47.5px;top:1321.5px;font-size:11px;line-height:10px;color:#5a5a5a;transform:scaleX(0.75);transform-origin:left">189÷7=27</div>
<div class="a" style="left:100.7px;top:1321.5px;font-size:10.5px;line-height:10px;color:#6a9a3a;transform:scaleX(0.72);transform-origin:left">42:</div>
<div class="a" style="left:113.2px;top:1321.5px;font-size:11px;line-height:10px;color:#5a5a5a;transform:scaleX(0.75);transform-origin:left">16×23=368</div>
<div class="a" style="left:166.4px;top:1321.5px;font-size:10.5px;line-height:10px;color:#6a9a3a;transform:scaleX(0.72);transform-origin:left">43:</div>
<div class="a" style="left:178.9px;top:1321.5px;font-size:11px;line-height:10px;color:#5a5a5a;transform:scaleX(0.75);transform-origin:left">19×13=247</div>
<div class="a" style="left:232.1px;top:1321.5px;font-size:10.5px;line-height:10px;color:#6a9a3a;transform:scaleX(0.72);transform-origin:left">44:</div>
<div class="a" style="left:244.6px;top:1321.5px;font-size:11px;line-height:10px;color:#5a5a5a;transform:scaleX(0.75);transform-origin:left">20×13=260</div>
<div class="a" style="left:297.8px;top:1321.5px;font-size:10.5px;line-height:10px;color:#6a9a3a;transform:scaleX(0.72);transform-origin:left">45:</div>
<div class="a" style="left:310.3px;top:1321.5px;font-size:11px;line-height:10px;color:#5a5a5a;transform:scaleX(0.75);transform-origin:left">17×18=306</div>
<div class="a" style="left:363.5px;top:1321.5px;font-size:10.5px;line-height:10px;color:#6a9a3a;transform:scaleX(0.72);transform-origin:left">46:</div>
<div class="a" style="left:376.0px;top:1321.5px;font-size:11px;line-height:10px;color:#5a5a5a;transform:scaleX(0.75);transform-origin:left">26×18=468</div>
<div class="a" style="left:429.2px;top:1321.5px;font-size:10.5px;line-height:10px;color:#6a9a3a;transform:scaleX(0.72);transform-origin:left">47:</div>
<div class="a" style="left:441.7px;top:1321.5px;font-size:11px;line-height:10px;color:#5a5a5a;transform:scaleX(0.75);transform-origin:left">4×18=72</div>
<div class="a" style="left:494.9px;top:1321.5px;font-size:10.5px;line-height:10px;color:#6a9a3a;transform:scaleX(0.72);transform-origin:left">48:</div>
<div class="a" style="left:507.4px;top:1321.5px;font-size:11px;line-height:10px;color:#5a5a5a;transform:scaleX(0.75);transform-origin:left">8×17=136</div>
<div class="a" style="left:560.6px;top:1321.5px;font-size:10.5px;line-height:10px;color:#6a9a3a;transform:scaleX(0.72);transform-origin:left">49:</div>
<div class="a" style="left:573.1px;top:1321.5px;font-size:11px;line-height:10px;color:#5a5a5a;transform:scaleX(0.75);transform-origin:left">330÷11=30</div>
<div class="a" style="left:626.3px;top:1321.5px;font-size:10.5px;line-height:10px;color:#6a9a3a;transform:scaleX(0.72);transform-origin:left">50:</div>
<div class="a" style="left:638.8px;top:1321.5px;font-size:11px;line-height:10px;color:#5a5a5a;transform:scaleX(0.75);transform-origin:left">16×19=304</div>
<div class="a" style="left:35.0px;top:1332.4px;font-size:10.5px;line-height:10px;color:#6a9a3a;transform:scaleX(0.72);transform-origin:left">51:</div>
<div class="a" style="left:47.5px;top:1332.4px;font-size:11px;line-height:10px;color:#5a5a5a;transform:scaleX(0.75);transform-origin:left">77÷11=7</div>
<div class="a" style="left:100.7px;top:1332.4px;font-size:10.5px;line-height:10px;color:#6a9a3a;transform:scaleX(0.72);transform-origin:left">52:</div>
<div class="a" style="left:113.2px;top:1332.4px;font-size:11px;line-height:10px;color:#5a5a5a;transform:scaleX(0.75);transform-origin:left">27×20=540</div>
<div class="a" style="left:166.4px;top:1332.4px;font-size:10.5px;line-height:10px;color:#6a9a3a;transform:scaleX(0.72);transform-origin:left">53:</div>
<div class="a" style="left:178.9px;top:1332.4px;font-size:11px;line-height:10px;color:#5a5a5a;transform:scaleX(0.75);transform-origin:left">22×19=418</div>
<div class="a" style="left:232.1px;top:1332.4px;font-size:10.5px;line-height:10px;color:#6a9a3a;transform:scaleX(0.72);transform-origin:left">54:</div>
<div class="a" style="left:244.6px;top:1332.4px;font-size:11px;line-height:10px;color:#5a5a5a;transform:scaleX(0.75);transform-origin:left">85÷5=17</div>
<div class="a" style="left:297.8px;top:1332.4px;font-size:10.5px;line-height:10px;color:#6a9a3a;transform:scaleX(0.72);transform-origin:left">55:</div>
<div class="a" style="left:310.3px;top:1332.4px;font-size:11px;line-height:10px;color:#5a5a5a;transform:scaleX(0.75);transform-origin:left">6×27=162</div>
<div class="a" style="left:363.5px;top:1332.4px;font-size:10.5px;line-height:10px;color:#6a9a3a;transform:scaleX(0.72);transform-origin:left">56:</div>
<div class="a" style="left:376.0px;top:1332.4px;font-size:11px;line-height:10px;color:#5a5a5a;transform:scaleX(0.75);transform-origin:left">52÷26=2</div>
<div class="a" style="left:429.2px;top:1332.4px;font-size:10.5px;line-height:10px;color:#6a9a3a;transform:scaleX(0.72);transform-origin:left">57:</div>
<div class="a" style="left:441.7px;top:1332.4px;font-size:11px;line-height:10px;color:#5a5a5a;transform:scaleX(0.75);transform-origin:left">15÷15=1</div>
<div class="a" style="left:494.9px;top:1332.4px;font-size:10.5px;line-height:10px;color:#6a9a3a;transform:scaleX(0.72);transform-origin:left">58:</div>
<div class="a" style="left:507.4px;top:1332.4px;font-size:11px;line-height:10px;color:#5a5a5a;transform:scaleX(0.75);transform-origin:left">130÷10=13</div>
<div class="a" style="left:560.6px;top:1332.4px;font-size:10.5px;line-height:10px;color:#6a9a3a;transform:scaleX(0.72);transform-origin:left">59:</div>
<div class="a" style="left:573.1px;top:1332.4px;font-size:11px;line-height:10px;color:#5a5a5a;transform:scaleX(0.75);transform-origin:left">27÷9=3</div>
<div class="a" style="left:626.3px;top:1332.4px;font-size:10.5px;line-height:10px;color:#6a9a3a;transform:scaleX(0.72);transform-origin:left">60:</div>
<div class="a" style="left:638.8px;top:1332.4px;font-size:11px;line-height:10px;color:#5a5a5a;transform:scaleX(0.75);transform-origin:left">16÷4=4</div>
<svg style="left:0px;top:0px" width="2503" height="1368"><path d="M1106.2 1290.0 H1177.2" stroke="#e3e3e3" stroke-width="1"/><path d="M1106.2 1302.2 H1177.2" stroke="#e3e3e3" stroke-width="1"/><path d="M1106.2 1314.5 H1177.2" stroke="#e3e3e3" stroke-width="1"/><path d="M1106.2 1326.6 H1177.2" stroke="#e3e3e3" stroke-width="1"/><path d="M1106.2 1338.5 H1177.2" stroke="#e3e3e3" stroke-width="1"/><path d="M1199.4 1290.0 H1270.4" stroke="#e3e3e3" stroke-width="1"/><path d="M1199.4 1302.2 H1270.4" stroke="#e3e3e3" stroke-width="1"/><path d="M1199.4 1314.5 H1270.4" stroke="#e3e3e3" stroke-width="1"/><path d="M1199.4 1326.6 H1270.4" stroke="#e3e3e3" stroke-width="1"/><path d="M1199.4 1338.5 H1270.4" stroke="#e3e3e3" stroke-width="1"/><path d="M1292.6 1290.0 H1363.6" stroke="#e3e3e3" stroke-width="1"/><path d="M1292.6 1302.2 H1363.6" stroke="#e3e3e3" stroke-width="1"/><path d="M1292.6 1314.5 H1363.6" stroke="#e3e3e3" stroke-width="1"/><path d="M1292.6 1326.6 H1363.6" stroke="#e3e3e3" stroke-width="1"/><path d="M1292.6 1338.5 H1363.6" stroke="#e3e3e3" stroke-width="1"/><path d="M1385.8 1290.0 H1456.8" stroke="#e3e3e3" stroke-width="1"/><path d="M1385.8 1302.2 H1456.8" stroke="#e3e3e3" stroke-width="1"/><path d="M1385.8 1314.5 H1456.8" stroke="#e3e3e3" stroke-width="1"/><path d="M1385.8 1326.6 H1456.8" stroke="#e3e3e3" stroke-width="1"/><path d="M1385.8 1338.5 H1456.8" stroke="#e3e3e3" stroke-width="1"/><path d="M1479.0 1290.0 H1550.0" stroke="#e3e3e3" stroke-width="1"/><path d="M1479.0 1302.2 H1550.0" stroke="#e3e3e3" stroke-width="1"/><path d="M1479.0 1314.5 H1550.0" stroke="#e3e3e3" stroke-width="1"/><path d="M1479.0 1326.6 H1550.0" stroke="#e3e3e3" stroke-width="1"/><path d="M1479.0 1338.5 H1550.0" stroke="#e3e3e3" stroke-width="1"/><path d="M1572.2 1290.0 H1643.2" stroke="#e3e3e3" stroke-width="1"/><path d="M1572.2 1302.2 H1643.2" stroke="#e3e3e3" stroke-width="1"/><path d="M1572.2 1314.5 H1643.2" stroke="#e3e3e3" stroke-width="1"/><path d="M1572.2 1326.6 H1643.2" stroke="#e3e3e3" stroke-width="1"/><path d="M1572.2 1338.5 H1643.2" stroke="#e3e3e3" stroke-width="1"/><path d="M1665.4 1290.0 H1736.4" stroke="#e3e3e3" stroke-width="1"/><path d="M1665.4 1302.2 H1736.4" stroke="#e3e3e3" stroke-width="1"/><path d="M1665.4 1314.5 H1736.4" stroke="#e3e3e3" stroke-width="1"/><path d="M1665.4 1326.6 H1736.4" stroke="#e3e3e3" stroke-width="1"/><path d="M1665.4 1338.5 H1736.4" stroke="#e3e3e3" stroke-width="1"/><path d="M1758.6 1290.0 H1829.6" stroke="#e3e3e3" stroke-width="1"/><path d="M1758.6 1302.2 H1829.6" stroke="#e3e3e3" stroke-width="1"/><path d="M1758.6 1314.5 H1829.6" stroke="#e3e3e3" stroke-width="1"/><path d="M1758.6 1326.6 H1829.6" stroke="#e3e3e3" stroke-width="1"/><path d="M1758.6 1338.5 H1829.6" stroke="#e3e3e3" stroke-width="1"/><path d="M1851.8 1290.0 H1922.8" stroke="#e3e3e3" stroke-width="1"/><path d="M1851.8 1302.2 H1922.8" stroke="#e3e3e3" stroke-width="1"/><path d="M1851.8 1314.5 H1922.8" stroke="#e3e3e3" stroke-width="1"/><path d="M1851.8 1326.6 H1922.8" stroke="#e3e3e3" stroke-width="1"/><path d="M1851.8 1338.5 H1922.8" stroke="#e3e3e3" stroke-width="1"/><path d="M1945.0 1290.0 H2016.0" stroke="#e3e3e3" stroke-width="1"/><path d="M1945.0 1302.2 H2016.0" stroke="#e3e3e3" stroke-width="1"/><path d="M1945.0 1314.5 H2016.0" stroke="#e3e3e3" stroke-width="1"/><path d="M1945.0 1326.6 H2016.0" stroke="#e3e3e3" stroke-width="1"/><path d="M1945.0 1338.5 H2016.0" stroke="#e3e3e3" stroke-width="1"/></svg>
<div class="a" style="left:1084.2px;top:1278.5px;width:20px;text-align:right;font-size:11.5px;line-height:12px;color:#5a8a3a;letter-spacing:0.5px">1:</div>
<div class="a" style="left:1108.2px;top:1278.5px;font-size:11.5px;line-height:12px;color:#222">19×13=247</div>
<div class="a" style="left:1177.4px;top:1278.5px;width:20px;text-align:right;font-size:11.5px;line-height:12px;color:#5a8a3a;letter-spacing:0.5px">2:</div>
<div class="a" style="left:1201.4px;top:1278.5px;font-size:11.5px;line-height:12px;color:#222">9×18=162</div>
<div class="a" style="left:1270.6px;top:1278.5px;width:20px;text-align:right;font-size:11.5px;line-height:12px;color:#5a8a3a;letter-spacing:0.5px">3:</div>
<div class="a" style="left:1294.6px;top:1278.5px;font-size:11.5px;line-height:12px;color:#222">15÷5=3</div>
<div class="a" style="left:1363.8px;top:1278.5px;width:20px;text-align:right;font-size:11.5px;line-height:12px;color:#5a8a3a;letter-spacing:0.5px">4:</div>
<div class="a" style="left:1387.8px;top:1278.5px;font-size:11.5px;line-height:12px;color:#222">23×28=644</div>
<div class="a" style="left:1457.0px;top:1278.5px;width:20px;text-align:right;font-size:11.5px;line-height:12px;color:#5a8a3a;letter-spacing:0.5px">5:</div>
<div class="a" style="left:1481.0px;top:1278.5px;font-size:11.5px;line-height:12px;color:#222">12×28=336</div>
<div class="a" style="left:1550.2px;top:1278.5px;width:20px;text-align:right;font-size:11.5px;line-height:12px;color:#5a8a3a;letter-spacing:0.5px">6:</div>
<div class="a" style="left:1574.2px;top:1278.5px;font-size:11.5px;line-height:12px;color:#222">5÷5=1</div>
<div class="a" style="left:1643.4px;top:1278.5px;width:20px;text-align:right;font-size:11.5px;line-height:12px;color:#5a8a3a;letter-spacing:0.5px">7:</div>
<div class="a" style="left:1667.4px;top:1278.5px;font-size:11.5px;line-height:12px;color:#222">6×25=150</div>
<div class="a" style="left:1736.6px;top:1278.5px;width:20px;text-align:right;font-size:11.5px;line-height:12px;color:#5a8a3a;letter-spacing:0.5px">8:</div>
<div class="a" style="left:1760.6px;top:1278.5px;font-size:11.5px;line-height:12px;color:#222">48÷6=8</div>
<div class="a" style="left:1829.8px;top:1278.5px;width:20px;text-align:right;font-size:11.5px;line-height:12px;color:#5a8a3a;letter-spacing:0.5px">9:</div>
<div class="a" style="left:1853.8px;top:1278.5px;font-size:11.5px;line-height:12px;color:#222">232÷8=29</div>
<div class="a" style="left:1923.0px;top:1278.5px;width:20px;text-align:right;font-size:11.5px;line-height:12px;color:#5a8a3a;letter-spacing:0.5px">10:</div>
<div class="a" style="left:1947.0px;top:1278.5px;font-size:11.5px;line-height:12px;color:#222">126÷6=21</div>
<div class="a" style="left:1084.2px;top:1290.7px;width:20px;text-align:right;font-size:11.5px;line-height:12px;color:#5a8a3a;letter-spacing:0.5px">11:</div>
<div class="a" style="left:1108.2px;top:1290.7px;font-size:11.5px;line-height:12px;color:#222">70÷7=10</div>
<div class="a" style="left:1177.4px;top:1290.7px;width:20px;text-align:right;font-size:11.5px;line-height:12px;color:#5a8a3a;letter-spacing:0.5px">12:</div>
<div class="a" style="left:1201.4px;top:1290.7px;font-size:11.5px;line-height:12px;color:#222">72÷4=18</div>
<div class="a" style="left:1270.6px;top:1290.7px;width:20px;text-align:right;font-size:11.5px;line-height:12px;color:#5a8a3a;letter-spacing:0.5px">13:</div>
<div class="a" style="left:1294.6px;top:1290.7px;font-size:11.5px;line-height:12px;color:#222">114÷6=19</div>
<div class="a" style="left:1363.8px;top:1290.7px;width:20px;text-align:right;font-size:11.5px;line-height:12px;color:#5a8a3a;letter-spacing:0.5px">14:</div>
<div class="a" style="left:1387.8px;top:1290.7px;font-size:11.5px;line-height:12px;color:#222">19×5=95</div>
<div class="a" style="left:1457.0px;top:1290.7px;width:20px;text-align:right;font-size:11.5px;line-height:12px;color:#5a8a3a;letter-spacing:0.5px">15:</div>
<div class="a" style="left:1481.0px;top:1290.7px;font-size:11.5px;line-height:12px;color:#222">3×28=84</div>
<div class="a" style="left:1550.2px;top:1290.7px;width:20px;text-align:right;font-size:11.5px;line-height:12px;color:#5a8a3a;letter-spacing:0.5px">16:</div>
<div class="a" style="left:1574.2px;top:1290.7px;font-size:11.5px;line-height:12px;color:#222">128÷8=16</div>
<div class="a" style="left:1643.4px;top:1290.7px;width:20px;text-align:right;font-size:11.5px;line-height:12px;color:#5a8a3a;letter-spacing:0.5px">17:</div>
<div class="a" style="left:1667.4px;top:1290.7px;font-size:11.5px;line-height:12px;color:#222">7×13=91</div>
<div class="a" style="left:1736.6px;top:1290.7px;width:20px;text-align:right;font-size:11.5px;line-height:12px;color:#5a8a3a;letter-spacing:0.5px">18:</div>
<div class="a" style="left:1760.6px;top:1290.7px;font-size:11.5px;line-height:12px;color:#222">88÷8=11</div>
<div class="a" style="left:1829.8px;top:1290.7px;width:20px;text-align:right;font-size:11.5px;line-height:12px;color:#5a8a3a;letter-spacing:0.5px">19:</div>
<div class="a" style="left:1853.8px;top:1290.7px;font-size:11.5px;line-height:12px;color:#222">7×16=112</div>
<div class="a" style="left:1923.0px;top:1290.7px;width:20px;text-align:right;font-size:11.5px;line-height:12px;color:#5a8a3a;letter-spacing:0.5px">20:</div>
<div class="a" style="left:1947.0px;top:1290.7px;font-size:11.5px;line-height:12px;color:#222">29×23=667</div>
<div class="a" style="left:1084.2px;top:1302.8px;width:20px;text-align:right;font-size:11.5px;line-height:12px;color:#5a8a3a;letter-spacing:0.5px">21:</div>
<div class="a" style="left:1108.2px;top:1302.8px;font-size:11.5px;line-height:12px;color:#222">16÷2=8</div>
<div class="a" style="left:1177.4px;top:1302.8px;width:20px;text-align:right;font-size:11.5px;line-height:12px;color:#5a8a3a;letter-spacing:0.5px">22:</div>
<div class="a" style="left:1201.4px;top:1302.8px;font-size:11.5px;line-height:12px;color:#222">20÷4=5</div>
<div class="a" style="left:1270.6px;top:1302.8px;width:20px;text-align:right;font-size:11.5px;line-height:12px;color:#5a8a3a;letter-spacing:0.5px">23:</div>
<div class="a" style="left:1294.6px;top:1302.8px;font-size:11.5px;line-height:12px;color:#222">17×16=272</div>
<div class="a" style="left:1363.8px;top:1302.8px;width:20px;text-align:right;font-size:11.5px;line-height:12px;color:#5a8a3a;letter-spacing:0.5px">24:</div>
<div class="a" style="left:1387.8px;top:1302.8px;font-size:11.5px;line-height:12px;color:#222">80÷5=16</div>
<div class="a" style="left:1457.0px;top:1302.8px;width:20px;text-align:right;font-size:11.5px;line-height:12px;color:#5a8a3a;letter-spacing:0.5px">25:</div>
<div class="a" style="left:1481.0px;top:1302.8px;font-size:11.5px;line-height:12px;color:#222">144÷8=18</div>
<div class="a" style="left:1550.2px;top:1302.8px;width:20px;text-align:right;font-size:11.5px;line-height:12px;color:#5a8a3a;letter-spacing:0.5px">26:</div>
<div class="a" style="left:1574.2px;top:1302.8px;font-size:11.5px;line-height:12px;color:#222">81÷9=9</div>
<div class="a" style="left:1643.4px;top:1302.8px;width:20px;text-align:right;font-size:11.5px;line-height:12px;color:#5a8a3a;letter-spacing:0.5px">27:</div>
<div class="a" style="left:1667.4px;top:1302.8px;font-size:11.5px;line-height:12px;color:#222">290÷10=29</div>
<div class="a" style="left:1736.6px;top:1302.8px;width:20px;text-align:right;font-size:11.5px;line-height:12px;color:#5a8a3a;letter-spacing:0.5px">28:</div>
<div class="a" style="left:1760.6px;top:1302.8px;font-size:11.5px;line-height:12px;color:#222">161÷7=23</div>
<div class="a" style="left:1829.8px;top:1302.8px;width:20px;text-align:right;font-size:11.5px;line-height:12px;color:#5a8a3a;letter-spacing:0.5px">29:</div>
<div class="a" style="left:1853.8px;top:1302.8px;font-size:11.5px;line-height:12px;color:#222">29×14=406</div>
<div class="a" style="left:1923.0px;top:1302.8px;width:20px;text-align:right;font-size:11.5px;line-height:12px;color:#5a8a3a;letter-spacing:0.5px">30:</div>
<div class="a" style="left:1947.0px;top:1302.8px;font-size:11.5px;line-height:12px;color:#222">29×10=290</div>
<div class="a" style="left:1084.2px;top:1315.0px;width:20px;text-align:right;font-size:11.5px;line-height:12px;color:#5a8a3a;letter-spacing:0.5px">31:</div>
<div class="a" style="left:1108.2px;top:1315.0px;font-size:11.5px;line-height:12px;color:#222">22×4=88</div>
<div class="a" style="left:1177.4px;top:1315.0px;width:20px;text-align:right;font-size:11.5px;line-height:12px;color:#5a8a3a;letter-spacing:0.5px">32:</div>
<div class="a" style="left:1201.4px;top:1315.0px;font-size:11.5px;line-height:12px;color:#222">7÷7=1</div>
<div class="a" style="left:1270.6px;top:1315.0px;width:20px;text-align:right;font-size:11.5px;line-height:12px;color:#5a8a3a;letter-spacing:0.5px">33:</div>
<div class="a" style="left:1294.6px;top:1315.0px;font-size:11.5px;line-height:12px;color:#222">17×3=51</div>
<div class="a" style="left:1363.8px;top:1315.0px;width:20px;text-align:right;font-size:11.5px;line-height:12px;color:#5a8a3a;letter-spacing:0.5px">34:</div>
<div class="a" style="left:1387.8px;top:1315.0px;font-size:11.5px;line-height:12px;color:#222">19×4=76</div>
<div class="a" style="left:1457.0px;top:1315.0px;width:20px;text-align:right;font-size:11.5px;line-height:12px;color:#5a8a3a;letter-spacing:0.5px">35:</div>
<div class="a" style="left:1481.0px;top:1315.0px;font-size:11.5px;line-height:12px;color:#222">84÷7=12</div>
<div class="a" style="left:1550.2px;top:1315.0px;width:20px;text-align:right;font-size:11.5px;line-height:12px;color:#5a8a3a;letter-spacing:0.5px">36:</div>
<div class="a" style="left:1574.2px;top:1315.0px;font-size:11.5px;line-height:12px;color:#222">28×17=476</div>
<div class="a" style="left:1643.4px;top:1315.0px;width:20px;text-align:right;font-size:11.5px;line-height:12px;color:#5a8a3a;letter-spacing:0.5px">37:</div>
<div class="a" style="left:1667.4px;top:1315.0px;font-size:11.5px;line-height:12px;color:#222">27×11=297</div>
<div class="a" style="left:1736.6px;top:1315.0px;width:20px;text-align:right;font-size:11.5px;line-height:12px;color:#5a8a3a;letter-spacing:0.5px">38:</div>
<div class="a" style="left:1760.6px;top:1315.0px;font-size:11.5px;line-height:12px;color:#222">198÷18=11</div>
<div class="a" style="left:1829.8px;top:1315.0px;width:20px;text-align:right;font-size:11.5px;line-height:12px;color:#5a8a3a;letter-spacing:0.5px">39:</div>
<div class="a" style="left:1853.8px;top:1315.0px;font-size:11.5px;line-height:12px;color:#222">20×27=540</div>
<div class="a" style="left:1923.0px;top:1315.0px;width:20px;text-align:right;font-size:11.5px;line-height:12px;color:#5a8a3a;letter-spacing:0.5px">40:</div>
<div class="a" style="left:1947.0px;top:1315.0px;font-size:11.5px;line-height:12px;color:#222">5×14=70</div>
<div class="a" style="left:1084.2px;top:1327.1px;width:20px;text-align:right;font-size:11.5px;line-height:12px;color:#5a8a3a;letter-spacing:0.5px">41:</div>
<div class="a" style="left:1108.2px;top:1327.1px;font-size:11.5px;line-height:12px;color:#222">189÷7=27</div>
<div class="a" style="left:1177.4px;top:1327.1px;width:20px;text-align:right;font-size:11.5px;line-height:12px;color:#5a8a3a;letter-spacing:0.5px">42:</div>
<div class="a" style="left:1201.4px;top:1327.1px;font-size:11.5px;line-height:12px;color:#222">16×23=368</div>
<div class="a" style="left:1270.6px;top:1327.1px;width:20px;text-align:right;font-size:11.5px;line-height:12px;color:#5a8a3a;letter-spacing:0.5px">43:</div>
<div class="a" style="left:1294.6px;top:1327.1px;font-size:11.5px;line-height:12px;color:#222">19×13=247</div>
<div class="a" style="left:1363.8px;top:1327.1px;width:20px;text-align:right;font-size:11.5px;line-height:12px;color:#5a8a3a;letter-spacing:0.5px">44:</div>
<div class="a" style="left:1387.8px;top:1327.1px;font-size:11.5px;line-height:12px;color:#222">20×13=260</div>
<div class="a" style="left:1457.0px;top:1327.1px;width:20px;text-align:right;font-size:11.5px;line-height:12px;color:#5a8a3a;letter-spacing:0.5px">45:</div>
<div class="a" style="left:1481.0px;top:1327.1px;font-size:11.5px;line-height:12px;color:#222">17×18=306</div>
<div class="a" style="left:1550.2px;top:1327.1px;width:20px;text-align:right;font-size:11.5px;line-height:12px;color:#5a8a3a;letter-spacing:0.5px">46:</div>
<div class="a" style="left:1574.2px;top:1327.1px;font-size:11.5px;line-height:12px;color:#222">26×18=468</div>
<div class="a" style="left:1643.4px;top:1327.1px;width:20px;text-align:right;font-size:11.5px;line-height:12px;color:#5a8a3a;letter-spacing:0.5px">47:</div>
<div class="a" style="left:1667.4px;top:1327.1px;font-size:11.5px;line-height:12px;color:#222">4×18=72</div>
<div class="a" style="left:1736.6px;top:1327.1px;width:20px;text-align:right;font-size:11.5px;line-height:12px;color:#5a8a3a;letter-spacing:0.5px">48:</div>
<div class="a" style="left:1760.6px;top:1327.1px;font-size:11.5px;line-height:12px;color:#222">8×17=136</div>
<div class="a" style="left:1829.8px;top:1327.1px;width:20px;text-align:right;font-size:11.5px;line-height:12px;color:#5a8a3a;letter-spacing:0.5px">49:</div>
<div class="a" style="left:1853.8px;top:1327.1px;font-size:11.5px;line-height:12px;color:#222">330÷11=30</div>
<div class="a" style="left:1923.0px;top:1327.1px;width:20px;text-align:right;font-size:11.5px;line-height:12px;color:#5a8a3a;letter-spacing:0.5px">50:</div>
<div class="a" style="left:1947.0px;top:1327.1px;font-size:11.5px;line-height:12px;color:#222">16×19=304</div>
<div class="a" style="left:1084.2px;top:1339.2px;width:20px;text-align:right;font-size:11.5px;line-height:12px;color:#5a8a3a;letter-spacing:0.5px">51:</div>
<div class="a" style="left:1108.2px;top:1339.2px;font-size:11.5px;line-height:12px;color:#222">77÷11=7</div>
<div class="a" style="left:1177.4px;top:1339.2px;width:20px;text-align:right;font-size:11.5px;line-height:12px;color:#5a8a3a;letter-spacing:0.5px">52:</div>
<div class="a" style="left:1201.4px;top:1339.2px;font-size:11.5px;line-height:12px;color:#222">27×20=540</div>
<div class="a" style="left:1270.6px;top:1339.2px;width:20px;text-align:right;font-size:11.5px;line-height:12px;color:#5a8a3a;letter-spacing:0.5px">53:</div>
<div class="a" style="left:1294.6px;top:1339.2px;font-size:11.5px;line-height:12px;color:#222">22×19=418</div>
<div class="a" style="left:1363.8px;top:1339.2px;width:20px;text-align:right;font-size:11.5px;line-height:12px;color:#5a8a3a;letter-spacing:0.5px">54:</div>
<div class="a" style="left:1387.8px;top:1339.2px;font-size:11.5px;line-height:12px;color:#222">85÷5=17</div>
<div class="a" style="left:1457.0px;top:1339.2px;width:20px;text-align:right;font-size:11.5px;line-height:12px;color:#5a8a3a;letter-spacing:0.5px">55:</div>
<div class="a" style="left:1481.0px;top:1339.2px;font-size:11.5px;line-height:12px;color:#222">6×27=162</div>
<div class="a" style="left:1550.2px;top:1339.2px;width:20px;text-align:right;font-size:11.5px;line-height:12px;color:#5a8a3a;letter-spacing:0.5px">56:</div>
<div class="a" style="left:1574.2px;top:1339.2px;font-size:11.5px;line-height:12px;color:#222">52÷26=2</div>
<div class="a" style="left:1643.4px;top:1339.2px;width:20px;text-align:right;font-size:11.5px;line-height:12px;color:#5a8a3a;letter-spacing:0.5px">57:</div>
<div class="a" style="left:1667.4px;top:1339.2px;font-size:11.5px;line-height:12px;color:#222">15÷15=1</div>
<div class="a" style="left:1736.6px;top:1339.2px;width:20px;text-align:right;font-size:11.5px;line-height:12px;color:#5a8a3a;letter-spacing:0.5px">58:</div>
<div class="a" style="left:1760.6px;top:1339.2px;font-size:11.5px;line-height:12px;color:#222">130÷10=13</div>
<div class="a" style="left:1829.8px;top:1339.2px;width:20px;text-align:right;font-size:11.5px;line-height:12px;color:#5a8a3a;letter-spacing:0.5px">59:</div>
<div class="a" style="left:1853.8px;top:1339.2px;font-size:11.5px;line-height:12px;color:#222">27÷9=3</div>
<div class="a" style="left:1923.0px;top:1339.2px;width:20px;text-align:right;font-size:11.5px;line-height:12px;color:#5a8a3a;letter-spacing:0.5px">60:</div>
<div class="a" style="left:1947.0px;top:1339.2px;font-size:11.5px;line-height:12px;color:#222">16÷4=4</div>
<div class="a" style="left:0px;top:1341.5px;width:2486px;height:26.5px;background:#e3e5ea"></div>
<svg style="left:14px;top:1350px" width="11" height="10" viewBox="0 0 11 10"><path d="M1 0 V10 M10 1 L5 5 L10 9" fill="none" stroke="#888" stroke-width="1.5" /></svg>
<svg style="left:36px;top:1350px" width="8" height="10" viewBox="0 0 8 10"><path d="M7 1 L2 5 L7 9" fill="none" stroke="#888" stroke-width="1.5" /></svg>
<svg style="left:60px;top:1350px" width="8" height="10" viewBox="0 0 8 10"><path d="M1 1 L6 5 L1 9" fill="none" stroke="#888" stroke-width="1.5" /></svg>
<svg style="left:79px;top:1350px" width="11" height="10" viewBox="0 0 11 10"><path d="M1 1 L6 5 L1 9 M10 0 V10" fill="none" stroke="#888" stroke-width="1.5" /></svg>
<div class="c" style="left:102px;top:1341.5px;width:59px;height:24.5px;background:#ffc000;border-radius:0 0 5px 5px;font-size:13px;line-height:27px;color:#222">加减法</div>
<div class="c" style="left:162px;top:1341.5px;width:59px;height:25px;background:#fff;border-radius:0 0 5px 5px;font-size:13px;line-height:27px;color:#157a4a;font-weight:bold">乘除法</div>
<div class="a" style="left:167.0px;top:1364.5px;width:49.0px;height:2.0px;background:#7030a0"></div>
<div class="c" style="left:221.7px;top:1341.5px;width:71px;height:24.5px;background:#00b0f0;border-radius:0 0 5px 5px;font-size:13px;line-height:27px;color:#222">复合运算</div>
<div class="c" style="left:294.2px;top:1341.5px;width:46.4px;height:24.5px;background:#00b050;border-radius:0 0 5px 5px;font-size:13px;line-height:27px;color:#fff">关于</div>
<svg style="left:347px;top:1349px" width="12" height="12" viewBox="0 0 12 12"><path d="M6 0 V12 M0 6 H12" fill="none" stroke="#222" stroke-width="2" /></svg>
<div class="a" style="left:1484.5px;top:1349.0px;width:2.0px;height:11.0px;background:#999"></div>
<svg style="left:1497px;top:1350px" width="8" height="10"><path d="M7 1 V9 L1 5Z" fill="#777"/></svg>
<div class="a" style="left:1514px;top:1350.8px;width:924px;height:8px;border-radius:4px;background:#c9cbd1"></div>
<svg style="left:2463px;top:1350px" width="8" height="10"><path d="M1 1 V9 L7 5Z" fill="#777"/></svg>
<div class="a" style="left:2482.5px;top:1349.0px;width:1.5px;height:11.0px;background:#999"></div>
<div class="a" style="left:2486px;top:1341.5px;width:17px;height:26.5px;background:#e3e5ea"></div>
<div class="a" style="left:2275px;top:1360px;width:240px;height:20px;background:#fff;border-radius:8px;border:1px solid #ddd"></div>
<div class="a" style="left:2480px;top:1364px;width:8px;height:8px;border-radius:50%;background:#f05a28"></div>
</body></html>
